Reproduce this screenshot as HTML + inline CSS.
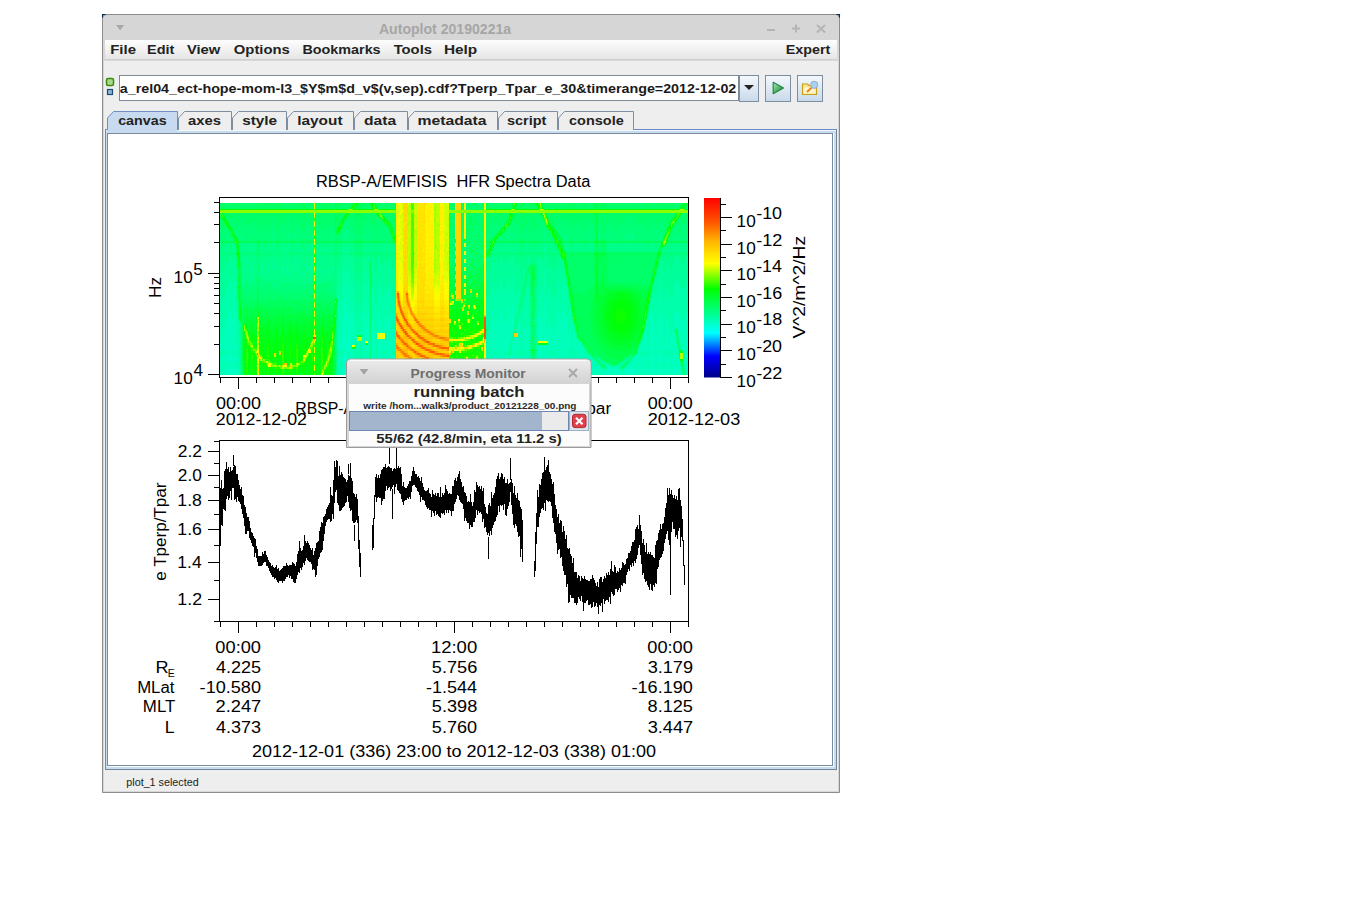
<!DOCTYPE html><html><head><meta charset="utf-8"><title>Autoplot</title><style>
html,body{margin:0;padding:0;background:#fff;width:1345px;height:916px;overflow:hidden;font-family:"Liberation Sans",sans-serif}
.a{position:absolute;box-sizing:border-box}
svg text{font-family:"Liberation Sans",sans-serif}
</style></head><body>
<div class="a" style="left:102px;top:14px;width:738px;height:779px;background:#d8d8d8;border:1px solid #8c8c8c;border-radius:2px 2px 0 0"></div>
<div class="a" style="left:103px;top:15px;width:736px;height:25px;background:#d6d6d6"></div>
<div class="a" style="left:105px;top:40px;width:732px;height:20px;background:linear-gradient(#fdfdfd,#e6e6e6);border-bottom:1px solid #cfcfcf"></div>
<div class="a" style="left:104px;top:61px;width:734px;height:730px;background:#eeeeee"></div>
<div class="a" style="left:119px;top:75px;width:620px;height:26px;background:#fff;border:1px solid #7b8a9b"></div>
<div class="a" style="left:739px;top:75px;width:20px;height:27px;background:linear-gradient(#f4f8fc,#c9d9ea);border:1px solid #7d8ea0"></div>
<div class="a" style="left:765px;top:75px;width:26px;height:27px;background:linear-gradient(#f4f8fc,#c9d9ea);border:1px solid #7d8ea0"></div>
<div class="a" style="left:797px;top:75px;width:26px;height:27px;background:linear-gradient(#f4f8fc,#c9d9ea);border:1px solid #7d8ea0"></div>
<div class="a" style="left:105px;top:129px;width:732px;height:641px;background:#c8dcf0;border:1px solid #6a8acb;border-right-color:#72849a;border-bottom-color:#72849a"></div>
<div class="a" style="left:106px;top:130px;width:730px;height:1px;background:#f4f8fc"></div>
<div class="a" style="left:833px;top:133px;width:1px;height:634px;background:#f8fbff"></div>
<div class="a" style="left:107px;top:766px;width:727px;height:1px;background:#f8fbff"></div>
<div class="a" style="left:107px;top:133px;width:726px;height:633px;background:#fff;border:1px solid #7a8a9a"></div>
<svg class="a" style="left:0;top:0" width="1345" height="916" viewBox="0 0 1345 916">
<defs>
<linearGradient id="cbar" x1="0" y1="0" x2="0" y2="1"><stop offset="0" stop-color="#ff0000"/><stop offset="0.133" stop-color="#ff5400"/><stop offset="0.247" stop-color="#ffb900"/><stop offset="0.365" stop-color="#ffff00"/><stop offset="0.506" stop-color="#00ff00"/><stop offset="0.753" stop-color="#00ffff"/><stop offset="0.882" stop-color="#0000ff"/><stop offset="1" stop-color="#000089"/></linearGradient>
<linearGradient id="specbg" x1="0" y1="0" x2="0" y2="1"><stop offset="0" stop-color="#00ff68"/><stop offset="0.3" stop-color="#00ff88"/><stop offset="0.7" stop-color="#00ffa4"/><stop offset="1" stop-color="#00ffb4"/></linearGradient>
<linearGradient id="dlgtitle" x1="0" y1="0" x2="0" y2="1"><stop offset="0" stop-color="#ececec"/><stop offset="1" stop-color="#d2d2d2"/></linearGradient>
<clipPath id="specclip"><rect x="220" y="203" width="468" height="172"/></clipPath>
<clipPath id="lineclip"><rect x="220" y="441" width="468" height="180"/></clipPath>
</defs>
<text x="110.23" y="54" font-size="13" font-weight="bold" fill="#222" text-anchor="start" textLength="25.76" lengthAdjust="spacingAndGlyphs" >File</text>
<text x="147.06" y="54" font-size="13" font-weight="bold" fill="#222" text-anchor="start" textLength="27.34" lengthAdjust="spacingAndGlyphs" >Edit</text>
<text x="186.93" y="54" font-size="13" font-weight="bold" fill="#222" text-anchor="start" textLength="33.31" lengthAdjust="spacingAndGlyphs" >View</text>
<text x="233.81" y="54" font-size="13" font-weight="bold" fill="#222" text-anchor="start" textLength="56.02" lengthAdjust="spacingAndGlyphs" >Options</text>
<text x="302.47" y="54" font-size="13" font-weight="bold" fill="#222" text-anchor="start" textLength="78.13" lengthAdjust="spacingAndGlyphs" >Bookmarks</text>
<text x="393.65" y="54" font-size="13" font-weight="bold" fill="#222" text-anchor="start" textLength="38.37" lengthAdjust="spacingAndGlyphs" >Tools</text>
<text x="443.9" y="54" font-size="13" font-weight="bold" fill="#222" text-anchor="start" textLength="33.35" lengthAdjust="spacingAndGlyphs" >Help</text>
<text x="785.77" y="54" font-size="13" font-weight="bold" fill="#222" text-anchor="start" textLength="44.61" lengthAdjust="spacingAndGlyphs" >Expert</text>
<text x="378.95" y="34" font-size="14" font-weight="bold" fill="#a6a6a6" text-anchor="start" textLength="132.25" lengthAdjust="spacingAndGlyphs" >Autoplot 20190221a</text>
<path d="M116 25 L124.2 25 L120.1 30.2 Z" fill="#a8a8a8"/>
<rect x="767" y="29" width="8" height="2" fill="#b4b4b4"/>
<path d="M792 28.5 H800 M796 24.5 V32.5" stroke="#b4b4b4" stroke-width="2"/>
<path d="M817 25 L825 32.5 M825 25 L817 32.5" stroke="#b4b4b4" stroke-width="2"/>
<path d="M102.6 17.5 V14.6 H105.5" stroke="#0a2a50" stroke-width="1.3" fill="none"/>
<path d="M836.5 14.6 H839.4 V17.5" stroke="#0a2a50" stroke-width="1.3" fill="none"/>
<rect x="106.5" y="78.5" width="7" height="7" rx="1.5" fill="#a8d888" stroke="#3f8a10" stroke-width="1.5"/>
<rect x="107.5" y="89.5" width="5" height="5" fill="#8cb4d4" stroke="#1d4d72" stroke-width="1.2"/>
<text x="119.77" y="93.3" font-size="13" font-weight="bold" fill="#1a1a1a" text-anchor="start" textLength="616.52" lengthAdjust="spacingAndGlyphs" >a_rel04_ect-hope-mom-l3_$Y$m$d_v$(v,sep).cdf?Tperp_Tpar_e_30&amp;timerange=2012-12-02</text>
<path d="M744 85 L754 85 L749 90 Z" fill="#222"/>
<linearGradient id="playg" x1="0" y1="0" x2="1" y2="1"><stop offset="0" stop-color="#b8e4b8"/><stop offset="0.6" stop-color="#3fae5a"/><stop offset="1" stop-color="#2a9048"/></linearGradient>
<path d="M773.2 82.3 L783.5 88 L773.2 93.7 Z" fill="url(#playg)" stroke="#23884a" stroke-width="1.2" stroke-linejoin="round"/>
<path d="M802.5 84 h5 l1.5 1.5 h7.5 v9 h-14 z" fill="#f8e68a" stroke="#c8a018" stroke-width="1.2"/>
<path d="M803.5 87.5 h12 v6 h-12 z" fill="#fff6c8"/>
<circle cx="814.2" cy="84.8" r="3.6" fill="#a8d0f4" stroke="#9aa6b8" stroke-width="0.9"/>
<path d="M811.6 87.6 L807 92" stroke="#f07a2a" stroke-width="2"/>
<path d="M107.5 130 V118 L113.5 111.5 H177.5 V130" fill="#c8daf0" stroke="#6f8fc4" stroke-width="1"/>
<path d="M178.5 130 V118 L184.5 111.5 H231.5 V130" fill="#eeeeee" stroke="#7d8ea0" stroke-width="1"/>
<path d="M232.5 130 V118 L238.5 111.5 H286.5 V130" fill="#eeeeee" stroke="#7d8ea0" stroke-width="1"/>
<path d="M287.5 130 V118 L293.5 111.5 H353.5 V130" fill="#eeeeee" stroke="#7d8ea0" stroke-width="1"/>
<path d="M354.5 130 V118 L360.5 111.5 H407.5 V130" fill="#eeeeee" stroke="#7d8ea0" stroke-width="1"/>
<path d="M408.5 130 V118 L414.5 111.5 H497.5 V130" fill="#eeeeee" stroke="#7d8ea0" stroke-width="1"/>
<path d="M498.5 130 V118 L504.5 111.5 H557.5 V130" fill="#eeeeee" stroke="#7d8ea0" stroke-width="1"/>
<path d="M558.5 130 V118 L564.5 111.5 H633.5 V130" fill="#eeeeee" stroke="#7d8ea0" stroke-width="1"/>
<rect x="107" y="130" width="70.5" height="3" fill="#c8daf0"/>
<text x="118.18" y="125" font-size="13" font-weight="bold" fill="#222" text-anchor="start" textLength="48.42" lengthAdjust="spacingAndGlyphs" >canvas</text>
<text x="188.06" y="125" font-size="13" font-weight="bold" fill="#222" text-anchor="start" textLength="32.93" lengthAdjust="spacingAndGlyphs" >axes</text>
<text x="242.16" y="125" font-size="13" font-weight="bold" fill="#222" text-anchor="start" textLength="34.99" lengthAdjust="spacingAndGlyphs" >style</text>
<text x="297.22" y="125" font-size="13" font-weight="bold" fill="#222" text-anchor="start" textLength="45.31" lengthAdjust="spacingAndGlyphs" >layout</text>
<text x="363.97" y="125" font-size="13" font-weight="bold" fill="#222" text-anchor="start" textLength="32.14" lengthAdjust="spacingAndGlyphs" >data</text>
<text x="417.48" y="125" font-size="13" font-weight="bold" fill="#222" text-anchor="start" textLength="69.08" lengthAdjust="spacingAndGlyphs" >metadata</text>
<text x="506.99" y="125" font-size="13" font-weight="bold" fill="#222" text-anchor="start" textLength="39.45" lengthAdjust="spacingAndGlyphs" >script</text>
<text x="569.02" y="125" font-size="13" font-weight="bold" fill="#222" text-anchor="start" textLength="54.7" lengthAdjust="spacingAndGlyphs" >console</text>
<text x="126.3" y="786" font-size="10.5" font-weight="normal" fill="#222" text-anchor="start" textLength="72.37" lengthAdjust="spacingAndGlyphs" >plot_1 selected</text>
<text x="315.99" y="187" font-size="16" font-weight="normal" fill="#000" text-anchor="start" textLength="274.45" lengthAdjust="spacingAndGlyphs" xml:space="preserve">RBSP-A/EMFISIS  HFR Spectra Data</text>
<g clip-path="url(#specclip)">
<rect x="220" y="203" width="468" height="172" fill="url(#specbg)"/>
<g stroke-width="1" shape-rendering="crispEdges"><path d="M227.5 369v4m1 -4v4m1 -4v4m1 -16v4m0 8v4m1 -14v2m0 8v4m2 -4v4m1 -16v4m0 8v6m1 -6v4m107 -4v4m1 -32v8m0 8v6m0 4v8m1 -38v12m0 6v8m0 4v8m1 -18v4m0 6v8m1 -28v2m0 8v4m0 6v8m1 -42v16m0 6v8m0 4v8m1 -34v8m0 8v6m0 4v8m1 -6v4m1 -4v4m1 -14v2m0 8v4m1 -16v4m0 8v4m1 -2v2m10 -4v4m1 -14v2m0 8v4m1 -2v2m2 -4v4m1 -14v2m0 8v4m4 -2v2m6 -4v4m1 -14v2m0 8v4m6 -2v2m3 -4v4m1 -4v4m1 -4v4m102 -14v2m0 8v4m1 -4v4m3 -4v4m4 -16v4m0 8v6m1 -18v4m0 8v6m1 -6v4m3 -4v4m2 -28v4m0 8v4m0 6v8m1 -18v4m0 8v6m1 -18v4m0 8v6m1 -6v4m1 -16v4m0 8v6m1 -18v4m0 6v8m1 -6v4m14 -14v2m0 8v4m11 -4v4m1 -4v4m1 -4v4m1 -4v4m2 -16v4m0 6v8m1 -40v6m0 4v4m0 6v8m0 4v8m1 -28v2m0 8v4m0 6v8m3 -6v4m1 -2v2m8 -4v4m1 -14v2m0 8v4m1 -4v4m3 -14v2m0 8v4m1 -4v4m1 -4v4m1 -14v2m0 8v4m1 -4v4m12 -4v4m1 -2v2m1 -2v2m1 -4v4m1 -4v4m5 -4v4m1 -4v4m1 -4v4m1 -4v4m1 -4v4m8 -4v4m8 -4v4m1 -4v6m6 -6v4m11 -2v2m1 -4v6m1 -6v4m1 -4v4m1 -4v4m1 -4v6m1 -8v8m1 -8v8m1 -6v4m1 -4v4m4 -2v2m7 -4v4m5 -4v4m1 -4v4m1 -4v4m1 -4v4m4 -2v2m1 -2v2m1 -4v4m1 -14v2m0 8v4m1 -16v4m0 8v4m5 -2v2m1 -4v4m7 -14v2m0 8v4m1 -14v2m0 8v4m1 -4v4m1 -4v4m1 -4v4m1 -4v4m7 -4v4m1 -16v4m0 8v4" stroke="#00ffca"/><path d="M220.5 323v28m0 4v20m1 -34v8m0 8v6m0 4v8m1 -34v8m0 8v6m0 4v8m1 -36v10m0 6v8m0 4v8m1 -42v18m0 4v8m0 4v8m1 -44v20m0 4v8m0 2v10m1 -56v32m0 2v22m1 -62v56m0 4v2m1 -58v52m0 4v2m1 -62v56m0 4v2m1 -64v46m0 4v8m0 4v2m1 -64v48m0 2v8m0 4v2m1 -56v32m0 2v22m1 -60v54m0 4v2m1 -66v48m0 4v8m1 -56v56m0 4v2m1 -32v6m0 8v6m0 4v8m1 -38v12m0 6v8m0 4v8m1 -28v2m0 8v6m0 4v8m1 -6v4m99 -46v24m0 4v20m1 -56v32m0 2v22m1 -34v8m0 8v6m0 4v8m1 -40v14m0 6v8m0 4v8m1 -60v54m0 4v2m1 -74v40m0 8v8m0 6v4m1 -68v38m0 12v6m0 8v4m1 -62v52m0 4v6m1 -62v42m0 2v8m0 4v6m1 -70v36m0 16v6m0 8v4m1 -66v40m0 8v8m0 6v4m1 -54v56m0 4v2m1 -60v54m0 4v2m1 -64v48m0 2v8m0 4v2m1 -64v34m0 4v8m0 4v8m0 4v2m1 -58v28m0 4v22m0 2v2m1 -38v8m0 10v8m0 4v8m1 -6v4m1 -4v4m1 -16v4m0 8v6m1 -28v2m0 8v4m0 6v8m1 -18v4m0 8v6m1 -6v4m1 -4v4m1 -32v8m0 8v6m0 4v8m1 -60v54m0 4v2m1 -64v48m0 2v8m0 4v2m1 -58v24m0 4v26m0 2v2m1 -50v16m0 4v6m0 4v20m1 -60v26m0 4v24m0 4v2m1 -64v48m0 2v8m0 4v2m1 -18v4m2 -4v4m0 8v4m1 -56v54m0 2v2m1 -56v32m0 2v22m1 -44v20m0 4v8m0 2v10m1 -28v2m0 8v4m0 6v8m1 -18v4m0 6v8m1 -48v6m0 6v12m0 4v20m1 -62v20m0 6v30m0 4v2m1 -64v22m0 6v20m0 2v8m0 4v2m1 -56v14m0 6v12m0 2v22m1 -52v10m0 6v12m0 4v20m1 -46v4m0 6v12m0 4v8m0 2v10m1 -54v12m0 6v12m0 4v20m1 -54v12m0 6v12m0 4v20m1 -58v54m0 2v2m1 -52v28m0 4v20m1 -56v32m0 2v22m1 -60v54m0 4v2m1 -60v54m0 4v2m1 -60v54m0 4v2m1 -46v22m0 4v20m1 -42v16m0 6v8m0 4v8m1 -34v8m0 8v6m0 4v8m1 -46v22m0 4v8m0 2v10m1 -50v26m0 4v20m91 -32v6m0 8v6m0 4v8m1 -36v10m0 6v8m0 4v8m1 -42v18m0 4v8m0 2v10m1 -48v24m0 4v20m1 -42v16m0 6v8m0 4v8m1 -56v32m0 2v22m1 -64v48m0 2v8m0 4v2m1 -58v52m0 4v2m1 -54v30m0 4v20m1 -52v28m0 4v20m1 -58v52m0 4v2m1 -46v22m0 4v20m1 -54v30m0 4v20m1 -54v30m0 4v20m1 -68v50m0 4v8m1 -62v50m0 4v8m1 -54v54m0 4v2m1 -56v32m0 2v22m1 -52v28m0 4v20m1 -58v52m0 4v2m1 -54v30m0 4v20m1 -72v42m0 4v8m0 4v6m1 -60v44m0 10v8m1 -58v38m0 12v8m1 -52v24m0 14v14m0 4v2m1 -68v32m0 12v6m0 4v8m1 -64v28m0 12v12m0 4v6m1 -54v14m0 14v28m0 4v2m1 -38v14m0 4v20m1 -38v14m0 4v8m0 2v10m1 -44v2m0 4v14m0 4v20m1 -46v4m0 4v14m0 4v20m1 -52v28m0 2v22m1 -54v30m0 4v20m1 -34v8m0 8v6m0 4v8m1 -18v4m0 8v4m1 -16v4m0 8v6m1 -48v24m0 4v20m1 -48v24m0 4v20m1 -36v10m0 6v8m0 4v8m1 -46v22m0 4v8m0 2v10m1 -64v48m0 2v8m0 4v2m1 -56v2m0 4v26m0 2v22m1 -6v2m8 -28v6m0 8v6m0 4v8m1 -62v28m0 4v24m0 4v2m1 -62v28m0 4v24m0 4v2m1 -60v26m0 4v24m0 4v2m1 -58v24m0 4v24m0 4v2m1 -56v22m0 4v30m1 -68v34m0 4v12m0 4v6m1 -68v36m0 14v6m0 8v4m1 -62v36m0 4v2m0 2v8m0 4v6m1 -38v12m0 4v6m0 4v20m1 -46v12m0 4v6m0 4v20m1 -60v54m0 4v2m1 -56v52m0 2v2m1 -50v26m0 4v20m1 -52v28m0 4v20m1 -48v24m0 4v20m1 -42v16m0 6v8m0 4v8m1 -38v12m0 6v8m0 4v8m1 -50v26m0 4v20m1 -50v26m0 4v20m1 -60v54m0 4v2m1 -64v48m0 2v8m0 4v2m1 -58v52m0 4v2m1 -56v56m1 -54v30m0 4v20m1 -64v48m0 2v8m0 4v2m1 -62v56m0 4v2m1 -62v56m0 4v2m1 -64v48m0 2v8m0 4v2m1 -60v54m0 4v2m1 -56v56m1 -38v12m0 6v8m0 4v8m1 -50v26m0 4v20m1 -48v24m0 4v20m1 -34v8m0 8v6m0 4v8m1 -18v4m0 8v6m1 -38v12m0 6v8m0 4v8m1 -42v18m0 2v22m1 -38v14m0 4v20m1 -36v12m0 4v20m1 -36v12m0 2v22m1 -34v28m0 4v2m1 -32v28m0 2v2m1 -32v28m0 2v2m1 -30v24m0 4v2m1 -30v24m0 4v2m1 -28v4m0 4v20m1 -18v4m0 6v8m1 -18v4m0 6v8m1 -20v8m0 4v8m1 -22v16m0 4v2m1 -20v14m0 4v2m1 -18v12m0 4v2m1 -18v12m0 4v2m1 -18v12m0 4v2m1 -16v16m1 -16v4m0 4v8m1 -14v14m1 -12v12m1 -12v12m1 -10v10m1 -10v10m1 -10v4m0 4v2m1 -8v8m1 -6v6m1 -6v6m1 -4v4m1 -4v4m1 -6v6m1 -6v6m1 -10v4m0 4v2m1 -10v4m1 -2v8m1 -8v8m1 -8v8m1 -8v8m1 -8v8m1 -8v2m0 4v2m1 -8v8m1 -8v8m1 -8v8m1 -8v8m1 -6v6m1 -6v6m1 -4v4m1 -4v4m1 -6v6m1 -6v6m1 -8v4m0 2v2m1 -8v2m1 -4v4m0 4v2m1 -10v4m0 4v2m1 -12v6m0 4v2m1 -14v8m1 -10v8m1 -8v8m1 -10v12m0 4v2m1 -18v12m0 4v2m1 -18v18m1 -20v8m0 4v8m1 -20v8m0 4v8m1 -22v18m0 2v2m1 -20v20m1 -30v6m0 4v20m1 -32v8m0 4v20m1 -34v10m0 4v20m1 -34v8m0 8v6m0 4v8m1 -40v16m0 4v20m1 -44v38m0 4v2m1 -48v24m0 4v20m1 -34v8m0 8v6m0 4v8m1 -28v2m0 8v4m0 6v8m1 -46v22m0 4v20m1 -62v56m0 4v2m1 -62v56m0 4v2m1 -62v56m0 4v2m1 -62v56m0 4v2m1 -50v26m0 4v20m1 -42v16m0 6v8m0 4v8m1 -38v12m0 6v8m0 4v8m1 -56v52m0 2v2m1 -56v52m0 2v2m1 -62v56m0 4v2m1 -64v48m0 2v8m0 4v2m1 -64v46m0 4v8m0 4v2m1 -56v56m1 -36v10m0 8v6m0 4v8m1 -30v4m0 8v6m0 4v8m1 -48v24m0 4v20m1 -58v54m0 2v2m1 -58v52m0 4v2m1 -48v24m0 4v20m1 -34v8m0 8v6m0 4v8m1 -42v18m0 4v8m0 4v8m1 -40v14m0 6v8m0 4v8m1 -46v22m0 4v20m1 -42v18m0 4v20m1 -64v18m0 4v26m0 2v8m0 4v2m1 -64v16m0 12v20m0 2v8m0 4v2m1 -62v14m0 18v24m0 4v2m1 -62v14m0 26v16m0 4v2m1 -64v20m0 24v14m0 4v2m1 -62v22m0 2v2m0 24v6m0 4v2m1 -58v24m0 26v8m1 -52v24m0 24v4m1 -56v32m1 -28v28m0 4v4m1 -38v30m0 4v8m1 -34v22m0 4v8m0 4v4m1 -58v56m0 4v2m1 -64v46m0 4v8m0 4v2" stroke="#00ffba"/><path d="M220.5 291v32m0 28v4m1 -54v40m0 8v8m0 6v4m1 -66v40m0 8v8m0 6v4m1 -68v40m0 10v6m0 8v4m1 -70v36m0 18v4m0 8v4m1 -72v36m0 20v4m0 8v2m1 -76v30m0 32v2m1 -70v30m1 -26v30m1 -34v30m1 -32v30m1 -30v30m1 -22v30m0 32v2m1 -68v30m1 -36v30m1 -24v28m1 -8v38m0 6v8m0 6v4m1 -48v18m0 12v6m0 8v4m1 -46v26m0 2v8m0 6v4m1 -30v12m0 6v14m0 4v2m98 -52v28m0 4v8m0 4v8m1 -82v6m0 2v26m0 24v4m1 -66v30m0 32v2m1 -52v40m0 8v8m0 6v4m1 -68v36m0 14v6m0 8v4m1 -82v30m1 -42v28m1 -30v28m1 -24v30m1 -30v30m1 -36v28m1 -26v30m1 -18v30m1 -28v30m1 -34v30m1 -30v30m1 -24v30m1 -18v38m0 12v6m0 8v4m1 -54v56m0 4v2m1 -62v56m0 4v2m1 -68v28m0 6v16m0 4v8m1 -64v30m0 6v6m0 2v8m0 4v6m1 -58v26m0 6v16m0 4v8m1 -56v22m0 6v28m0 4v2m1 -62v22m0 6v28m0 4v2m1 -74v40m0 8v8m0 6v4m1 -82v30m1 -34v30m1 -24v30m1 -24v32m0 26v4m1 -70v30m1 -34v30m1 0v2m0 6v2m0 2v2m0 2v2m0 2v4m0 2v14m0 4v2m0 4v2m0 2v10m2 -64v46m0 4v8m0 4v2m1 -88v30m1 -28v30m0 32v2m1 -58v36m0 20v4m0 8v2m1 -60v42m0 2v8m0 4v6m1 -62v52m0 4v6m1 -72v32m0 24v4m1 -72v30m1 -32v30m1 -22v30m0 32v2m1 -62v32m0 28v4m1 -60v34m0 22v4m0 8v2m1 -74v30m0 30v4m1 -64v30m0 30v4m1 -68v30m1 -26v32m0 28v4m1 -66v30m0 32v2m1 -68v30m1 -30v30m1 -30v30m1 -20v34m0 22v4m1 -58v36m0 16v6m0 8v4m1 -66v40m0 8v8m0 6v4m1 -72v34m0 22v4m0 8v2m1 -72v32m0 26v4m91 -52v24m0 6v10m0 6v8m0 6v4m1 -66v28m0 2v8m0 10v6m0 8v4m1 -70v36m0 18v4m0 8v2m1 -70v32m0 24v4m1 -58v36m0 16v6m0 8v4m1 -78v30m0 32v2m1 -72v30m1 -24v30m1 -26v30m0 30v4m1 -64v32m0 28v4m1 -68v30m1 -22v34m0 22v4m1 -64v30m0 30v4m1 -64v30m0 30v4m1 -78v30m1 -30v30m1 -22v30m1 -26v30m0 32v2m1 -62v32m0 28v4m1 -68v30m1 -26v30m0 30v4m1 -80v28m1 -26v30m0 44v2m0 2v2m1 -76v30m0 44v2m1 -70v30m0 24v4m0 8v2m1 -78v30m0 32v2m0 8v2m1 -76v30m0 28v2m0 6v4m1 -62v30m0 14v4m0 8v2m1 -50v36m0 24v4m1 -58v22m0 12v2m0 18v4m0 8v2m1 -72v22m0 12v4m0 20v4m1 -60v14m0 14v6m0 22v4m1 -66v16m0 2v2m0 8v6m0 28v2m1 -62v10m0 14v6m0 30v4m1 -42v28m0 8v8m0 6v4m1 -56v46m0 4v8m0 4v2m1 -66v48m0 4v8m1 -68v26m0 24v4m1 -58v30m0 24v4m1 -54v38m0 10v6m0 8v4m1 -72v34m0 22v4m0 8v2m1 -82v28m1 -24v6m0 2v24m0 2v4m0 26v2m1 -44v2m0 2v2m0 14v2m0 2v16m0 8v12m0 2v4m1 -18v2m5 10v4m1 -46v12m0 2v4m0 2v2m0 6v8m0 4v8m1 -74v42m0 6v8m0 6v4m1 -82v28m1 -30v30m1 -28v30m1 -28v30m1 -28v30m1 -42v30m1 -38v30m1 -24v30m1 -10v34m0 22v4m1 -60v34m0 22v4m1 -70v30m1 -26v30m1 -26v32m0 26v4m1 -64v32m0 28v4m1 -60v32m0 24v4m1 -58v36m0 16v6m0 8v4m1 -68v38m0 12v6m0 8v4m1 -74v32m0 26v4m1 -62v32m0 26v4m1 -70v30m1 -34v30m1 -24v30m1 -28v30m1 -28v30m0 30v4m1 -74v30m1 -28v30m1 -30v30m1 -30v28m1 -22v26m1 -22v26m1 -18v36m0 12v6m0 8v4m1 -64v22m0 26v4m1 -46v18m0 24v4m1 -38v24m0 8v8m0 6v4m1 -46v36m0 4v8m1 -44v12m0 12v6m0 8v4m1 -38v4m0 18v2m1 -20v4m0 14v4m1 -18v2m0 12v4m1 -4v2m2 -12v2m4 8v4m1 -6v8m0 4v6m1 -16v6m0 4v6m1 -16v4m0 8v4m2 -14v2m1 0v2m1 -2v2m3 6v4m1 -8v2m1 0v2m2 0v2m3 -6v2m1 0v2m0 4v2m1 -8v2m1 -2v2m0 6v2m1 -8v2m0 4v2m1 -8v2m1 -2v4m3 -2v2m1 -2v2m7 -2v2m1 -2v2m1 -2v4m1 -6v4m1 -4v2m0 4v2m1 -8v2m0 4v2m1 -10v2m1 -2v2m0 4v2m2 -10v2m0 4v2m2 -4v2m7 -10v2m1 6v4m1 -4v4m1 -18v4m1 -6v8m1 -4v4m1 -14v2m0 8v4m1 -18v4m0 10v4m1 -18v4m0 8v8m0 6v4m1 -34v2m0 16v4m1 -26v2m1 -8v4m0 24v4m1 -36v22m0 8v8m0 6v4m1 -52v32m0 2v8m0 4v6m1 -58v20m0 22v4m1 -52v10m1 -14v14m1 -18v18m1 -24v24m1 -20v32m0 26v4m1 -58v36m0 16v6m0 8v4m1 -68v38m0 12v6m0 8v4m1 -78v30m1 -30v30m1 -36v30m1 -32v30m1 -30v30m1 -22v30m1 -18v38m0 10v8m0 6v4m1 -64v42m0 4v8m0 6v4m1 -74v34m0 24v4m1 -68v30m1 -30v30m1 -24v34m0 24v4m1 -54v40m0 8v8m0 6v4m1 -70v36m0 18v4m0 8v4m1 -70v38m0 14v6m0 8v4m1 -72v34m0 22v4m1 -60v38m0 18v4m1 -74v30m0 20v2m1 -52v30m0 16v2m0 8v2m1 -56v30m0 14v2m0 12v4m1 -62v30m0 14v2m0 20v4m1 -72v30m0 20v2m0 18v2m1 -70v30m0 22v2m0 6v2m0 14v4m1 -76v30m0 24v4m0 20v2m1 -76v32m0 24v2m0 20v2m1 -82v30m1 -28v32m0 28v4m0 4v4m1 -74v32m0 30v4m0 8v4m1 -72v34m0 22v4m0 8v4m0 4v2m1 -90v30m1 -32v30" stroke="#00ffaa"/><path d="M220.5 263v28m1 -20v30m1 -28v28m1 -30v28m1 -30v28m1 -30v28m1 -32v26m1 -32v26m1 -22v26m1 -30v26m1 -26v24m1 -24v24m1 -18v26m1 -30v26m1 -28v22m1 -20v26m1 -2v22m1 -4v18m2 2v16m0 12v6m1 12v8m2 -118v6m0 2v4m1 -6v2m1 8v2m1 -4v2m1 2v2m1 -10v2m1 -8v2m0 6v2m3 -6v2m0 2v2m1 -8v2m0 6v2m0 2v2m1 -12v2m3 4v2m4 -8v2m1 -2v4m0 2v2m1 -6v2m1 -2v2m0 6v2m1 -6v2m4 -8v4m0 2v2m3 -6v2m0 2v2m1 -14v2m0 2v2m0 2v2m1 -10v2m0 6v2m1 -4v6m1 0v2m4 -6v2m2 -4v2m0 2v2m1 -6v8m1 -10v4m0 2v2m1 -4v2m0 4v2m0 4v2m2 -12v4m1 -16v2m0 4v8m1 -12v2m0 12v2m1 -20v14m1 2v2m1 -2v2m2 -8v6m0 2v2m1 -18v2m0 4v2m0 4v2m1 -4v4m1 -10v6m1 -2v4m0 2v2m0 2v2m1 -16v4m0 2v4m2 2v2m0 4v2m2 -8v2m4 -10v4m1 -6v2m1 2v4m1 -2v2m1 -4v4m1 -6v8m1 -10v2m0 4v4m1 -16v2m0 4v4m0 2v4m4 -6v2m1 0v2m2 -2v2m1 -8v4m0 8v2m1 -20v2m0 4v2m0 6v2m1 -12v4m0 4v2m1 0v2m3 -4v2m1 0v2m1 -8v2m0 2v2m1 -4v4m0 2v2m2 -8v2m1 -6v8m4 0v28m0 6v18m0 28v4m0 8v4m1 -104v30m0 6v2m1 -38v26m1 -16v28m1 -32v30m1 -40v26m1 -36v4m0 2v18m1 -26v6m0 2v16m1 -20v2m0 4v18m1 -24v2m0 4v18m1 -30v8m0 2v14m1 -22v6m0 2v16m1 -14v26m1 -24v26m1 -28v24m1 -24v24m1 -20v26m1 -16v28m1 -16v30m1 -30v30m1 -36v30m1 -32v30m1 -26v30m1 -26v30m1 -30v30m1 -42v30m1 -42v26m1 -28v24m1 -20v26m1 -22v28m1 -34v26m1 -28v24m1 -22v2m0 16v2m0 6v2m0 6v2m0 2v2m0 2v6m0 2v2m0 4v4m0 2v2m0 2v2m0 2v2m0 4v2m0 14v4m0 8v2m1 -24v6m0 26v2m1 -94v30m1 -50v26m1 -24v26m1 -22v28m1 -20v30m1 -30v30m1 -38v28m1 -38v26m1 -26v24m1 -18v26m1 -24v26m1 -24v28m1 -32v28m1 -28v28m1 -30v26m1 -24v28m1 -28v26m1 -30v26m1 -26v26m1 -26v26m1 -18v28m1 -26v28m1 -24v28m1 -34v28m1 -30v28m59 -50v2m21 -36v2m2 30v2m1 -26v2m3 -16v2m5 68v30m0 24v2m1 -58v30m0 28v2m1 -62v28m1 -30v28m1 -26v28m1 -34v26m1 -32v24m1 -20v26m1 -24v28m1 -26v26m1 -30v26m1 -20v28m1 -32v28m1 -28v28m1 -34v20m1 -20v20m1 -18v26m1 -22v26m1 -26v28m1 -30v26m1 -24v28m1 -40v2m0 4v18m1 -18v20m0 76v2m1 -98v24m0 68v4m1 -92v26m0 58v6m1 -94v20m0 64v8m1 -98v2m0 4v18m0 60v6m1 -84v26m0 48v4m1 -72v28m0 38v2m1 -64v30m0 22v4m0 6v2m1 -66v28m0 22v4m1 -52v28m0 14v8m0 2v2m1 -58v26m0 16v2m0 2v2m1 -48v28m0 10v4m0 2v2m0 4v2m1 -42v24m0 12v4m1 -32v12m0 12v6m1 -34v10m0 14v8m1 -42v18m0 12v4m1 -34v12m0 14v4m1 -8v12m1 -18v12m1 -38v10m0 12v4m1 -26v8m0 10v12m0 6v2m1 -10v4m0 6v14m0 2v2m0 2v14m0 2v2m0 16v8m1 -48v2m0 8v2m0 2v2m0 2v6m0 4v2m0 8v2m0 4v2m0 4v2m0 8v6m1 -16v2m3 -42v2m0 10v2m0 6v2m0 16v2m0 10v2m1 -58v4m0 4v2m0 4v2m0 6v6m0 2v2m0 8v4m0 4v2m0 10v2m1 -86v2m0 2v6m0 2v26m0 12v2m0 4v2m0 2v6m0 8v4m1 -96v30m1 -44v28m1 -28v26m1 -24v26m1 -24v26m1 -26v28m1 -32v20m1 -32v8m0 2v14m1 -18v2m0 4v18m1 -8v28m1 -28v28m1 -36v26m1 -24v28m1 -24v28m1 -28v26m1 -24v28m1 -26v28m1 -26v28m1 -34v28m1 -28v28m1 -34v26m1 -28v24m1 -20v26m1 -26v28m1 -26v28m1 -28v18m1 -14v16m1 -12v12m1 -6v6m1 0v6m1 0v4m1 2v6m1 0v2m1 4v2m1 6v2m1 2v2m1 2v2m1 0v4m2 4v2m1 2v2m1 0v2m1 -2v2m2 0v4m2 0v2m2 2v2m7 6v2m4 2v2m1 -6v2m2 0v2m1 0v2m0 2v2m1 -8v2m1 6v2m1 -6v2m2 0v2m1 0v2m1 -6v2m4 0v2m1 -2v2m3 -2v2m1 -2v2m4 0v2m1 -4v2m1 -6v2m3 -4v4m4 -2v2m3 -114v2m0 106v2m2 -4v2m2 -4v2m1 -2v2m2 -10v2m1 -4v2m1 -6v2m2 -6v2m1 -6v2m1 -6v2m1 -8v2m1 -6v2m1 -6v2m1 -8v2m1 -8v2m1 -6v2m1 -8v4m1 -8v2m1 -6v10m1 -12v16m1 -20v22m1 -26v16m1 -20v20m1 -24v18m1 -22v20m1 -24v24m1 -20v28m1 -18v30m1 -28v30m1 -36v26m1 -32v26m1 -26v26m1 -22v28m1 -22v30m1 -32v28m1 -28v28m1 -30v28m1 -28v28m1 -38v24m1 -24v24m0 54v2m1 -80v26m0 54v2m1 -82v26m0 46v2m0 14v4m1 -92v24m0 52v2m0 14v2m0 2v2m1 -98v26m0 56v2m1 -80v26m0 58v4m1 -84v26m0 58v2m1 -90v28m0 78v2m0 4v2m1 -110v26m1 -28v26m0 78v4m1 -104v28m0 78v2m1 -118v26m1 -26v24" stroke="#00ff9a"/><path d="M220.5 243v10m0 2v8m1 -16v6m0 2v16m1 -22v4m0 2v18m1 -26v6m0 2v16m1 -26v8m0 2v14m1 -24v8m0 2v12m1 -24v10m0 2v8m1 -26v2m0 4v10m0 2v2m1 -14v10m0 2v6m1 -24v2m0 4v10m0 2v2m1 -20v2m0 4v10m0 2v2m1 -20v2m0 4v10m0 2v2m1 -14v10m0 2v8m1 -20v10m0 2v4m1 -16v10m0 2v2m1 -6v2m0 2v4m1 2v2m0 2v18m1 0v2m0 8v8m1 18v2m1 -84v2m1 -2v2m0 4v10m0 70v44m1 -134v6m0 4v10m0 2v16m0 4v2m0 6v2m1 -50v4m0 4v10m0 2v2m0 6v2m0 4v18m1 -44v10m0 2v8m0 2v18m0 2v2m1 -42v8m0 2v18m0 2v10m0 2v2m1 -42v6m0 4v14m0 2v8m0 2v4m1 -44v10m0 2v20m0 2v4m1 -38v10m0 2v12m0 2v14m1 -40v10m0 2v6m0 2v6m0 2v12m0 6v2m1 -48v10m0 2v30m1 -42v10m0 2v26m0 2v2m1 -42v10m0 2v10m0 2v2m0 2v4m0 2v4m0 2v2m1 -42v10m0 2v8m0 2v6m0 2v2m0 2v2m0 2v2m1 -40v10m0 2v10m0 2v16m1 -40v10m0 2v30m1 -42v10m0 2v14m0 2v10m0 2v4m1 -40v2m0 2v2m0 2v16m0 2v4m0 8v2m3 -40v6m0 2v26m0 8v2m1 -48v10m0 4v8m0 2v18m1 -42v10m0 2v10m0 4v2m0 2v6m0 2v4m1 -42v10m0 2v12m0 2v8m0 2v2m0 2v2m1 -42v6m0 2v2m0 2v12m0 2v6m0 2v4m0 2v2m1 -38v6m0 2v16m0 2v6m1 -28v2m0 4v20m0 2v4m0 2v2m1 -30v24m1 -36v8m0 2v28m1 -40v10m0 2v10m0 4v2m0 2v10m1 -40v10m0 2v26m1 -34v6m0 2v26m1 -38v10m0 2v12m0 2v2m0 2v4m0 2v2m1 -46v4m0 4v10m0 2v4m0 2v2m0 2v2m0 2v12m0 2v2m0 2v2m1 -56v6m0 4v10m0 2v4m0 2v6m0 2v16m1 -42v10m0 2v10m0 6v16m1 -44v10m0 2v16m0 2v8m0 2v4m1 -36v2m0 4v24m0 2v2m1 -34v2m0 4v20m0 6v2m1 -34v2m0 4v20m0 2v2m0 6v2m1 -46v10m0 2v12m0 2v2m0 4v8m1 -40v10m0 2v30m1 -42v10m0 2v10m0 2v2m0 2v10m1 -38v10m0 2v10m0 8v8m0 4v2m1 -44v10m0 2v8m0 4v2m0 2v14m1 -42v10m0 2v12m0 2v4m0 2v2m0 4v2m1 -38v8m0 2v24m0 2v4m1 -40v8m0 2v14m0 4v4m0 2v2m1 -44v2m0 4v10m0 2v2m0 2v4m0 8v10m1 -48v6m0 4v10m0 2v4m0 2v12m0 2v6m0 4v2m1 -56v8m0 4v10m0 16v8m0 2v6m1 -42v10m0 2v16m0 2v4m0 2v4m1 -36v6m0 2v16m0 2v8m1 -24v26m1 -40v10m0 2v10m0 6v2m0 2v6m0 2v2m1 -52v6m0 4v14m0 2v4m0 2v4m0 2v10m1 -46v4m0 4v10m0 2v12m0 4v12m0 2v2m1 -44v10m0 2v6m0 6v6m0 2v8m0 2v2m1 -44v10m0 2v10m0 4v2m0 2v2m0 2v2m1 -42v2m0 4v10m0 2v6m0 4v2m0 4v6m0 6v2m1 -42v10m0 2v28m0 4v2m1 -40v4m0 2v18m0 2v4m0 2v2m0 2v2m1 -36v2m0 4v18m0 2v6m1 -36v6m0 2v18m0 2v4m0 4v2m1 -36v4m0 2v30m1 -34v2m0 4v32m1 -44v8m0 2v24m0 2v2m0 2v4m1 -46v10m0 2v10m0 4v14m1 -46v2m0 4v10m0 2v8m0 2v20m1 -50v4m0 4v10m0 2v12m0 4v12m1 -40v10m0 2v14m0 2v16m1 -44v10m0 2v12m0 4v12m1 -40v10m0 2v10m0 8v10m1 -46v2m0 4v10m0 2v8m0 2v4m0 4v8m1 -44v2m0 4v10m0 2v2m0 2v4m0 4v2m0 4v10m0 6v2m2 -48v10m0 2v28m1 -40v10m0 2v28m1 -40v10m0 2v12m0 2v18m1 -44v10m0 2v14m0 2v8m0 2v2m1 -36v6m0 4v28m1 -40v8m0 2v14m0 2v10m1 -38v10m0 2v8m0 4v8m0 2v2m0 2v4m1 -48v2m0 4v10m0 2v2m0 2v4m0 2v6m0 2v10m1 -40v10m0 2v6m0 4v4m0 2v12m1 -36v6m0 2v16m0 2v10m0 6v2m1 -48v10m0 2v22m0 2v6m1 -38v6m0 2v28m1 -38v8m0 2v14m0 2v8m0 2v4m1 -40v8m0 2v16m0 2v6m1 -36v10m0 2v10m0 2v2m0 2v8m0 6v2m1 -44v10m0 2v12m0 4v2m0 2v8m1 -40v10m0 2v22m0 2v4m1 -40v10m0 2v12m0 2v12m1 -44v2m0 4v10m0 2v8m0 8v14m0 6v2m1 -48v4m0 2v2m0 4v20m0 4v10m1 -24v2m0 8v2m0 12v2m1 -36v2m0 2v4m0 4v8m0 2v18m0 30v2m0 2v2m0 2v14m0 10v4m0 6v6m1 -128v6m0 2v16m0 30v4m1 -62v10m0 2v8m1 -20v10m0 2v8m1 -14v4m0 2v18m1 -28v8m0 2v14m1 -32v2m0 4v10m0 2v4m1 -28v8m0 4v6m0 4v2m1 -26v12m0 2v4m0 6v2m1 -22v6m0 4v8m0 4v2m1 -26v8m0 4v8m0 2v4m1 -30v14m0 2v2m0 8v2m1 -26v10m0 4v4m0 6v2m1 -18v2m0 4v10m0 2v2m1 -14v10m0 2v4m1 -22v2m0 4v10m0 2v2m1 -22v4m0 4v10m0 2v2m1 -14v10m0 2v6m1 -14v6m0 2v16m1 -14v26m1 -26v26m1 -26v20m1 -26v2m0 4v18m1 -18v22m1 -22v26m1 -26v26m1 -36v6m0 2v16m1 -34v2m0 4v10m0 2v4m1 -24v4m0 4v10m0 2v2m1 -14v10m0 2v6m1 -18v10m0 2v10m1 -28v2m0 4v10m0 2v4m1 -24v4m0 4v10m0 2v2m1 -20v2m0 4v10m0 2v4m0 8v2m0 2v6m0 2v6m0 4v4m0 2v2m0 2v2m0 6v2m0 4v2m1 -72v10m0 2v6m0 46v2m0 24v2m0 4v2m0 6v2m0 2v2m0 4v6m0 2v8m1 -130v10m0 2v26m1 -38v10m0 2v6m1 -18v10m0 2v8m1 -18v8m0 2v12m1 -16v2m0 4v18m1 -24v2m0 4v18m1 -32v10m0 2v12m1 -30v2m0 4v10m0 2v2m1 -22v4m0 4v10m0 2v2m1 -14v10m0 2v8m1 -20v10m0 2v10m1 -22v10m0 2v12m1 -24v10m0 2v8m1 -20v10m0 2v8m1 -20v10m0 2v6m1 -18v10m0 2v8m1 -20v10m0 2v8m1 -20v10m0 2v4m1 -22v2m0 4v10m0 2v4m1 -16v10m0 2v4m1 -16v10m0 2v12m1 -22v8m0 2v14m1 -20v4m0 2v18m1 -28v8m0 2v12m1 -24v10m0 2v10m54 -26v2m0 22v2m1 -10v2m1 -22v2m0 14v2m0 2v6m1 -48v2m0 6v2m0 16v2m0 8v2m0 8v2m1 -54v2m9 2v2m0 20v2m1 0v2m0 6v2m3 2v2m0 4v2m2 6v2m2 -36v2m0 14v2m1 -32v2m1 22v2m1 -20v2m0 12v2m0 24v4m1 -58v2m0 20v2m0 28v2m1 -40v2m0 22v2m1 -8v2m1 -22v2m1 -16v2m2 26v2m0 18v2m1 -40v2m0 36v2m0 14v2m1 -58v2m0 22v2m0 16v2m0 4v2m1 -46v2m0 20v2m0 18v2m3 -2v16m0 58v2m1 -76v14m1 -14v12m1 -12v10m1 -10v12m1 -14v8m1 -12v2m0 2v2m1 -8v4m0 2v6m1 -14v6m0 2v8m1 -18v8m0 2v10m1 -22v10m0 2v6m1 -18v10m0 2v12m1 -24v10m0 2v8m1 -20v10m0 2v8m1 -26v2m0 4v10m0 2v2m1 -20v2m0 4v10m0 2v2m1 -14v10m0 2v4m1 -16v10m0 2v8m1 -20v10m0 2v8m1 -20v10m0 2v6m1 -18v10m0 2v8m1 -32v8m0 4v8m0 2v4m1 -24v6m0 4v10m0 2v2m1 -22v4m0 4v10m0 2v2m0 96v2m1 -112v10m0 2v6m0 90v2m1 -120v6m0 4v10m0 2v2m1 -24v6m0 4v8m0 4v2m1 -20v2m0 4v10m0 2v2m0 80v2m1 -96v10m0 2v8m0 64v2m1 -84v8m0 2v12m0 56v2m0 2v2m1 -86v10m0 2v10m0 54v2m0 2v4m1 -84v10m0 2v12m0 54v2m1 -80v10m0 2v8m0 48v6m1 -74v10m0 2v8m0 42v2m0 2v2m1 -62v4m0 2v18m0 24v6m1 -46v24m0 12v2m0 6v2m1 -46v20m0 10v4m0 4v2m1 -54v10m0 2v12m0 18v2m0 6v4m1 -54v10m0 2v12m0 12v4m0 6v4m1 -46v6m0 2v22m0 8v4m1 -46v10m0 2v18m0 8v2m1 -48v4m0 4v10m0 2v2m0 10v2m0 8v2m1 -42v2m0 4v10m0 2v2m1 -12v8m0 2v10m0 8v12m0 4v6m1 -46v4m0 2v8m0 34v2m0 2v2m0 2v2m0 4v8m0 6v2m0 6v4m0 2v8m0 4v2m0 2v2m0 4v2m0 2v4m1 -126v10m0 2v8m0 44v2m0 10v2m0 2v2m0 4v4m0 8v2m0 12v2m0 4v2m0 4v8m1 -128v6m0 2v8m0 72v2m0 8v2m0 8v2m1 -108v4m0 2v8m0 60v2m0 22v2m1 -104v8m0 2v8m0 50v2m0 2v2m0 2v4m0 2v2m0 6v2m0 4v2m0 28v4m1 -126v4m0 2v8m0 22v2m0 4v2m0 4v6m0 2v6m0 6v4m0 2v4m0 2v2m0 2v2m0 6v2m0 2v4m0 2v2m0 4v4m0 2v6m1 -120v4m0 2v14m0 4v16m0 2v2m0 6v2m1 -56v8m0 2v16m1 -34v2m0 4v10m0 2v2m1 -20v2m0 4v10m0 2v2m1 -20v2m0 4v10m0 2v4m1 -16v10m0 2v6m1 -18v10m0 2v6m1 -28v6m0 4v10m0 2v2m1 -28v12m0 2v2m0 8v2m1 -22v6m0 4v8m0 2v4m1 -14v10m0 2v12m1 -24v10m0 2v12m1 -24v10m0 2v4m1 -16v10m0 2v6m1 -18v10m0 2v10m1 -22v10m0 2v10m1 -22v10m0 2v12m1 -22v8m0 2v14m1 -22v6m0 2v16m1 -26v8m0 2v10m1 -18v6m0 2v10m1 -16v4m0 2v4m1 -8v2m0 2v2m1 -2v6m1 -4v4m1 -2v4m1 -28v4m0 20v4m1 -26v2m0 4v2m0 20v2m1 -30v2m0 4v6m0 20v2m1 -36v4m0 4v8m0 22v4m1 -40v2m0 4v8m0 26v6m1 -40v8m0 34v4m1 -42v4m0 42v2m1 -52v8m0 48v2m1 -58v8m0 54v2m1 -58v2m0 60v4m1 2v2m1 -72v4m0 70v2m1 -80v8m1 -8v8m0 78v4m1 -90v8m1 -8v8m1 -8v8m1 -8v8m1 -8v8m0 90v2m1 -100v8m1 -8v8m0 92v2m1 -102v8m1 96v2m2 -104v6m1 -14v2m0 4v8m1 -14v2m0 4v8m1 -8v8m1 -14v2m0 4v8m1 -8v8m1 -8v8m1 -4v4m2 108v2m1 -4v2m2 -2v4m0 2v2m1 -128v2m0 124v2m1 -2v2m3 0v2m1 -6v2m1 4v2m2 -132v2m0 6v6m1 -16v4m0 4v8m0 112v2m1 -122v8m1 -8v8m1 -8v8m1 -8v8m1 -8v8m0 114v2m1 -124v8m0 114v2m1 -124v8m1 -6v6m1 -6v6m1 -6v6m1 -6v6m0 112v2m1 -122v8m1 -8v8m1 -8v8m1 -8v8m0 112v2m0 2v2m1 -126v8m0 108v2m1 -118v8m0 114v2m1 -132v4m0 4v8m1 -16v4m0 4v8m0 106v2m0 4v2m1 -128v2m0 4v8m0 106v2m1 -116v8m1 -16v4m0 4v8m0 106v4m1 -130v8m0 4v8m1 -20v8m0 4v6m1 -12v2m0 4v8m1 -8v8m1 -8v8m1 -6v6m1 -4v4m0 100v2m1 -110v8m0 96v2m1 -106v8m1 -8v8m0 90v2m1 -100v8m1 -8v8m1 -2v2m1 -8v8m1 -14v2m0 4v8m1 -8v8m1 -2v2m0 64v2m1 -6v2m1 -70v8m0 54v2m1 -70v2m0 4v8m0 48v2m1 -64v2m0 4v8m0 42v4m1 -60v2m0 4v8m0 38v2m1 -54v2m0 4v8m0 34v2m1 -44v8m0 30v2m1 -38v6m0 26v4m1 -34v4m0 24v2m1 -34v8m0 18v4m1 -30v4m0 18v4m1 -32v2m0 4v2m0 18v2m1 -30v4m0 18v4m1 -26v4m0 16v2m1 -8v4m0 2v6m1 -12v4m0 2v16m1 -22v4m0 2v18m1 -26v6m0 2v12m1 -22v8m0 2v6m1 -18v10m0 2v6m1 -18v10m0 2v10m1 -18v6m0 2v16m1 -26v8m0 2v14m1 -24v8m0 2v14m1 -26v10m0 2v12m1 -24v10m0 2v12m1 -30v2m0 4v10m0 2v2m0 72v2m1 -96v4m0 4v10m0 2v2m0 74v4m1 -98v2m0 4v10m0 2v2m1 -20v2m0 4v10m0 2v2m0 76v2m1 -100v4m0 4v10m0 2v2m0 78v4m1 -102v2m0 4v10m0 2v2m0 84v2m0 14v2m1 -116v10m0 2v6m0 100v4m1 -122v10m0 2v10m1 -22v10m0 2v6m0 110v2m1 -130v10m0 2v10m0 98v2m1 -122v10m0 2v8m0 108v2m1 -130v10m0 2v12m1 -30v2m0 4v10m0 2v2m1 -22v4m0 4v10m0 2v2" stroke="#00ff8a"/><path d="M220.5 225v16m0 12v2m1 -26v10m0 4v4m0 6v2m1 -24v8m0 4v6m0 4v2m1 -26v12m0 2v4m0 6v2m1 -28v14m0 2v2m0 8v2m1 -28v14m0 2v2m0 8v2m1 -26v12m0 12v2m1 -26v8m0 2v2m0 12v2m1 -24v10m0 12v2m1 -22v4m0 2v2m0 12v2m1 -36v6m0 10v2m0 2v2m0 12v2m1 -36v6m0 14v2m0 12v2m1 -32v4m0 12v2m0 12v2m1 -34v8m0 24v2m1 -38v16m0 20v2m1 -36v14m0 14v4m0 2v2m1 -24v4m0 22v4m0 2v2m1 -36v8m0 30v2m0 2v2m0 4v6m0 2v8m1 -68v14m0 44v2m0 16v2m0 2v4m0 8v2m1 -100v18m0 2v2m0 2v6m1 -30v18m0 2v2m0 14v2m0 2v2m0 8v2m1 -56v18m0 6v2m0 12v2m0 16v4m0 2v4m0 4v4m0 34v2m0 12v4m0 18v2m0 4v10m1 -158v18m0 4v2m0 12v2m0 32v8m0 2v2m1 -76v18m0 12v2m0 28v2m0 2v8m1 -68v14m0 2v2m0 8v2m0 30v2m0 2v2m0 2v2m1 -66v12m0 2v4m0 6v4m0 24v2m0 4v6m0 2v2m1 -72v16m0 12v2m0 26v14m1 -72v18m0 12v2m0 28v8m0 2v2m1 -72v18m0 12v2m0 28v6m0 2v2m1 -68v16m0 12v2m0 30v12m1 -72v16m0 12v2m0 26v2m0 2v4m0 2v6m1 -74v18m0 12v2m0 20v2m0 4v2m0 2v12m1 -76v20m0 12v2m0 24v2m0 2v8m0 2v4m1 -74v18m0 12v2m0 28v10m1 -70v18m0 12v2m0 30v8m0 4v2m1 -74v16m0 12v2m0 14v2m0 10v2m0 4v2m0 2v6m1 -68v12m0 2v4m0 2v2m0 2v2m0 22v8m0 2v8m1 -66v10m0 12v2m0 4v6m0 2v4m0 2v2m0 4v2m0 6v2m1 -56v8m0 18v8m0 2v2m0 4v4m1 -50v14m0 2v4m0 6v2m0 26v8m0 2v2m1 -68v16m0 12v4m0 28v14m1 -78v20m0 12v2m0 24v2m0 4v2m0 2v8m1 -74v18m0 12v2m0 22v2m0 2v2m0 2v6m0 2v2m1 -70v16m0 8v2m0 2v2m0 26v2m0 2v6m0 2v2m1 -66v12m0 2v4m0 6v2m0 24v20m1 -68v8m0 4v8m0 2v4m0 20v2m0 4v2m0 2v6m0 2v2m1 -64v6m0 4v10m0 2v2m0 24v8m0 4v2m1 -68v14m0 2v2m0 8v2m0 28v8m1 -68v18m0 12v2m0 28v10m1 -68v16m0 12v2m0 26v10m0 2v6m1 -70v12m0 2v4m0 6v2m0 26v10m0 2v4m1 -72v16m0 12v2m0 22v2m0 2v10m0 2v2m1 -78v18m0 4v2m0 12v2m0 26v2m0 2v2m0 8v4m1 -82v16m0 6v2m0 12v2m0 30v4m0 6v2m1 -74v18m0 12v2m0 32v8m1 -70v16m0 12v2m0 26v2m0 4v4m0 2v6m1 -68v8m0 4v8m0 2v4m0 24v2m0 2v6m1 -58v6m0 4v8m0 4v2m0 20v6m0 2v6m0 2v2m1 -64v8m0 4v8m0 2v4m0 20v2m0 2v6m0 2v4m0 2v2m1 -72v16m0 12v2m0 16v4m0 8v12m1 -70v16m0 12v2m0 30v10m1 -70v16m0 12v2m0 26v8m0 2v2m1 -70v18m0 12v2m0 26v4m0 2v8m1 -74v20m0 12v2m0 30v6m1 -68v18m0 12v2m0 22v2m0 4v8m0 2v2m1 -66v12m0 2v2m0 8v2m0 24v2m0 4v8m1 -66v14m0 2v2m0 8v2m0 22v2m0 2v12m0 2v4m1 -80v18m0 2v2m0 12v2m0 26v14m1 -80v18m0 6v2m0 12v2m0 26v4m0 2v8m1 -82v18m0 8v2m0 12v2m0 22v2m0 6v10m0 2v2m1 -76v18m0 12v2m0 22v2m0 4v8m0 2v2m1 -66v12m0 2v4m0 6v2m0 26v14m1 -62v6m0 4v10m0 2v2m0 26v12m0 2v2m1 -76v18m0 12v2m0 26v2m0 2v2m0 2v2m0 2v2m1 -80v18m0 6v2m0 40v12m0 2v2m1 -78v16m0 4v2m0 12v2m0 28v2m0 2v4m0 2v2m1 -72v18m0 12v2m0 18v2m0 8v2m0 2v4m0 6v2m1 -76v18m0 12v2m0 24v12m0 2v4m1 -76v16m0 2v2m0 12v2m0 22v6m0 2v10m1 -68v14m0 12v2m0 28v4m0 2v6m1 -64v8m0 4v6m0 4v2m0 28v2m0 2v8m1 -62v6m0 4v8m0 2v4m0 18v2m0 6v12m0 2v2m1 -70v12m0 2v4m0 6v2m0 24v4m0 2v6m0 2v2m1 -64v8m0 4v6m0 4v2m0 30v10m1 -64v8m0 4v8m0 2v4m0 32v2m0 4v2m1 -68v12m0 2v2m0 8v2m0 24v2m0 2v2m0 4v8m1 -74v18m0 12v2m0 28v6m0 2v2m1 -74v18m0 2v2m0 12v2m0 30v8m0 2v2m1 -78v16m0 4v2m0 12v2m0 28v12m1 -72v18m0 12v2m0 32v4m0 2v2m1 -70v16m0 12v2m0 28v12m1 -70v16m0 12v2m0 28v10m0 2v2m1 -76v16m0 2v2m0 12v2m0 26v6m0 4v4m1 -76v18m0 2v2m0 12v2m0 28v6m0 2v4m2 -72v18m0 12v2m0 28v10m0 4v2m1 -76v18m0 12v2m0 28v14m1 -74v18m0 12v2m0 32v8m1 -70v16m0 12v2m0 24v2m0 2v12m1 -66v12m0 2v4m0 6v4m0 28v6m0 2v2m1 -66v12m0 2v2m0 8v2m0 26v8m0 2v2m1 -72v20m0 12v2m0 24v2m0 4v10m1 -76v18m0 2v2m0 12v2m0 28v10m0 2v2m1 -74v18m0 12v2m0 28v10m1 -64v12m0 2v4m0 6v2m0 28v6m0 2v2m0 2v2m1 -70v14m0 12v2m0 22v2m0 6v8m1 -64v12m0 2v4m0 6v2m0 30v8m1 -66v14m0 2v2m0 8v2m0 24v2m0 4v4m0 2v4m1 -68v14m0 2v2m0 8v2m0 24v16m1 -72v18m0 12v2m0 24v6m0 2v2m0 4v2m1 -70v16m0 12v2m0 28v14m1 -72v16m0 12v2m0 22v2m0 4v12m1 -70v16m0 12v2m0 26v16m1 -78v18m0 2v2m0 12v2m0 30v6m0 2v4m1 -78v2m0 4v16m0 2v2m0 4v2m0 4v2m0 20v4m0 10v8m1 -62v2m0 16v4m0 12v6m0 6v4m0 2v2m0 4v2m1 -60v2m0 6v8m0 2v2m0 2v2m0 4v4m0 8v2m0 18v2m0 20v8m0 2v2m0 2v2m0 14v10m0 4v6m1 -134v6m0 2v4m0 6v2m0 44v2m1 -66v6m0 12v2m1 -20v6m0 12v2m1 -22v6m0 4v6m0 4v2m1 -24v10m0 2v2m0 8v2m1 -26v8m0 2v2m0 12v2m1 -30v6m0 8v2m1 -34v2m0 14v6m1 -6v10m0 6v2m0 12v2m1 -34v10m0 8v2m1 -38v6m0 8v10m1 -10v12m0 10v2m1 -22v18m0 2v2m0 12v2m1 -34v20m0 12v2m1 -36v18m0 2v2m0 12v2m1 -36v16m0 4v2m0 12v2m1 -32v18m0 12v2m1 -26v12m0 2v4m0 6v2m1 -18v2m0 4v10m0 2v2m1 -20v2m0 4v10m0 2v2m1 -24v6m0 4v10m0 2v2m1 -26v8m0 4v8m0 2v4m1 -22v4m0 4v10m0 2v2m1 -20v2m0 4v10m0 2v2m1 -20v2m0 4v10m0 2v2m1 -28v10m0 4v4m0 6v2m1 -34v16m0 2v2m0 12v2m1 -36v16m0 4v2m0 12v2m1 -32v18m0 12v2m1 -30v16m0 12v2m1 -34v16m0 2v2m0 12v2m1 -38v18m0 4v2m0 12v2m1 -34v16m0 2v2m0 12v2m0 6v6m0 2v2m0 16v2m1 -62v14m0 12v2m0 42v2m0 4v2m0 6v2m0 2v2m0 4v2m0 4v6m0 2v2m0 12v2m0 4v2m0 6v2m1 -138v14m0 12v2m1 -32v18m0 12v2m1 -32v18m0 12v2m1 -28v14m0 2v2m0 8v2m1 -24v8m0 4v8m0 2v4m1 -24v6m0 4v8m0 4v2m1 -32v16m0 12v2m1 -36v18m0 2v2m0 12v2m1 -36v16m0 4v2m0 12v2m1 -32v18m0 12v2m1 -30v16m0 12v2m1 -28v14m0 12v2m1 -30v16m0 12v2m1 -30v16m0 12v2m1 -30v16m0 12v2m1 -28v14m0 12v2m1 -28v14m0 12v2m1 -24v10m0 12v2m1 -22v4m0 2v2m0 12v2m1 -20v6m0 12v2m1 -18v4m0 12v2m1 -12v2m0 8v2m1 -12v6m0 4v2m1 -12v2m0 8v2m1 -30v8m0 20v2m54 -28v2m0 12v4m0 10v2m1 -54v2m0 8v2m0 6v2m0 4v6m0 2v10m0 4v2m0 2v2m0 4v2m1 -52v2m0 26v2m0 4v8m0 2v2m0 16v2m1 -46v2m0 2v2m0 14v2m0 8v2m0 12v2m1 -58v2m0 4v2m0 4v2m0 8v4m0 2v2m0 12v4m0 4v2m1 -64v2m0 4v2m0 26v2m0 2v2m0 8v2m0 2v2m0 2v2m0 4v2m1 -20v2m6 -32v2m0 10v6m0 2v2m0 8v8m0 2v4m0 2v2m1 -58v2m0 4v2m0 2v4m0 6v2m0 6v6m0 10v4m1 -46v2m0 10v4m0 6v2m0 4v2m0 14v2m0 2v8m1 -24v2m0 12v4m0 4v2m1 -18v2m1 -46v4m0 12v4m0 2v2m0 10v2m0 18v2m1 -34v4m0 2v2m0 4v2m0 10v2m0 2v2m0 2v2m1 -52v6m0 20v2m0 10v2m0 2v2m0 2v2m1 -52v4m0 38v2m0 10v2m0 6v2m0 2v2m1 -66v2m0 26v4m0 2v4m0 12v4m1 -22v2m1 -24v2m0 14v4m0 4v4m0 2v2m0 6v4m0 14v2m1 -58v4m0 18v2m0 4v2m0 4v2m0 12v2m1 -58v2m0 22v4m0 14v2m0 12v2m1 -58v2m0 8v2m0 12v2m0 2v2m0 4v2m1 -30v2m0 10v4m0 16v2m1 -10v2m0 20v2m1 -42v2m0 10v2m0 8v2m0 2v2m0 2v2m0 4v2m0 6v2m1 -50v2m0 4v2m0 6v2m0 2v2m0 8v4m0 2v2m0 6v2m0 4v4m1 -64v4m0 8v2m0 2v2m0 12v2m0 8v2m0 2v2m0 12v2m0 2v2m1 -58v4m0 2v2m0 6v2m0 6v4m0 10v2m0 6v2m0 6v6m1 -64v2m0 2v2m0 4v2m0 6v2m0 4v2m0 2v2m0 6v4m0 6v2m0 22v2m1 -54v2m0 12v2m0 22v2m3 -30v8m0 4v8m1 -22v12m0 2v6m1 -22v14m0 2v4m1 -20v14m0 2v2m1 -18v12m0 16v2m1 -34v16m0 12v2m1 -34v20m0 14v2m1 -34v16m0 10v2m0 4v2m1 -32v12m0 10v2m0 6v2m1 -30v8m0 10v2m0 8v2m1 -34v12m0 20v2m1 -28v4m0 22v2m1 -32v8m0 8v2m0 12v2m1 -32v6m0 8v4m0 12v2m1 -38v12m0 10v2m0 12v2m1 -38v10m0 8v2m0 2v2m0 12v2m1 -34v4m0 10v6m0 12v2m1 -22v8m0 12v2m1 -22v8m0 12v2m1 -24v10m0 12v2m1 -24v10m0 12v2m1 -26v2m0 8v2m1 -14v6m0 6v2m0 12v2m1 -28v8m0 4v2m0 12v2m1 -28v14m0 12v2m1 -30v8m0 6v2m0 12v2m1 -34v12m0 6v2m0 12v2m1 -34v16m0 2v2m0 12v2m0 80v2m1 -114v18m0 12v2m0 76v2m1 -106v14m0 2v2m0 8v2m0 70v2m1 -102v16m0 12v2m0 66v2m1 -96v14m0 12v2m1 -32v18m0 12v2m1 -32v18m0 12v2m0 56v2m1 -82v8m0 4v6m0 4v2m0 48v6m1 -74v4m0 4v10m0 2v2m0 38v6m0 2v2m1 -72v6m0 4v10m0 2v2m0 34v4m0 2v4m1 -76v16m0 12v2m0 32v6m1 -68v16m0 12v2m0 32v2m1 -60v12m0 2v4m0 6v2m0 22v2m0 4v2m1 -58v14m0 12v2m0 18v4m1 -60v18m0 4v2m0 12v2m0 14v2m0 2v4m1 -58v18m0 2v2m0 12v2m0 10v2m0 4v4m1 -46v12m0 2v2m0 8v2m0 16v2m1 -42v8m0 4v6m0 4v2m0 8v2m0 10v2m0 2v4m0 2v12m0 2v2m0 2v2m0 2v2m0 12v2m0 26v2m0 12v2m1 -138v14m0 12v2m0 8v2m0 32v4m0 8v6m0 2v2m0 2v2m0 4v2m0 4v2m0 4v2m0 2v4m0 2v6m0 2v2m0 6v2m1 -138v12m0 2v4m0 6v2m0 8v2m0 30v2m0 6v2m0 4v2m0 18v2m0 10v2m0 22v2m0 2v2m1 -140v8m0 4v6m0 4v2m0 8v2m0 26v2m0 28v2m0 10v2m0 4v2m0 2v4m0 4v4m0 4v2m0 2v2m0 4v2m1 -142v12m0 2v2m0 8v2m0 8v2m0 24v6m0 6v2m0 2v6m0 22v2m0 12v2m0 4v4m0 2v6m0 2v2m1 -138v8m0 4v6m0 4v2m0 8v4m0 4v8m0 2v4m0 2v4m0 2v4m0 6v2m0 6v2m0 18v2m0 16v2m1 -120v8m0 4v6m0 4v2m0 14v4m1 -46v14m0 2v2m0 8v2m1 -36v18m0 2v2m0 12v2m1 -36v18m0 2v2m0 12v2m1 -34v16m0 2v2m0 12v2m1 -34v20m0 12v2m1 -32v18m0 12v2m1 -34v12m0 6v2m0 12v2m1 -50v2m0 16v6m1 -4v8m0 6v2m1 -12v12m0 12v2m1 -24v10m0 12v2m1 -24v10m0 12v2m1 -22v8m0 12v2m1 -20v6m0 12v2m1 -18v4m0 12v2m1 -18v4m0 12v2m1 -12v2m0 8v2m1 -12v4m0 6v2m1 -30v2m0 16v2m0 8v2m1 -30v4m0 24v2m1 -34v10m0 16v2m0 4v2m1 -36v14m0 20v2m1 -34v12m1 -10v12m1 -12v14m0 20v2m1 -40v16m0 4v2m0 2v2m1 -26v18m0 2v2m0 4v2m0 14v4m1 -46v18m0 2v2m0 26v2m1 -50v16m0 4v2m1 -20v16m0 2v2m0 10v2m1 -30v18m0 10v2m0 30v2m1 -56v12m0 2v4m0 4v2m0 38v2m1 -68v16m0 10v2m0 44v2m1 -74v16m0 10v2m0 50v2m1 -74v8m0 4v6m0 2v2m1 -18v4m0 4v10m0 62v2m1 -88v12m0 2v4m0 4v2m1 -30v18m0 10v2m1 -30v18m0 10v2m0 72v2m1 -102v16m0 10v2m0 82v2m1 -114v18m0 10v2m1 -32v20m0 10v2m1 -30v18m0 10v2m1 -30v18m0 10v2m1 -32v20m0 10v2m1 -32v20m0 10v2m1 -30v18m0 10v2m1 -22v8m0 4v10m0 92v2m1 -116v8m0 4v10m0 94v2m1 -122v14m0 2v2m0 6v2m0 96v2m1 -132v18m0 2v2m0 10v2m0 98v2m1 -132v16m0 2v2m0 10v2m1 -32v20m0 10v2m1 -34v18m0 2v2m0 10v2m1 -32v20m0 10v2m0 102v2m1 -134v18m0 10v2m1 -24v12m0 2v4m0 4v2m1 -20v6m0 4v8m0 104v2m1 -108v2m0 104v2m2 4v2m1 -132v8m0 8v4m1 -30v16m0 6v8m0 106v2m1 -134v14m0 10v2m1 -22v10m0 126v2m1 -136v8m0 120v2m0 2v2m1 -132v6m0 128v2m1 -136v6m1 -10v10m0 6v6m0 110v2m1 -138v14m0 4v8m1 -30v16m0 2v2m0 2v2m0 6v2m1 -36v18m0 4v2m0 10v2m1 -30v18m0 10v2m1 -28v16m0 10v2m1 -28v16m0 10v2m1 -28v16m0 10v2m1 -28v16m0 10v2m1 -32v20m0 10v2m1 -26v14m0 10v2m1 -24v12m0 2v2m0 6v2m1 -24v12m0 2v2m0 6v2m1 -26v14m0 2v2m0 6v2m0 110v2m1 -138v14m0 2v2m0 6v2m1 -28v16m0 10v2m1 -28v16m0 10v2m0 108v2m0 4v2m1 -144v16m0 10v2m0 112v2m1 -142v16m0 10v2m1 -30v18m0 10v2m1 -30v18m0 10v2m1 -36v18m0 4v2m0 10v2m0 104v2m0 4v2m1 -146v16m0 4v2m0 10v2m0 106v2m1 -140v16m0 2v2m0 10v2m0 106v4m1 -142v20m0 10v2m0 102v2m1 -140v18m0 4v2m0 10v2m1 -38v16m0 8v2m0 10v2m0 104v2m1 -146v18m0 8v2m0 10v2m1 -34v18m0 2v2m0 10v2m0 102v2m1 -136v20m0 10v2m1 -26v14m0 10v2m1 -26v14m0 2v2m0 6v2m1 -24v12m0 2v4m0 4v2m1 -30v18m0 10v2m1 -28v16m0 10v2m1 -30v18m0 10v2m1 -28v16m0 10v2m1 -26v14m0 10v2m0 82v2m1 -106v8m0 4v6m0 2v2m0 80v2m1 -110v16m0 10v2m0 76v2m1 -110v16m0 2v2m0 10v2m0 72v2m1 -102v16m0 10v2m0 66v2m1 -90v8m0 4v6m0 2v2m1 -20v6m0 4v10m0 56v2m1 -84v14m0 10v2m0 50v2m1 -86v18m0 2v2m0 10v2m1 -34v18m0 2v2m0 10v2m1 -34v18m0 2v2m0 10v2m0 34v2m1 -70v18m0 2v2m0 10v2m0 30v2m1 -60v16m0 10v2m0 26v2m1 -54v14m0 2v2m0 6v2m0 22v2m1 -48v12m0 2v4m0 4v2m0 20v2m1 -52v18m0 26v2m1 -46v18m0 6v4m0 12v2m1 -46v18m0 2v2m0 4v2m0 12v4m1 -44v16m0 4v2m1 -24v18m0 4v2m1 -18v16m0 8v2m0 4v2m1 -26v6m0 12v2m0 4v2m1 -8v2m0 4v2m1 -30v4m0 24v2m1 -32v6m0 24v2m1 -34v4m0 28v2m1 -2v2m1 -18v2m0 4v4m0 6v2m1 -20v6m0 2v2m0 8v2m1 -22v8m0 2v2m0 8v2m1 -24v10m0 12v2m1 -26v12m0 12v2m1 -30v12m0 2v2m0 12v2m1 -30v10m0 4v2m0 12v2m1 -32v14m0 2v2m0 12v2m0 84v2m1 -118v14m0 2v2m0 12v2m0 76v2m0 10v2m1 -124v14m0 4v2m0 12v2m0 84v2m0 2v2m0 2v2m1 -128v16m0 2v2m0 12v2m0 100v2m1 -134v18m0 12v2m1 -30v16m0 12v2m0 108v2m0 2v2m1 -146v18m0 12v2m0 110v2m1 -142v16m0 12v2m0 114v2m1 -148v18m0 12v2m1 -28v14m0 12v2m1 -36v18m0 2v2m0 12v2m1 -36v16m0 4v2m0 12v2" stroke="#00ff79"/><path d="M220.5 203v6m0 8v8m1 -6v10m0 10v2m1 -20v10m0 8v2m1 -34v2m0 14v6m1 -26v6m0 16v2m1 -24v6m0 4v2m0 10v2m1 -24v6m0 4v6m0 8v2m1 -26v6m0 4v8m1 -18v6m0 4v8m0 8v2m1 -28v6m0 4v12m0 6v2m1 -30v6m0 4v6m0 14v2m1 -32v6m0 4v6m0 6v2m0 8v2m1 -34v6m0 4v10m0 4v2m0 8v2m1 -36v6m0 4v8m0 8v2m0 8v2m1 -38v6m0 4v4m1 -14v6m0 4v6m0 14v2m0 10v2m1 -34v18m0 4v2m0 14v2m0 2v2m1 -50v2m0 4v16m0 8v2m0 24v2m0 8v4m1 -74v6m0 4v12m0 18v2m0 24v4m0 2v2m0 26v2m0 6v6m1 -114v6m0 4v6m0 30v4m1 -50v6m0 4v6m0 34v2m0 2v2m0 18v2m0 2v2m0 38v2m1 -120v6m0 4v2m0 66v2m0 6v8m0 2v2m0 2v2m0 6v2m0 4v2m0 2v2m0 2v12m0 4v18m0 2v4m1 -162v6m0 4v4m0 78v2m0 2v12m0 2v2m0 58v2m1 -172v6m0 4v10m0 72v10m1 -102v6m0 4v14m0 64v2m0 2v8m1 -98v4m0 4v16m0 64v2m0 2v4m1 -98v6m0 4v12m0 70v8m1 -100v6m0 4v10m0 68v2m0 2v8m1 -100v6m0 4v10m0 70v12m0 2v2m1 -106v6m0 4v12m0 72v4m0 2v2m1 -102v6m0 4v12m0 64v2m0 6v8m1 -102v6m0 4v10m0 74v2m0 4v2m1 -102v6m0 4v8m0 70v2m0 4v8m1 -102v6m0 4v10m0 70v10m1 -100v6m0 4v10m0 70v4m0 2v4m1 -100v6m0 4v12m0 64v2m0 6v4m1 -96v4m0 4v16m0 66v8m0 2v2m1 -102v4m0 4v16m0 10v2m0 2v8m0 2v4m0 6v2m0 4v2m0 2v4m0 2v4m0 6v2m1 -78v18m0 8v2m0 4v8m0 2v2m0 8v2m0 2v4m0 4v4m0 2v6m1 -86v6m0 4v14m0 66v10m1 -100v6m0 4v12m0 74v6m1 -102v6m0 4v8m0 66v2m0 8v6m1 -100v6m0 4v10m0 68v2m0 2v6m1 -98v6m0 4v12m0 66v2m0 2v4m0 2v2m1 -98v4m0 4v16m0 72v2m1 -90v18m0 8v2m0 52v2m0 2v6m1 -88v18m0 6v2m0 12v2m0 34v4m0 2v10m1 -102v6m0 4v14m0 64v12m1 -100v6m0 4v10m0 70v8m1 -98v6m0 4v12m0 66v2m0 6v6m1 -100v4m0 4v16m0 62v2m0 4v4m1 -98v6m0 4v12m0 66v2m0 4v6m1 -100v6m0 4v4m0 72v6m0 6v2m1 -100v6m0 4v4m0 72v6m0 2v6m1 -100v6m0 4v10m0 72v8m1 -100v6m0 4v12m0 66v2m0 6v2m1 -86v16m0 8v2m0 50v10m1 -86v18m0 6v2m0 12v2m0 36v2m0 2v6m1 -86v16m0 8v2m0 52v2m0 2v2m0 2v6m1 -104v6m0 4v12m0 70v8m1 -100v6m0 4v12m0 70v2m0 2v2m1 -98v6m0 4v12m0 64v2m0 2v8m0 4v2m1 -104v6m0 4v10m0 72v4m1 -96v6m0 4v8m0 70v14m1 -102v6m0 4v10m0 68v2m0 2v8m1 -100v6m0 4v16m0 64v8m1 -98v6m0 4v14m0 66v2m0 4v2m0 6v2m1 -106v6m0 4v6m0 76v6m0 2v2m1 -102v6m0 4v2m0 80v6m0 2v2m1 -102v6m0 32v2m0 52v2m0 2v4m1 -100v6m0 4v10m0 68v2m0 2v8m1 -98v4m0 4v16m0 66v8m1 -88v18m0 6v2m0 12v2m0 40v2m0 2v2m0 4v2m1 -104v6m0 4v10m0 64v2m0 2v2m0 2v6m1 -98v6m0 4v2m0 78v2m0 2v2m0 2v2m0 2v2m1 -104v6m0 4v6m0 72v2m0 2v8m1 -100v6m0 4v10m0 68v6m0 2v2m1 -98v6m0 4v10m0 68v2m0 4v4m0 2v2m1 -102v6m0 4v8m0 74v6m0 4v2m1 -104v6m0 4v14m0 68v4m0 2v4m1 -92v18m0 8v2m0 54v8m1 -88v18m0 6v2m0 54v2m0 4v4m1 -98v2m0 4v16m0 62v2m0 2v6m1 -88v18m0 8v2m0 54v8m1 -88v16m0 8v2m0 50v4m0 2v4m0 2v2m1 -102v6m0 4v16m0 68v6m1 -100v6m0 4v10m0 66v2m0 2v12m1 -102v6m0 4v6m0 74v2m0 2v6m1 -100v6m0 4v6m0 76v6m1 -98v6m0 4v10m0 68v2m0 2v8m0 2v2m1 -104v6m0 4v12m0 70v6m0 4v2m1 -104v6m0 4v12m0 68v2m0 2v4m1 -98v6m0 4v8m0 66v4m0 4v6m0 4v2m1 -104v6m0 4v6m0 76v6m2 -98v6m0 4v10m0 70v4m0 2v4m1 -100v6m0 4v10m0 74v6m1 -100v6m0 4v10m0 72v8m0 2v2m1 -104v6m0 4v12m0 70v4m0 2v2m1 -98v4m0 4v16m0 62v2m0 2v6m1 -98v6m0 4v16m0 60v2m0 2v10m1 -100v6m0 4v8m0 74v12m1 -104v6m0 4v6m0 74v2m0 2v4m1 -98v6m0 4v10m0 70v8m1 -94v2m0 4v16m0 64v2m0 2v6m1 -100v6m0 4v14m0 66v8m1 -88v16m0 54v2m0 8v10m1 -100v6m0 4v14m0 62v2m0 4v10m1 -102v6m0 4v14m0 68v8m1 -100v6m0 4v10m0 66v4m0 2v8m0 2v2m1 -104v6m0 4v12m0 72v4m1 -98v6m0 4v12m0 70v8m1 -100v6m0 4v12m0 72v10m1 -104v6m0 4v6m0 78v10m1 -104v6m0 4v6m0 2v4m0 28v2m1 -32v2m0 14v2m0 2v10m0 6v8m0 2v2m0 8v4m0 4v2m0 8v2m0 34v2m0 20v2m0 16v2m1 -152v4m0 8v2m0 2v2m0 2v2m0 8v2m0 56v2m0 2v4m1 -106v16m1 -26v6m0 4v12m1 -22v6m0 4v8m0 12v2m1 -22v6m0 12v2m0 6v2m1 -36v4m0 4v4m0 12v2m1 -28v6m0 4v4m0 10v2m1 -26v6m0 4v2m0 8v2m0 16v2m1 -40v4m0 6v2m0 26v2m1 -40v6m0 12v2m1 -20v6m0 10v2m0 20v2m1 -2v2m1 -40v6m0 32v2m1 -40v4m0 8v4m1 -16v4m0 6v8m1 -18v2m0 8v6m1 -6v6m1 -6v10m1 -10v16m1 -10v18m0 2v2m0 12v2m1 -36v18m0 2v2m0 12v2m1 -38v16m0 6v2m0 12v2m1 -42v18m0 8v2m1 -24v18m0 4v2m0 12v2m1 -36v18m0 2v2m0 12v2m1 -36v18m0 2v2m0 12v2m1 -42v16m0 10v2m1 -38v6m0 4v8m1 -18v6m0 4v6m1 -16v6m0 4v10m1 -20v6m0 4v12m1 -22v6m0 4v8m1 -18v6m0 4v4m1 -12v4m0 4v8m1 -14v2m0 4v14m0 34v2m0 2v2m0 8v6m0 2v2m0 2v8m0 4v4m0 2v2m0 6v2m0 4v2m0 2v4m0 10v2m0 14v2m1 -142v14m1 -14v10m1 -10v10m1 -10v14m1 -12v16m0 8v2m1 -24v16m0 6v2m0 12v2m1 -52v4m0 10v8m1 -22v6m0 8v2m1 -16v6m0 8v2m1 -16v6m0 10v4m1 -20v6m0 12v4m1 -22v6m0 12v6m1 -24v6m0 4v2m0 8v2m1 -22v6m0 4v4m0 6v2m1 -22v6m0 4v4m1 -14v6m0 4v4m0 8v2m1 -24v6m0 4v6m1 -16v6m0 4v8m0 8v2m1 -28v6m0 4v8m0 10v2m1 -30v6m0 4v10m0 10v2m1 -32v6m0 4v10m0 12v2m1 -34v6m0 4v14m1 -14v16m1 -26v6m0 4v20m1 -30v6m0 4v12m0 8v2m54 -32v6m0 4v4m0 2v2m0 4v2m0 2v6m0 2v2m0 6v6m0 2v2m0 2v6m0 2v6m1 -66v8m0 2v2m0 2v2m0 4v2m0 6v2m0 26v4m0 2v2m0 4v2m1 -72v6m0 2v2m0 2v2m0 2v6m0 4v4m0 6v2m0 20v2m0 2v2m0 2v2m1 -66v6m0 6v4m0 4v2m0 16v4m0 4v6m0 6v4m0 2v2m1 -68v4m0 2v2m0 8v2m0 2v4m0 4v4m0 6v2m0 2v8m0 2v2m0 6v2m0 4v2m1 -66v2m0 8v4m0 2v12m0 2v2m0 10v4m0 6v2m0 4v2m0 6v2m1 -24v2m0 4v4m0 4v2m0 8v2m6 -72v2m0 6v2m0 2v2m0 6v2m0 14v8m0 8v2m0 12v2m1 -68v2m0 10v2m0 4v2m0 2v2m0 2v2m0 10v10m0 4v8m0 2v4m1 -64v4m0 2v6m0 2v2m0 6v4m0 2v2m0 4v2m0 6v4m0 4v2m0 12v2m0 8v2m1 -34v4m0 14v2m0 4v2m1 -8v2m1 -60v12m0 8v4m0 8v6m0 4v4m0 2v2m0 2v2m0 2v4m1 -62v4m0 6v2m0 2v2m0 2v2m0 4v2m0 2v4m0 2v10m0 2v2m0 2v2m0 4v4m0 6v6m1 -74v2m0 16v2m0 2v2m0 8v6m0 10v2m0 2v4m0 4v6m0 2v2m0 2v2m1 -68v2m0 2v6m0 2v4m0 4v10m0 2v2m0 6v2m0 2v4m0 2v2m0 2v2m0 8v2m0 6v2m1 -80v2m0 2v10m0 4v2m0 2v2m0 4v2m0 4v2m0 6v6m0 2v2m0 4v6m0 2v4m0 8v6m1 -80v2m0 10v2m0 2v10m0 8v2m0 2v2m0 4v2m0 4v8m0 2v6m1 -64v2m0 2v4m0 2v14m0 4v2m0 10v2m0 8v4m0 6v4m0 2v2m1 -70v4m0 2v4m0 6v2m0 2v2m0 2v4m0 6v2m0 4v4m0 2v4m0 2v2m0 8v2m1 -66v2m0 6v6m0 4v4m0 12v4m0 2v2m0 2v2m0 2v2m0 2v2m0 2v2m0 10v4m1 -70v2m0 14v4m0 2v4m0 2v2m0 2v4m0 6v20m0 10v2m1 -76v6m0 2v2m0 4v8m0 4v6m0 4v6m0 6v2m0 2v6m0 2v4m0 2v2m1 -64v2m0 2v4m0 4v2m0 6v4m0 4v2m0 6v16m0 2v10m1 -62v8m0 4v10m0 2v2m0 2v4m0 6v2m0 2v4m0 2v2m0 6v2m0 4v2m0 2v2m1 -74v2m0 2v4m0 14v2m0 12v4m0 4v2m0 2v2m0 6v4m0 4v2m0 4v2m1 -68v6m0 4v2m0 2v10m0 4v6m0 8v2m0 2v8m1 -54v2m0 16v2m0 8v2m0 2v2m0 2v2m0 2v4m0 8v2m1 -42v2m0 2v2m0 8v2m0 2v2m0 4v2m0 6v2m0 2v4m0 2v4m0 4v2m0 6v2m1 -76v2m0 2v2m0 2v2m0 6v2m0 2v8m0 2v2m0 4v14m0 2v2m0 4v2m0 6v2m3 -58v18m0 8v2m0 10v2m1 -46v2m0 4v16m0 20v2m1 -48v6m0 4v14m0 20v2m1 -46v6m0 4v14m0 18v2m1 -44v6m0 4v14m0 12v2m1 -38v6m0 4v10m0 16v2m0 12v2m1 -52v6m0 4v6m0 28v4m1 -48v6m0 4v8m1 -18v6m0 4v10m0 12v2m1 -34v6m0 4v12m0 8v2m1 -32v6m0 4v8m0 12v2m1 -32v6m0 4v14m0 4v2m0 6v2m1 -38v6m0 4v10m0 14v2m1 -36v6m0 4v10m0 6v2m1 -28v6m0 4v4m0 18v2m1 -34v6m0 4v4m1 -14v6m0 4v8m0 4v2m0 6v2m1 -32v6m0 4v14m1 -24v6m0 4v12m0 6v2m1 -30v6m0 4v10m1 -20v6m0 4v8m0 8v2m1 -28v6m0 4v8m0 6v2m0 12v2m1 -40v6m0 4v4m1 -14v6m0 16v2m1 -24v6m0 16v2m1 -24v4m0 16v2m2 -8v4m1 -6v8m1 -10v14m1 -14v12m1 -18v2m0 4v14m0 90v2m1 -116v6m0 4v10m1 -20v6m0 4v10m1 -10v18m0 8v2m1 -22v16m0 4v2m0 12v2m1 -38v16m0 6v2m0 12v2m1 -52v6m0 4v12m1 -22v6m0 4v12m0 58v4m1 -80v2m0 4v16m0 50v2m1 -78v6m0 4v14m0 50v4m1 -78v6m0 4v4m0 54v2m1 -70v6m0 4v6m0 48v2m1 -64v4m0 4v16m0 36v2m0 2v2m1 -58v18m0 8v2m0 24v10m0 2v2m0 4v2m1 -82v6m0 4v14m0 42v2m0 4v2m0 8v2m0 2v2m0 4v2m0 4v4m0 10v2m0 8v2m0 10v2m0 8v2m0 14v2m1 -160v4m0 4v16m0 40v2m0 18v2m0 6v6m0 4v2m0 4v2m0 2v6m0 4v2m0 2v4m0 4v2m0 2v2m0 2v2m0 4v2m0 18v2m1 -162v18m0 8v2m0 32v2m0 6v2m0 4v2m0 30v2m0 20v2m0 6v2m0 10v2m1 -156v2m0 4v16m0 50v2m0 4v4m0 6v4m0 4v2m0 6v2m0 2v2m0 8v2m0 2v2m0 6v2m0 4v2m0 6v2m0 12v2m1 -154v18m0 8v2m0 26v4m0 8v2m1 -68v18m0 8v2m1 -28v14m1 -14v6m1 -6v6m1 -4v6m1 -6v6m1 -4v6m1 -20v4m0 12v2m1 -18v2m0 2v2m0 32v2m1 -40v6m1 -6v6m1 -6v6m0 4v4m0 12v2m1 -28v6m0 4v4m1 -14v6m0 4v8m0 10v2m1 -30v6m0 4v10m0 10v2m1 -32v6m0 4v10m0 12v2m1 -34v6m0 4v12m1 -22v6m0 4v12m0 14v2m1 -36v4m0 4v14m1 -24v6m0 4v12m0 2v2m1 -26v6m0 4v12m0 4v2m0 14v2m1 -44v6m0 4v8m0 10v2m1 -30v6m0 4v6m0 14v2m0 2v2m1 -36v6m0 4v8m0 12v2m0 18v2m1 -52v6m0 4v10m0 12v2m0 18v2m1 -54v6m0 4v10m0 14v2m1 -36v6m0 4v6m1 -16v6m0 4v6m0 28v2m0 10v2m1 -58v6m0 4v6m0 30v2m1 -48v6m0 4v6m0 32v2m0 18v2m1 -70v6m0 4v8m1 -18v6m0 4v10m0 32v6m1 -54v2m0 4v16m0 26v14m0 18v4m1 -88v6m0 4v12m0 30v18m0 22v2m1 -94v6m0 4v12m0 30v24m0 22v2m1 -90v18m0 8v2m0 14v28m0 26v2m1 -94v18m0 4v2m0 14v32m0 26v2m1 -110v4m0 4v16m0 26v36m1 -88v6m0 4v10m0 32v38m0 30v2m1 -122v6m0 4v10m0 32v38m0 34v2m1 -126v6m0 4v12m0 30v38m0 38v2m1 -130v6m0 4v10m0 32v38m1 -90v6m0 4v8m0 34v38m1 -90v6m0 4v10m0 32v38m0 36v2m1 -128v6m0 4v10m0 32v38m0 40v2m1 -132v6m0 4v8m0 34v38m1 -90v6m0 4v8m0 34v38m1 -90v6m0 4v10m0 32v38m1 -78v16m0 8v2m0 14v38m1 -80v18m0 8v2m0 14v36m0 54v2m1 -144v6m0 4v14m0 28v36m0 56v2m1 -146v6m0 4v6m0 36v34m1 -86v6m0 4v8m0 34v34m0 62v2m1 -150v6m0 4v8m0 34v34m0 64v2m1 -152v6m0 4v6m0 36v32m1 -84v6m0 4v8m0 34v32m0 64v4m1 -152v6m0 4v10m0 32v32m1 -84v6m0 4v16m0 26v30m0 70v4m1 -144v18m0 6v2m0 10v2m0 4v2m0 4v2m0 10v2m0 2v2m0 72v2m1 -130v2m0 12v2m0 2v6m1 -2v4m0 104v2m1 -122v4m0 116v2m1 -144v18m0 8v2m0 2v4m0 4v2m0 108v2m1 -160v6m0 4v8m0 18v2m0 10v2m1 -50v6m0 4v12m0 14v2m0 2v6m0 2v2m0 104v2m1 -146v16m0 10v2m0 2v8m1 -38v18m0 8v2m0 2v8m1 -36v18m0 6v2m0 2v8m0 108v2m1 -146v18m0 6v2m0 2v10m0 112v4m1 -156v16m0 10v2m0 2v2m0 6v2m1 -50v6m0 4v12m0 14v2m0 10v2m0 108v2m1 -160v6m0 4v8m0 36v22m1 -76v6m0 4v4m0 40v24m1 -78v6m0 4v10m0 32v28m0 80v2m1 -162v6m0 4v12m0 30v28m0 80v2m1 -162v6m0 4v12m0 30v28m1 -80v6m0 4v12m0 30v28m1 -80v6m0 4v12m0 30v28m1 -80v6m0 4v8m0 34v28m1 -80v6m0 4v14m0 28v28m1 -78v4m0 4v16m0 26v28m1 -80v6m0 4v16m0 26v28m0 80v2m1 -162v6m0 4v14m0 28v28m1 -80v6m0 4v14m0 28v28m1 -80v6m0 4v12m0 30v28m0 78v2m1 -160v6m0 4v12m0 30v28m1 -80v6m0 4v12m0 30v28m1 -80v6m0 4v12m0 30v28m0 76v2m1 -158v6m0 4v10m0 32v28m0 80v2m1 -162v6m0 4v10m0 32v28m1 -80v6m0 4v4m0 38v28m0 78v2m1 -160v6m0 4v6m0 36v28m0 78v2m1 -160v6m0 4v8m0 34v28m0 72v2m1 -154v6m0 4v8m0 34v28m0 74v2m1 -156v6m0 4v4m0 38v28m0 72v2m1 -154v6m0 4v2m0 26v2m0 12v28m0 72v2m1 -154v6m0 32v2m0 12v28m1 -80v6m0 4v6m0 36v28m0 70v2m1 -152v6m0 4v8m0 34v28m1 -80v6m0 4v14m0 28v28m1 -80v6m0 4v14m0 28v28m1 -76v2m0 4v16m0 26v28m0 64v4m1 -148v6m0 4v10m0 32v28m1 -80v6m0 4v12m0 30v28m0 60v2m1 -142v6m0 4v10m0 32v30m1 -82v6m0 4v12m0 30v30m1 -82v6m0 4v14m0 28v30m1 -72v18m0 8v2m0 14v30m1 -82v6m0 4v12m0 30v30m1 -82v6m0 4v8m0 34v30m0 38v2m1 -122v6m0 4v12m0 30v30m1 -72v18m0 8v2m0 14v30m0 28v2m1 -100v18m0 6v2m0 14v30m1 -82v6m0 4v14m0 28v28m1 -80v6m0 4v6m0 36v24m0 18v2m1 -96v6m0 4v6m0 36v18m0 18v2m1 -90v6m0 4v6m0 36v14m1 -66v6m0 4v6m0 36v12m0 14v2m1 -80v6m0 4v12m0 30v6m1 -58v6m0 4v14m0 28v2m1 -52v4m0 4v16m0 42v2m1 -70v6m0 4v10m0 28v2m1 -50v6m0 4v10m1 -20v6m0 4v6m0 28v2m1 -46v6m0 4v6m0 24v2m0 4v2m0 4v2m1 -54v6m0 4v4m0 32v6m1 -52v6m0 4v10m0 16v2m1 -34v2m0 4v16m0 6v4m1 -26v22m1 -32v6m0 4v12m0 4v4m0 12v2m1 -44v6m0 4v10m0 20v2m1 -42v6m0 4v8m0 4v2m1 -24v6m0 4v12m0 14v2m1 -28v10m0 16v2m1 -38v6m0 4v6m0 14v2m1 -32v6m0 4v6m0 12v2m1 -30v6m0 4v4m0 12v2m1 -28v6m0 4v4m0 10v2m1 -26v6m0 4v2m1 -12v6m0 14v2m0 104v2m1 -128v6m0 12v2m0 106v2m0 2v4m1 -134v6m0 12v2m0 112v2m1 -134v6m0 10v2m0 120v2m0 2v2m1 -144v6m0 10v2m0 124v2m1 -144v2m0 12v6m1 -20v2m0 10v10m0 140v2m1 -152v8m0 138v2m1 -150v12m0 140v4m0 2v4m1 -162v10m0 150v2m1 -162v14m1 -20v2m0 4v6m1 -14v4m0 4v6" stroke="#00ff69"/><path d="M220.5 215v2m0 24v2m1 -40v6m0 32v2m1 -40v6m0 10v2m0 20v2m1 -40v4m0 14v2m0 18v2m1 -30v2m0 8v2m0 16v2m1 -28v2m0 24v2m1 -2v2m1 -16v2m0 12v2m1 -22v2m0 18v2m1 -14v2m0 10v2m1 -18v2m0 14v2m1 -16v2m0 4v2m0 6v2m1 -2v2m1 -12v2m0 4v2m0 2v2m1 -10v2m1 8v2m1 -42v6m0 40v2m1 -48v4m0 48v2m0 2v4m0 2v2m0 2v2m1 -32v2m0 32v2m0 6v2m0 10v2m0 2v4m0 8v2m1 -70v2m0 50v2m1 -54v2m0 18v4m0 6v4m0 8v2m0 6v2m0 2v2m0 6v2m1 -64v2m0 54v2m0 2v2m0 2v6m0 2v4m1 -76v2m0 68v2m0 2v2m0 2v4m0 8v2m0 2v2m0 4v2m0 8v2m0 12v2m0 2v4m1 -132v2m0 62v12m0 2v2m1 -80v2m0 60v4m1 -104v2m0 36v2m0 58v10m1 -70v2m0 60v6m1 -68v2m0 60v4m1 -66v2m0 62v2m1 -66v2m0 58v2m0 2v4m0 4v2m1 -74v2m0 62v4m1 -68v2m0 56v4m0 2v2m0 2v2m1 -70v2m0 62v4m1 -68v2m0 60v8m1 -70v2m0 60v6m0 2v2m1 -72v2m0 58v8m1 -106v2m0 36v2m0 60v2m0 4v2m1 -108v2m0 78v2m0 2v2m0 6v2m1 -94v6m0 34v2m0 8v2m0 26v2m0 6v14m1 -62v2m0 60v10m1 -72v2m0 62v2m1 -66v2m0 60v6m1 -68v2m0 58v8m1 -68v2m0 56v2m0 2v8m0 2v2m1 -112v2m0 36v2m0 56v2m0 2v4m0 2v4m1 -110v6m0 32v2m0 60v6m0 4v2m1 -112v6m0 4v2m0 90v4m1 -68v2m0 60v6m1 -68v2m0 58v8m1 -68v2m0 62v4m1 -106v2m0 36v2m0 58v10m1 -70v2m0 52v2m0 6v8m1 -70v2m0 56v2m0 2v8m0 2v2m1 -74v2m0 60v8m1 -70v2m0 60v4m0 4v2m1 -72v2m0 58v10m1 -108v6m0 4v2m0 26v2m0 58v6m1 -104v6m0 4v2m0 86v12m1 -110v6m0 4v2m0 26v2m0 56v2m0 10v2m1 -72v2m0 60v10m1 -72v2m0 54v2m0 2v8m0 2v2m1 -72v2m0 58v4m0 2v6m1 -72v2m0 56v8m1 -66v2m0 62v2m0 2v2m1 -70v2m0 60v4m1 -66v2m0 58v8m0 8v2m1 -78v2m0 58v6m0 6v2m1 -74v2m0 58v2m0 2v8m1 -72v2m0 58v2m0 2v2m1 -4v6m1 -68v2m0 60v6m0 2v2m1 -110v2m0 36v2m0 60v8m1 -108v6m0 4v2m0 86v4m0 2v2m0 2v2m1 -72v2m0 58v8m0 2v4m1 -74v2m0 56v2m0 2v2m0 2v6m1 -72v2m0 60v4m1 -66v2m0 58v6m0 2v2m1 -70v2m0 58v2m1 -62v2m0 58v4m0 2v4m1 -70v2m0 56v2m0 4v4m1 -106v6m0 32v2m0 60v8m1 -108v6m0 4v2m0 84v2m0 4v4m1 -106v4m0 34v2m0 58v10m1 -108v6m0 32v2m0 60v6m1 -106v6m0 4v2m0 26v2m0 58v2m0 2v6m1 -70v2m0 60v4m0 2v4m0 2v2m1 -76v2m0 62v6m1 -70v2m0 60v8m1 -70v2m0 58v6m0 2v4m1 -72v2m0 60v2m0 2v8m1 -74v2m0 58v4m0 2v6m1 -72v2m0 58v10m1 -70v2m0 58v4m0 2v2m1 -68v2m0 58v8m2 -68v2m0 60v8m1 -70v2m0 60v10m1 -72v2m0 60v2m0 2v6m1 -72v2m0 56v2m0 2v8m1 -108v2m0 36v2m0 58v10m1 -70v2m0 60v6m0 4v2m1 -74v2m0 64v2m1 -68v2m0 58v10m1 -70v2m0 58v10m1 -108v4m0 34v2m0 60v12m1 -74v2m0 58v10m1 -108v6m0 32v2m0 60v8m1 -70v2m0 62v4m1 -68v2m0 60v6m0 2v2m1 -72v2m0 60v2m0 2v6m1 -72v2m0 58v12m1 -72v2m0 60v6m1 -68v2m0 64v8m1 -74v2m0 64v6m1 -72v2m0 56v2m0 42v2m0 4v2m0 8v2m0 6v2m0 4v2m1 -156v4m0 2v4m0 4v4m0 16v2m0 38v2m0 42v4m0 2v6m0 8v2m0 2v2m0 4v6m1 -168v4m0 4v10m0 4v2m0 4v2m0 74v2m0 2v2m1 -112v6m0 24v2m0 6v2m1 -10v2m0 6v2m1 -22v4m0 16v2m1 -40v6m0 10v2m0 20v2m1 -40v2m0 12v2m0 22v2m1 -18v2m0 14v2m1 -28v2m1 4v2m1 18v2m3 -28v2m1 24v2m1 -2v2m1 -38v2m0 34v2m1 -40v2m0 36v2m1 -2v2m1 -2v2m1 -30v6m1 -12v2m0 4v6m1 -12v2m0 4v4m1 -12v4m0 32v2m1 -40v6m0 4v4m1 -14v6m0 4v6m1 -16v6m0 4v6m1 -16v6m0 32v2m1 -2v2m1 -2v2m1 -2v2m1 -2v2m1 -2v2m1 -2v2m1 -40v2m0 36v2m1 -2v2m0 24v6m0 22v2m0 12v2m0 6v2m1 -112v2m0 32v2m1 -2v2m1 -2v2m1 -2v2m1 -40v2m0 8v2m0 26v2m1 -40v2m0 10v2m1 -10v2m0 6v2m0 24v2m1 -2v2m1 -2v2m1 -2v2m1 -24v2m0 20v2m1 -30v2m0 26v2m1 -22v2m0 18v2m1 -2v2m1 -26v2m0 4v2m0 16v2m1 -26v2m0 22v2m1 -24v2m0 4v2m0 14v2m1 -16v2m0 12v2m1 -22v2m0 6v2m0 10v2m1 -2v2m1 -20v2m0 16v2m1 -4v4m1 -40v6m0 20v2m56 -22v4m0 4v2m0 2v2m0 12v2m0 36v4m0 4v2m0 6v2m1 -74v2m0 4v2m0 20v4m0 2v2m0 4v2m0 6v2m0 4v2m0 4v2m0 2v4m1 -72v2m0 2v2m0 8v2m0 4v2m0 6v2m0 20v2m0 2v2m0 8v4m1 -78v2m0 6v2m0 2v2m0 6v2m0 4v2m0 2v6m0 2v2m0 18v2m0 10v2m0 2v2m0 2v2m0 2v2m1 -76v4m0 2v2m0 10v2m0 22v2m0 6v2m0 4v2m0 2v4m0 2v2m1 -72v2m0 2v4m0 4v2m0 12v2m0 4v2m0 4v2m0 14v2m0 12v6m0 4v2m1 -46v2m0 22v2m0 12v2m6 -76v6m0 2v2m0 4v4m0 2v4m0 32v2m0 2v4m0 2v2m0 6v2m1 -76v2m0 2v2m0 12v2m0 6v2m0 30v2m0 4v2m0 4v4m1 -38v2m0 2v2m0 4v2m0 12v2m0 4v8m1 -6v2m0 6v2m1 -42v2m0 12v4m0 4v2m0 6v4m1 -52v2m0 6v6m0 8v2m0 14v2m0 4v2m0 2v8m1 -76v2m0 4v6m0 2v2m0 40v2m0 4v4m1 -64v2m0 6v8m0 2v2m0 2v2m0 2v2m0 10v2m0 2v2m0 10v2m0 8v2m0 2v2m0 4v2m1 -74v2m0 2v2m0 6v2m0 4v4m0 10v2m0 2v2m0 2v2m0 2v2m0 8v2m0 4v2m0 8v2m0 6v2m1 -70v4m0 8v2m0 20v2m0 12v2m0 26v2m1 -92v2m0 2v6m0 2v2m0 2v2m0 10v6m0 4v2m0 2v4m0 2v4m0 16v2m0 8v2m0 2v4m0 6v2m1 -94v4m0 36v2m0 4v4m0 10v2m0 10v2m0 2v4m1 -80v2m0 4v2m0 12v2m0 2v2m0 6v2m0 4v2m0 12v2m0 8v2m0 4v6m0 2v4m0 4v2m0 6v2m1 -88v2m0 6v4m0 4v2m0 2v2m0 4v2m0 4v2m0 2v2m0 6v2m0 6v2m0 2v2m0 10v2m0 4v2m1 -82v2m0 6v6m0 8v2m0 18v2m0 20v8m0 4v2m1 -72v2m0 4v2m0 18v2m0 10v4m0 10v2m0 4v2m0 2v4m0 2v4m0 2v2m1 -80v2m0 2v2m0 4v2m0 4v6m0 6v2m0 4v2m0 30v2m0 4v2m1 -74v4m0 26v2m0 6v2m0 14v4m0 4v2m0 10v2m1 -76v2m0 4v4m0 2v4m0 2v2m0 2v2m0 2v2m0 4v2m0 14v4m0 12v2m0 4v2m0 4v4m1 -72v2m0 26v2m0 2v2m0 16v2m0 8v4m0 2v4m0 4v2m1 -84v2m0 10v6m0 4v4m0 6v2m0 2v2m0 14v2m0 20v2m1 -76v2m0 2v2m0 4v4m0 26v4m0 16v4m0 2v2m1 -68v2m0 2v2m0 2v2m0 16v2m0 30v2m0 6v6m0 2v4m0 2v2m0 10v2m3 -96v6m0 32v2m0 86v2m1 -128v4m0 34v2m1 -2v2m1 -2v2m1 0v2m0 6v2m1 -10v2m2 0v2m1 -4v2m1 -10v2m1 2v4m1 -2v2m1 -12v2m0 8v2m1 -2v2m1 -2v2m1 -16v2m0 12v2m1 -2v2m1 -2v2m1 -2v2m1 -14v2m0 10v2m1 -22v2m0 4v2m0 12v2m2 -2v2m1 -30v2m0 26v2m1 -2v2m1 -36v2m0 12v2m0 18v2m1 -40v2m0 14v2m0 20v2m1 -2v2m1 -30v2m0 26v2m1 -2v2m1 -36v2m0 32v2m1 -40v4m0 34v2m1 -2v2m1 -2v2m1 -40v6m0 32v2m1 -40v6m0 4v6m1 -16v6m0 4v4m1 24v2m1 -2v2m1 -40v4m0 34v2m0 38v2m1 -42v2m1 -2v2m1 -2v2m0 26v2m1 -68v2m0 36v2m1 -40v6m0 32v2m1 -2v2m0 22v4m0 2v2m0 4v8m0 2v2m0 2v4m0 10v2m0 28v2m1 -134v2m0 36v2m0 38v2m0 4v2m0 2v2m0 12v2m0 4v2m0 2v2m0 8v2m0 30v6m1 -160v6m0 32v2m0 22v4m0 2v2m0 6v2m0 14v6m0 4v4m0 2v4m0 2v2m0 8v2m0 2v2m0 4v2m0 16v4m0 8v2m0 4v2m1 -172v4m0 34v2m0 22v2m0 2v4m0 8v4m0 60v2m0 2v2m1 -146v4m0 32v2m1 -36v2m0 32v2m1 -2v2m1 -2v2m1 -2v2m1 -30v2m0 26v2m1 -2v2m1 -40v2m0 36v2m1 -2v2m1 -22v2m1 18v2m1 -30v2m0 12v2m0 12v2m1 -16v2m0 12v2m1 -26v2m0 10v2m0 10v2m1 -2v2m1 -12v2m0 8v2m1 -20v2m0 16v2m1 -2v2m1 -18v2m0 14v2m1 -40v2m0 22v2m0 10v2m2 -6v2m1 0v2m1 10v2m3 -12v2m1 6v2m1 -8v2m1 -2v2m0 22v2m1 -26v2m0 26v2m1 -30v2m0 10v6m0 16v2m1 -36v2m0 10v2m0 6v2m0 18v2m1 -80v4m0 34v2m0 10v2m0 14v2m1 -30v2m0 10v2m0 18v2m1 -34v2m0 10v2m0 24v2m1 -78v6m0 32v2m0 10v2m0 28v4m0 2v2m0 16v2m1 -106v6m0 4v4m0 36v2m0 32v6m1 -90v2m0 36v2m0 10v2m0 36v8m0 16v2m0 2v2m1 -80v2m0 10v2m0 38v12m1 -64v2m0 10v2m0 38v16m0 2v2m1 -72v2m0 10v2m0 38v22m1 -74v2m0 10v2m0 38v24m0 6v2m0 8v2m1 -94v2m0 10v2m0 38v26m0 2v8m0 4v2m0 2v2m1 -98v2m0 10v2m0 38v36m0 2v4m1 -94v2m0 10v2m0 38v40m0 2v4m1 -98v2m0 10v2m0 38v44m0 2v2m1 -100v2m0 10v2m0 38v46m1 -98v2m0 10v2m0 38v48m1 -138v6m0 4v2m0 26v2m0 10v2m0 38v50m1 -140v6m0 32v2m0 10v2m0 36v52m1 -102v2m0 10v2m0 36v54m1 -104v2m0 10v2m0 34v62m1 -110v2m0 10v2m0 34v58m1 -106v2m0 10v2m0 34v62m1 -110v2m0 10v2m0 32v24m0 10v32m1 -112v2m0 10v2m0 32v16m0 26v22m1 -110v2m0 10v2m0 32v12m0 34v20m0 2v2m1 -116v2m0 10v2m0 30v10m0 40v20m1 -152v6m0 4v2m0 40v2m0 2v4m0 2v10m0 2v2m0 2v8m0 50v14m0 4v2m1 -152v2m0 8v4m0 2v2m0 4v10m0 12v2m0 4v2m0 20v2m0 60v14m0 2v2m1 -152v2m0 16v2m0 4v2m0 6v2m0 2v4m0 96v12m0 4v2m1 -144v4m0 4v2m0 2v2m0 2v2m0 8v10m0 92v10m0 4v2m1 -158v6m0 48v2m0 2v22m0 62v12m1 -102v28m0 64v10m0 4v2m1 -106v24m0 68v8m1 -154v6m0 42v2m0 4v22m0 72v8m0 4v2m1 -162v6m0 42v2m0 4v22m0 72v8m0 6v2m1 -164v6m0 4v2m0 36v2m0 4v24m0 72v6m1 -156v6m0 4v2m0 40v28m0 70v8m1 -158v6m0 46v28m0 72v6m1 -106v30m0 70v6m1 -120v2m0 12v2m0 22v6m0 70v8m1 -122v2m0 10v4m0 24v6m0 70v6m1 -122v2m0 10v2m0 28v4m0 70v6m1 -122v2m0 10v2m0 28v4m0 70v6m1 -122v2m0 10v2m0 28v4m0 70v8m1 -124v2m0 10v2m0 28v4m0 72v6m1 -124v2m0 10v2m0 28v4m0 72v6m1 -124v2m0 10v2m0 28v4m0 72v6m1 -124v2m0 10v2m0 28v4m0 72v6m1 -162v2m0 36v2m0 10v2m0 28v4m0 72v6m1 -124v2m0 10v2m0 28v2m0 74v4m1 -122v2m0 10v2m0 28v2m0 76v2m1 -122v2m0 10v2m0 28v2m0 76v2m1 -122v2m0 10v2m0 28v2m1 -44v2m0 10v2m0 28v2m0 74v2m1 -120v2m0 10v2m0 28v2m0 74v2m0 6v2m1 -128v2m0 10v2m0 28v2m1 -44v2m0 10v2m0 28v2m0 72v2m0 6v2m1 -126v2m0 10v2m0 28v4m0 70v2m0 4v2m1 -124v2m0 10v2m0 28v4m1 -46v2m0 10v2m0 28v4m0 68v2m1 -116v2m0 10v2m0 28v4m1 -46v2m0 10v2m0 28v4m0 72v2m1 -120v2m0 10v2m0 28v4m0 66v2m1 -102v2m0 28v4m0 66v2m1 -102v2m0 28v4m0 66v4m1 -116v2m0 10v2m0 28v4m1 -46v2m0 10v2m0 28v4m0 62v2m1 -110v2m0 10v2m0 28v4m0 66v2m1 -114v2m0 10v2m0 28v4m1 -84v4m0 34v2m0 10v2m0 28v4m1 -46v2m0 10v2m0 28v6m0 56v2m1 -106v2m0 10v2m0 28v6m1 -48v2m0 10v2m0 30v4m1 -48v2m0 10v2m0 30v4m1 -48v2m0 10v2m0 30v4m1 -86v6m0 32v2m0 10v2m0 30v6m1 -50v2m0 10v2m0 30v6m0 36v2m1 -88v2m0 10v2m0 30v6m0 30v2m1 -82v2m0 10v2m0 30v6m0 26v2m1 -116v6m0 32v2m0 10v2m0 30v6m0 20v2m1 -110v6m0 4v2m0 38v2m0 30v2m0 18v4m1 -68v2m0 10v2m0 28v2m0 16v2m1 -62v2m0 10v2m0 24v2m0 14v2m1 -56v2m0 10v2m0 18v4m0 12v2m1 -50v2m0 10v2m0 14v4m0 10v4m1 -46v2m0 10v2m0 12v2m1 -28v2m0 10v2m0 6v4m1 -24v2m0 10v2m0 2v4m0 12v2m1 -72v2m0 36v2m0 12v2m0 12v2m1 -30v2m1 -2v2m0 16v4m1 -22v2m1 -2v2m3 -40v4m1 -4v6m2 20v2m1 -4v2m0 10v4m1 -18v2m0 14v2m1 -40v6m0 14v2m0 10v2m0 4v2m1 -24v2m0 20v2m1 -14v2m0 10v2m1 -26v2m0 8v2m0 12v2m1 -18v2m0 14v2m1 -28v2m0 24v2m1 -30v2m0 26v2m1 -2v2m1 -2v2m0 94v6m1 -126v2m0 22v2m1 -26v2m0 22v2m0 104v2m1 -144v2m0 34v2m0 106v2m1 -110v2m1 -40v2m0 8v2m0 26v2m1 -2v2m1 -2v2m1 -36v2m0 32v2m1 -38v2m0 34v2m1 -2v2" stroke="#00ff59"/><path d="M220.5 213v2m1 2v2m1 -6v2m3 2v2m1 0v2m0 4v2m4 4v2m2 -2v2m2 6v4m2 2v2m0 6v2m1 -16v2m0 16v2m1 8v2m0 8v4m0 6v2m0 2v2m0 2v2m1 -28v4m0 10v2m0 4v2m0 22v2m1 -50v4m0 6v2m0 2v2m0 4v2m0 2v2m0 6v4m1 18v2m1 -4v2m0 4v2m0 2v4m0 2v2m0 2v4m0 2v8m0 2v12m0 2v2m1 -52v2m0 2v2m0 46v2m0 2v2m1 -68v16m1 -12v8m1 -10v8m1 -10v8m1 -6v10m1 -10v4m1 -4v10m0 2v2m1 -16v2m0 2v4m1 -6v6m0 2v2m1 -8v8m1 -10v2m0 2v8m1 -12v12m1 -14v2m0 2v6m1 -26v4m0 2v8m0 2v2m1 -6v4m1 6v4m1 -10v10m0 2v2m1 -12v6m0 2v2m1 -10v8m1 -6v2m0 2v2m0 4v2m1 -16v2m0 6v2m0 2v4m1 -14v4m0 2v2m1 -76v2m0 66v10m1 -10v6m1 -6v6m0 2v2m1 -10v8m1 -6v8m1 -8v8m1 -8v2m0 6v2m1 -10v8m1 -12v4m0 2v6m1 -8v4m1 -8v10m1 -76v2m0 70v2m0 2v2m1 -12v4m0 2v4m1 -4v6m1 -10v2m0 2v6m0 2v2m0 2v2m1 -14v2m0 2v4m1 -14v6m1 -6v2m0 2v2m1 -6v10m1 -8v6m1 -6v4m0 2v6m1 -8v6m0 6v2m1 -20v8m0 2v4m1 -12v8m1 -8v2m0 2v2m1 -4v4m0 2v2m1 -78v2m0 66v2m0 2v8m1 -12v2m0 4v2m0 2v2m1 -8v8m1 -14v8m0 4v2m1 -14v2m0 2v4m1 -10v8m1 -2v6m0 2v2m1 -12v8m1 -6v6m0 4v2m1 -82v2m0 66v10m0 2v2m1 -12v4m0 6v2m1 -14v8m1 -6v6m1 -10v2m0 4v2m0 2v4m1 -10v6m1 -6v12m1 -16v2m0 4v6m1 -2v4m1 -8v4m1 -6v4m1 -6v6m1 -6v6m0 2v4m2 -10v6m1 -4v4m1 -4v4m0 2v2m1 -10v8m1 -8v8m1 -10v4m0 2v4m0 2v4m1 -16v8m1 -6v4m1 -4v10m1 -6v2m0 4v2m1 -12v10m1 -10v10m1 -12v6m1 -6v2m0 2v2m1 -2v6m0 2v2m1 -10v2m0 2v2m0 4v2m1 -16v6m0 2v6m1 -8v6m1 -8v2m0 58v2m1 -74v2m0 32v2m0 2v4m0 2v4m0 4v6m0 2v6m0 2v4m1 -158v2m0 12v4m0 8v2m0 88v2m0 2v2m0 4v2m0 6v6m0 4v2m0 2v2m1 -162v2m0 24v2m0 10v2m0 60v2m0 2v2m1 -80v2m1 -6v2m4 -10v2m2 0v2m1 -2v2m1 -4v2m7 -16v2m2 2v2m0 32v2m1 -2v2m1 -38v2m0 34v2m1 -40v2m1 36v2m1 -2v2m1 -2v2m9 -38v2m0 56v2m0 8v2m0 6v2m0 2v2m2 -80v2m2 -6v2m2 0v2m0 6v2m0 26v2m5 -30v2m2 0v2m9 20v2m1 2v2m1 -10v2m1 0v2m54 -14v2m0 26v2m0 24v4m0 2v2m0 6v2m1 -24v2m0 4v2m0 2v2m0 6v4m0 8v2m1 -76v2m0 46v4m0 4v2m1 -16v2m0 6v2m0 2v2m0 10v2m1 -58v2m0 42v4m1 -30v2m0 12v4m0 2v2m0 8v2m0 6v2m1 -22v2m0 14v4m0 6v2m2 8v2m4 -74v2m0 36v6m0 2v6m1 -16v4m0 6v2m0 2v2m0 6v2m1 -92v2m0 12v2m0 6v2m0 40v2m0 12v8m1 -10v2m1 -32v2m0 30v2m0 4v2m1 -20v2m0 8v2m0 4v2m0 8v2m1 -76v2m0 46v2m0 6v10m1 -58v2m0 10v2m0 34v2m0 2v4m0 10v2m1 -26v2m0 6v2m0 2v2m0 2v2m0 2v6m1 -74v2m0 46v2m0 12v2m0 10v2m1 -36v2m0 8v8m0 12v2m1 -86v2m0 54v2m0 20v2m0 2v4m1 -26v2m0 6v2m0 4v4m0 2v2m1 -24v4m0 4v2m0 2v2m0 4v4m1 -14v2m0 4v10m0 4v2m1 -44v2m0 26v2m0 4v2m1 -86v2m0 68v4m0 2v4m0 2v6m1 -22v2m0 12v2m0 2v2m0 2v2m1 -58v2m0 34v2m0 4v2m0 6v2m0 4v6m1 -30v6m0 4v2m0 4v4m0 4v2m0 4v2m1 -44v2m0 12v2m0 4v4m0 2v2m0 4v2m0 2v2m0 2v2m1 -72v2m0 2v2m0 44v2m0 2v4m1 -66v2m0 34v2m0 10v4m0 22v4m0 18v2m3 -60v2m3 -2v2m1 -16v2m0 10v2m5 -16v2m4 -6v2m1 -8v2m3 0v2m2 -10v2m2 -4v2m1 -6v2m0 6v2m2 -4v2m1 -6v2m1 -16v2m0 10v2m1 -4v2m3 -12v2m5 34v2m1 -2v2m7 24v2m2 4v2m1 -10v2m0 6v4m0 6v4m0 36v2m0 12v2m0 24v2m0 2v2m0 2v2m1 -90v2m0 4v2m0 2v2m0 34v2m0 4v2m0 28v2m1 -100v2m0 4v6m0 20v2m1 -98v2m1 0v2m1 0v2m4 4v2m1 -10v2m0 8v2m1 -10v2m8 24v2m1 -10v2m1 10v2m1 2v2m1 -10v6m1 4v2m1 -6v2m1 -2v2m1 -6v2m0 2v2m0 2v2m0 6v2m1 -16v2m0 6v2m0 6v2m2 -14v2m2 20v2m1 -12v2m1 4v2m0 2v2m1 -2v6m0 8v4m1 -10v2m0 12v2m1 -12v4m0 8v2m0 4v2m1 -14v8m0 2v2m1 -6v2m1 -48v2m0 50v2m0 4v2m0 10v2m1 -14v4m0 2v2m0 6v2m0 2v2m1 -14v4m1 0v2m0 2v2m1 0v8m1 -6v6m0 2v2m0 8v2m1 -18v2m0 8v4m3 4v2m2 2v2m2 0v2m1 0v2m2 0v2m2 -38v10m0 32v2m1 -52v26m1 -30v34m0 20v2m1 -60v40m1 -94v2m0 10v2m0 34v50m1 -134v2m0 6v4m0 4v2m0 4v2m0 30v4m0 2v14m0 2v4m0 18v38m1 -138v4m0 8v2m0 2v2m0 2v2m0 2v2m0 6v4m0 12v2m0 8v2m0 14v2m0 24v6m0 14v20m1 -140v2m0 8v2m0 6v4m0 2v2m0 2v2m0 6v2m0 14v2m0 6v2m0 4v2m0 2v2m0 8v2m0 18v2m0 22v18m1 -90v2m0 2v2m0 22v10m0 38v14m1 -104v2m0 10v2m0 28v14m0 38v12m1 -106v2m0 12v2m0 24v6m0 2v6m0 42v12m1 -94v2m0 22v8m0 2v6m0 44v12m1 -96v2m0 22v8m0 4v2m0 48v10m1 -96v2m0 24v6m0 4v2m0 48v12m1 -100v2m0 28v4m0 56v10m1 -112v2m0 10v2m0 28v4m0 58v10m1 -114v2m0 10v2m0 30v4m0 56v10m1 -102v2m0 30v4m0 58v8m1 -68v2m0 58v10m1 -70v2m0 58v10m1 -70v2m0 60v8m1 -70v2m0 60v8m1 -70v2m0 60v10m1 -72v2m0 62v8m1 -72v2m0 62v8m1 -72v2m0 62v8m1 -72v2m0 62v8m1 -74v4m0 62v8m1 -74v4m0 62v10m1 -76v4m0 62v10m1 -76v4m0 62v10m1 -76v4m0 62v8m1 -74v4m0 62v8m1 -74v4m0 62v8m1 -74v4m0 62v6m1 -70v2m0 62v6m1 -70v2m0 62v6m1 -70v2m0 62v4m1 -68v2m0 62v4m1 -68v2m0 60v6m1 -68v2m0 60v4m1 -66v2m0 60v4m1 -66v2m0 58v6m1 -66v4m0 56v6m1 -66v4m0 54v4m0 2v2m1 -66v4m0 54v4m1 -62v4m0 52v4m0 2v2m1 -64v4m1 -2v4m0 50v2m1 -56v4m0 48v2m1 -54v6m0 44v2m1 -52v6m0 42v2m1 -50v8m0 36v2m1 -44v10m0 30v2m1 -42v12m1 -12v10m0 18v2m1 -30v6m1 -6v2m1 -52v2m0 44v4m1 6v2m1 -18v2m0 8v2m1 -16v4m0 6v2m1 -16v4m1 -8v2m1 -6v2m0 2v2m0 4v4m2 -26v2m0 2v2m1 6v2m2 -10v2m1 -14v2m1 -6v2m0 4v2m3 -14v2m0 8v2m1 -14v2m1 -4v2m2 4v2m3 -20v2m3 2v2m5 124v2m0 2v2m1 -140v2m1 -12v2m0 154v2m1 0v2m0 4v2m1 -168v2m1 2v2m3 -6v2" stroke="#00ff49"/><path d="M223.5 213v2m1 0v2m0 4v2m1 -2v4m6 6v2m1 -4v2m0 4v2m3 -2v2m1 10v2m1 -2v4m1 -4v2m0 8v2m0 30v2m1 -30v4m0 10v2m0 26v2m0 4v4m0 6v2m1 -34v2m0 4v2m0 22v2m2 6v2m1 6v14m0 12v4m0 2v4m0 2v2m2 -54v4m1 -6v6m1 -8v4m1 0v4m0 2v4m1 -14v8m0 2v6m1 -12v2m0 2v4m1 -12v8m1 -8v2m0 4v2m1 -4v4m0 2v4m0 2v2m1 -12v10m1 -10v4m2 -84v2m0 62v2m0 2v6m1 -74v2m0 64v4m1 6v2m1 -2v2m0 2v2m0 2v2m0 4v2m1 -18v2m0 2v4m1 -6v10m1 -10v4m0 4v2m0 4v2m1 -20v2m0 2v2m0 4v2m1 -8v10m1 -8v8m1 -12v8m1 -8v2m0 2v2m1 -4v12m1 -10v10m1 -10v12m1 -16v4m0 2v10m1 -12v8m1 -8v10m1 -14v10m1 -8v2m0 2v4m1 -10v2m0 2v8m1 -10v12m1 -10v8m1 -8v2m0 8v2m1 -16v2m0 4v8m1 -16v6m0 2v4m1 -12v4m1 0v12m1 -14v2m0 2v10m1 -8v6m0 2v2m0 2v2m1 -16v6m1 -10v2m0 4v4m1 -8v6m1 -8v6m1 -6v2m0 2v6m1 -4v8m1 -12v2m0 2v10m1 -10v8m1 -14v4m0 2v8m1 -14v6m1 -8v8m1 -4v2m0 2v6m1 -10v10m0 2v2m1 -14v4m0 2v2m0 16v2m1 -24v2m0 2v4m1 -12v6m0 2v8m1 -14v8m1 -8v6m1 -2v2m0 2v4m1 -12v10m1 -4v4m0 2v2m1 -12v2m0 2v2m1 -10v2m0 4v10m1 -14v8m0 2v2m0 6v2m1 -22v6m1 -6v6m1 -6v2m0 4v6m0 4v2m2 -16v12m1 -12v14m1 -14v2m0 2v10m1 -12v10m1 -10v8m1 -8v2m0 4v2m0 4v2m1 -14v2m1 -6v6m1 0v8m1 -12v4m0 2v4m1 -6v8m0 2v2m1 -12v10m1 -16v8m1 -8v6m1 -2v2m0 2v2m0 2v2m1 -14v2m0 2v4m0 2v6m1 -16v2m0 6v4m0 2v2m1 -8v4m1 20v26m1 -70v8m0 4v2m0 16v2m0 2v2m0 12v2m1 -150v6m0 4v2m0 2v2m0 100v2m0 4v6m0 34v2m1 -136v2m0 72v2m3 -76v2m1 -10v2m0 4v2m1 -12v2m0 6v2m1 -8v4m2 -8v2m1 -6v2m4 -8v2m0 4v2m1 -8v2m4 -2v2m17 -4v2m7 8v2m2 0v2m1 -2v2m1 0v2m7 2v2m1 -2v2m0 2v2m0 2v2m1 -6v4m1 -4v2m1 10v2m1 0v2m1 -2v2m54 28v2m0 12v4m0 6v6m1 -16v2m0 6v6m0 8v2m1 -24v8m0 6v2m0 4v2m1 -20v4m0 8v2m1 -26v2m0 6v12m1 -14v2m0 4v4m0 6v2m0 2v2m0 2v4m2 -8v4m1 -2v2m2 -4v2m1 -2v2m1 -16v6m0 2v4m0 6v2m0 8v2m1 -38v2m0 2v2m0 2v2m0 2v2m0 4v2m0 12v2m1 -24v6m0 6v2m1 -16v2m0 8v2m0 2v2m1 -24v2m0 20v2m1 -20v2m0 2v6m0 8v2m1 -14v6m0 6v2m1 -18v6m0 2v2m1 -20v2m0 12v2m1 -18v6m0 8v2m0 6v2m0 2v4m1 -6v2m0 2v2m1 -42v2m0 14v2m0 4v4m0 2v2m0 4v2m1 -4v2m0 8v2m1 -12v6m1 2v4m1 -30v2m0 8v2m0 10v2m1 -68v2m0 58v2m0 8v2m0 8v4m1 -42v2m0 2v2m0 6v2m0 2v2m0 2v2m0 2v2m0 2v2m1 -24v2m0 6v4m1 -2v2m0 8v2m0 4v4m0 6v2m1 -46v4m0 8v2m0 4v2m0 2v2m0 8v2m1 -22v16m1 -22v2m0 4v2m0 2v4m0 8v2m0 18v2m3 -68v2m2 -2v2m3 -6v2m1 -12v2m1 -4v2m2 2v2m2 -6v2m2 -8v2m2 0v2m1 -8v2m6 -8v2m1 -8v2m4 -4v2m19 52v2m0 8v4m0 12v2m0 54v2m1 -76v2m0 8v2m0 14v4m0 10v2m0 8v2m0 44v2m12 -160v2m0 8v2m1 -10v2m2 2v2m1 0v4m2 0v2m3 4v2m1 -4v2m2 2v2m0 8v2m3 -2v2m1 -2v2m2 4v2m1 0v2m0 8v2m1 -8v4m1 2v2m1 6v2m1 2v2m0 4v2m1 2v2m0 6v2m1 2v4m1 -6v2m0 8v4m1 -12v2m0 8v2m1 0v2m1 0v4m0 8v2m2 0v2m0 2v4m1 -4v2m1 6v2m1 -2v2m1 2v2m2 -2v4m2 0v2m4 4v2m1 0v2m6 -150v2m0 36v2m0 12v2m0 6v2m0 20v6m0 2v2m0 2v6m1 -90v2m0 2v2m0 2v2m0 6v2m0 2v2m0 22v2m0 6v4m0 2v2m0 6v2m0 10v2m0 8v2m0 6v14m1 -118v4m0 6v2m0 24v2m0 14v6m0 2v4m0 2v2m0 2v8m0 2v2m0 4v2m0 8v2m0 2v22m1 -86v2m0 10v2m0 38v38m1 -34v38m1 -82v2m0 32v2m0 6v42m1 -96v2m0 10v2m0 32v2m0 6v14m0 14v16m1 -98v2m0 10v2m0 32v4m0 2v12m0 22v14m1 -100v2m0 10v2m0 32v4m0 2v8m0 30v10m1 -100v2m0 44v12m0 34v10m1 -56v10m0 38v10m1 -56v6m0 42v8m1 -56v6m0 42v10m1 -58v4m0 46v8m1 -58v4m0 48v6m1 -58v4m0 48v8m1 -60v4m0 48v8m1 -60v2m0 52v6m1 -60v2m0 52v8m1 -62v2m0 52v8m1 -62v2m0 54v6m1 -62v2m0 54v6m1 -62v2m0 54v6m1 -62v2m0 54v6m1 -62v2m0 54v6m1 -62v2m0 54v6m1 -62v2m0 54v6m1 -62v2m0 54v6m1 -62v2m0 54v6m0 14v2m1 -78v2m0 54v6m1 -62v2m0 54v6m1 -62v2m0 54v6m1 -62v2m0 52v8m1 -62v2m0 52v8m1 -62v2m0 52v6m1 -60v4m0 48v8m1 -60v4m0 48v8m1 -60v4m0 48v6m1 -56v2m0 46v8m1 -56v4m0 42v8m0 8v2m1 -64v4m0 42v8m1 -54v6m0 38v8m0 8v2m1 -62v8m0 34v10m0 2v2m1 -54v8m0 30v6m1 -44v12m0 24v6m0 4v2m1 -46v14m1 -14v28m0 12v2m1 -40v22m1 -18v12m0 2v2m0 12v2m1 -28v6m1 -8v2m1 -6v2m1 -6v2m1 8v2m1 -20v2m0 12v2m1 -18v2m0 2v2m3 -16v2m2 -14v2m0 4v4m1 -4v2m1 -12v2m0 4v2m1 -14v2m0 2v4m1 -8v2m1 -6v2m0 2v4m1 -12v2m4 -10v2m0 6v2m5 -24v2m0 8v2m3 -16v2m3 -6v2m0 116v2m1 -114v2m2 130v2m2 -140v2m4 -10v2m1 -4v2" stroke="#00ff39"/><path d="M221.5 215v2m2 2v2m4 0v2m1 0v2m3 4v2m2 2v2m1 0v2m2 0v2m0 4v2m1 -4v4m1 -4v2m0 6v2m0 10v4m1 -12v2m0 10v2m0 14v2m0 4v2m0 10v4m0 2v2m0 8v2m1 -16v2m0 4v2m3 14v2m0 2v6m0 14v12m0 4v2m1 -42v2m0 8v8m0 2v2m0 2v2m0 14v4m0 2v6m1 -52v2m1 -2v2m1 -6v8m1 -4v2m0 4v2m0 42v2m1 -52v2m0 6v4m1 -8v8m1 -12v2m0 2v4m1 -12v2m0 2v6m1 -6v2m0 4v2m0 2v4m1 -6v4m1 -10v10m0 2v2m1 -22v10m1 -12v2m1 -6v4m1 4v4m0 2v2m1 -4v2m0 2v4m0 2v2m0 6v2m0 30v2m1 -52v6m1 -2v2m1 -6v2m0 2v4m0 2v2m0 2v2m0 2v2m1 -18v14m0 4v2m1 -18v12m1 -12v6m0 2v4m0 2v2m1 -20v2m0 2v2m1 -8v4m1 4v4m0 2v2m1 -8v10m0 2v2m1 -12v6m0 4v2m1 -12v4m0 2v2m1 -12v14m1 -12v8m1 -12v2m0 2v2m1 -12v2m0 4v2m1 0v2m0 2v4m0 4v2m1 -12v10m1 -12v6m0 2v4m1 -16v2m0 2v2m0 2v6m0 2v2m1 -12v6m0 4v2m1 -22v2m1 -4v6m1 6v6m0 2v2m1 -10v6m0 2v2m1 -12v2m0 2v2m1 -6v14m1 -16v10m0 4v2m1 -18v4m1 -6v2m0 2v2m1 -2v14m0 2v2m1 -14v4m0 6v4m1 -12v8m0 4v2m1 -16v4m1 -4v6m0 2v2m1 -18v6m1 -6v6m1 0v10m1 -10v2m0 2v8m0 34v2m1 -50v10m1 -8v12m1 -8v6m1 -12v6m1 -8v8m1 -8v2m0 4v2m0 2v2m0 2v2m0 2v2m1 -16v10m1 -10v2m0 2v2m0 2v2m1 -16v2m0 2v12m0 4v2m1 -12v10m1 -16v2m0 2v4m1 -12v6m1 -6v4m0 2v2m1 -2v4m0 2v2m2 -6v4m1 -2v2m0 2v2m0 2v2m1 -10v2m0 2v4m1 -10v8m0 2v2m1 -14v14m1 -14v4m0 2v4m0 2v2m1 -24v2m0 2v4m1 -4v4m1 4v4m0 2v4m1 -12v8m1 -6v2m0 4v4m1 -8v4m0 2v4m1 -18v4m0 2v2m1 -10v10m0 2v2m1 -10v2m0 2v6m0 2v2m1 -6v4m1 -10v2m0 2v2m1 -12v2m0 42v2m0 4v4m1 -60v2m0 2v4m0 20v4m1 -18v2m1 -18v2m0 8v2m1 -24v2m4 -82v2m1 0v2m3 -10v2m1 0v2m3 -6v2m8 -10v2m1 -4v2m0 130v2m1 -2v2m1 -2v2m1 -2v2m1 -2v2m9 -134v2m2 0v2m3 -2v2m1 0v2m6 6v2m4 2v2m2 0v2m1 4v2m2 -4v2m1 2v4m1 -2v2m1 2v2m1 0v2m54 54v2m0 8v4m0 2v4m0 4v2m1 -28v2m0 12v2m0 10v2m1 -36v2m0 12v2m0 8v4m0 34v2m0 12v2m1 -78v2m0 24v2m1 -6v2m0 4v2m1 -20v4m0 2v2m0 2v2m0 4v2m0 4v2m1 -36v2m0 18v2m0 6v4m2 -8v2m0 2v2m1 -10v2m0 2v4m0 4v4m1 -10v4m1 -8v4m0 4v2m1 -20v2m0 8v2m0 2v4m1 -22v2m0 4v2m0 6v2m0 12v2m1 -22v4m0 10v2m1 -18v2m0 46v2m1 -50v4m0 4v6m0 2v4m1 -34v2m0 10v2m0 2v4m0 2v2m0 2v6m1 -26v2m0 6v6m0 2v2m1 -14v2m0 4v2m0 2v2m1 -6v6m1 0v8m0 2v2m0 2v2m1 -36v2m1 12v8m0 2v2m0 4v2m1 -24v2m0 4v2m0 12v4m1 -34v2m0 6v2m0 10v4m0 4v2m0 6v4m0 4v2m1 -36v4m0 4v2m0 8v6m0 56v2m1 -84v4m0 6v4m0 6v4m1 -30v2m0 12v4m0 2v2m0 2v4m0 4v2m1 -36v2m0 12v2m0 2v2m0 8v2m1 -14v4m0 6v2m1 -16v4m0 4v4m0 4v4m0 24v2m1 -54v2m0 12v4m0 2v6m1 -12v2m0 4v4m1 -14v2m0 4v2m0 2v4m0 2v2m4 -62v2m0 2v2m1 -8v2m0 4v2m1 -10v2m2 -8v2m5 -8v2m1 -4v2m5 -4v2m2 -8v2m0 2v2m5 -14v2m1 2v2m2 -16v2m0 4v2m1 -12v2m2 2v2m1 -6v2m16 66v2m0 78v2m1 -76v2m0 30v2m5 -108v2m0 2v2m3 -6v2m2 12v2m1 0v2m3 -4v2m2 6v2m0 2v2m1 -8v4m2 0v2m0 6v2m1 -10v6m1 0v2m1 -4v2m0 8v2m1 -12v4m0 2v2m1 -4v2m1 10v2m1 -12v2m3 6v2m0 4v2m3 12v4m1 -2v2m0 2v4m1 0v2m1 -2v2m0 4v2m1 -4v2m1 8v2m0 8v2m1 -6v2m0 4v2m1 -6v2m0 4v2m1 -2v2m0 4v4m1 0v4m1 -2v4m2 10v2m6 12v2m12 -92v2m0 36v2m0 2v2m1 -42v2m0 2v2m0 2v2m0 8v2m0 6v6m0 2v2m0 2v2m0 2v4m1 -48v2m0 32v4m0 2v8m4 8v14m1 -18v22m1 -26v30m1 -32v34m1 -36v14m0 10v14m1 -40v12m0 18v12m1 -42v8m0 26v8m1 -44v8m0 30v8m1 -46v8m0 30v10m1 -48v6m0 34v8m1 -48v4m0 38v6m1 -50v6m0 38v8m1 -52v4m0 42v6m1 -52v4m0 42v6m1 -52v4m0 42v8m1 -54v4m0 42v8m1 -54v2m0 46v6m1 -54v2m0 46v6m1 -54v2m0 46v6m1 -54v2m0 46v6m1 -54v2m0 46v6m1 -54v2m0 46v6m1 -54v2m0 46v6m1 -54v2m0 46v6m1 -54v4m0 42v8m1 -54v4m0 42v8m1 -54v4m0 42v6m1 -52v4m0 42v6m1 -52v6m0 38v8m1 -50v4m0 38v6m1 -48v6m0 34v8m1 -48v8m0 30v10m1 -48v8m0 30v8m1 -44v8m0 26v8m1 -42v12m0 18v12m0 12v4m1 -56v14m0 10v14m0 12v2m1 -50v34m0 10v2m1 -44v30m0 6v2m1 -34v24m1 -20v26m1 -12v6m1 -10v6m1 -12v2m1 -6v4m0 4v2m0 6v2m1 -24v6m1 -10v2m0 14v2m1 -20v2m0 10v2m2 -22v2m1 -6v2m0 6v2m1 -10v2m2 -16v2m0 6v2m2 -10v2m1 -14v2m1 -8v2m2 0v2m8 -28v2m1 4v2m4 -18v2m4 -6v2m3 -2v2m1 -10v2m2 -4v2m0 144v2m1 -146v2" stroke="#00ff28"/><path d="M223.5 215v2m1 0v2m3 6v2m1 0v2m2 -2v4m3 4v2m4 8v2m0 4v2m1 -8v2m0 12v2m0 4v2m0 18v2m1 -32v2m0 10v2m0 4v2m0 4v2m0 4v2m0 10v2m0 8v2m0 8v2m1 -14v2m0 4v2m0 2v2m4 24v2m0 2v2m0 2v14m0 4v2m1 -32v14m0 2v2m0 2v2m0 2v4m0 2v4m0 2v2m1 -50v2m1 0v2m1 2v2m0 12v4m0 2v2m0 4v4m0 4v8m1 -38v2m0 10v12m0 4v12m1 -40v6m0 22v2m0 2v8m1 -50v2m1 2v6m1 2v8m0 12v2m0 4v4m0 2v6m1 -40v10m0 14v2m0 2v12m1 -40v2m0 2v6m0 12v10m0 2v6m1 -48v10m0 36v2m2 -60v2m1 6v2m0 2v8m0 4v2m1 -6v6m0 2v8m0 10v6m0 2v4m1 -44v6m0 2v4m1 -12v10m1 -4v2m0 2v2m0 2v8m0 12v12m1 -36v4m0 2v6m0 14v10m1 -36v8m0 2v2m0 2v2m0 2v2m0 6v10m1 -42v2m0 4v2m0 2v2m0 2v2m0 2v2m0 12v2m0 4v4m1 -50v2m0 2v4m1 -8v6m0 2v2m1 -2v2m0 2v4m0 2v6m0 8v4m0 6v2m0 2v4m1 -36v2m0 2v10m0 6v2m0 6v2m0 2v4m1 -38v4m0 2v4m0 2v4m0 2v2m0 10v8m1 -40v2m0 2v14m0 6v2m0 6v4m0 2v2m1 -34v12m0 4v4m0 8v6m1 -38v10m0 2v2m0 6v2m0 12v4m1 -48v2m0 2v6m1 -10v8m0 2v4m1 -12v2m0 4v4m0 2v6m0 2v2m0 6v2m0 2v2m0 6v6m1 -36v16m0 2v2m0 2v2m0 8v4m1 -42v2m0 4v10m0 10v4m0 8v2m1 -36v2m0 2v8m0 10v6m0 8v2m1 -40v4m0 2v4m0 2v4m0 8v2m0 8v6m1 -50v6m1 -8v12m1 0v2m0 2v6m0 2v2m0 12v2m0 6v4m1 -38v2m0 2v6m0 6v4m0 4v2m0 8v2m0 2v2m1 -40v18m0 2v2m0 12v4m1 -32v10m0 4v2m0 6v2m0 6v4m1 -40v4m0 2v4m0 2v2m0 2v2m0 6v2m0 2v2m0 6v4m1 -48v12m1 -16v2m0 2v6m1 6v2m0 2v8m0 6v2m0 12v4m1 -42v6m0 4v8m0 6v6m0 6v6m1 -36v4m0 2v4m0 2v4m0 16v4m1 -42v14m0 12v4m0 6v6m1 -40v2m0 2v6m0 4v2m0 18v2m0 2v2m1 -48v4m1 -4v6m1 4v12m0 10v2m0 6v4m0 2v2m1 -34v8m0 2v2m0 6v2m0 10v2m1 -38v6m0 2v4m0 6v2m0 2v2m0 8v2m0 2v4m1 -36v12m0 14v2m0 2v6m1 -38v6m0 2v4m0 2v2m0 14v2m0 2v4m1 -44v10m1 -10v4m0 2v2m1 -8v2m0 2v2m0 2v2m0 2v2m0 4v2m0 16v8m1 -38v12m0 20v6m1 -42v2m0 2v10m0 14v6m0 2v6m1 -38v4m0 2v2m0 14v2m0 2v4m0 2v6m1 -34v2m0 16v2m0 10v4m1 -42v2m0 2v4m0 20v14m1 -48v6m1 -8v2m0 2v2m0 2v2m1 14v4m0 6v2m0 4v2m0 2v6m1 -156v2m0 6v2m0 8v2m0 6v2m0 8v2m0 6v2m0 8v2m0 6v2m0 8v2m0 6v2m0 8v2m0 6v2m0 8v2m0 34v2m0 6v2m1 -40v2m0 6v10m0 4v2m0 8v6m0 2v2m1 -42v2m0 2v2m0 2v12m0 4v6m0 4v8m1 -42v2m0 4v14m0 8v2m0 2v4m0 2v4m1 -38v2m0 2v8m0 8v6m0 2v6m0 2v2m1 -34v10m0 8v16m1 -38v2m0 2v6m0 2v4m0 10v6m1 -42v6m1 -8v4m1 4v2m0 4v10m0 2v2m0 6v6m1 -30v16m1 -18v2m0 4v8m0 2v2m0 2v2m0 18v2m1 -40v2m0 4v8m0 2v2m1 -26v2m0 4v2m0 2v4m1 -10v2m0 2v6m1 -6v2m0 2v6m0 20v2m0 2v6m1 -44v2m0 4v2m0 22v4m0 2v6m1 -40v2m0 28v12m1 -48v2m0 26v10m0 2v4m1 -54v2m0 4v2m0 16v2m1 -32v4m0 6v2m1 -6v2m0 2v2m1 -24v2m2 -70v2m4 -14v2m1 0v2m1 -14v2m2 2v2m1 0v2m5 -12v2m0 140v2m1 -2v2m1 -2v2m19 -142v2m10 10v2m1 0v2m2 0v2m1 -4v2m1 2v2m2 -2v2m0 2v2m1 2v2m2 2v2m56 68v2m0 4v2m0 8v2m0 4v2m1 -18v4m0 8v2m1 -16v6m0 2v4m0 2v4m1 -24v4m0 4v4m0 2v4m0 2v2m0 6v2m1 -36v2m0 6v4m0 4v2m0 10v2m0 34v2m1 -54v2m0 4v4m0 6v2m1 -34v2m0 6v2m0 2v2m0 24v2m0 22v4m1 -54v2m0 4v2m0 4v4m1 -12v4m0 2v2m0 8v2m1 -26v2m0 4v4m0 18v2m1 -30v4m0 10v2m0 4v2m1 -18v4m0 2v8m1 -10v2m0 4v4m0 6v4m1 -26v2m0 24v2m1 -38v2m0 16v2m0 2v2m0 2v4m0 2v2m0 24v4m1 -50v10m0 2v2m0 6v2m0 36v2m1 -58v2m0 4v2m0 2v4m0 4v2m0 36v2m1 -62v2m0 8v4m0 34v2m1 -50v6m0 4v2m0 8v4m0 22v2m1 -54v2m0 2v2m0 4v2m0 4v2m0 10v2m0 12v2m1 -40v2m0 4v4m0 2v4m1 -8v2m0 2v2m1 -14v10m0 4v2m0 12v2m0 20v4m1 -52v2m0 2v4m0 6v4m0 2v4m0 10v2m0 16v2m1 -58v2m0 16v2m1 -30v2m0 6v2m0 10v4m0 6v2m0 48v2m1 -76v2m0 20v6m0 38v2m1 -62v4m0 6v12m0 12v2m1 -22v2m1 -16v6m0 2v8m0 20v2m1 -40v6m0 2v6m0 2v2m0 2v2m0 2v6m0 28v2m1 -42v2m0 26v2m1 -52v2m0 12v12m0 14v2m0 14v2m0 16v2m1 -72v4m0 4v2m0 4v4m0 2v2m1 -20v2m0 4v2m0 4v4m0 32v2m6 -104v2m1 -6v2m3 -4v2m1 -8v4m4 -6v2m2 -4v2m1 -6v2m7 -12v2m1 -2v2m1 -8v2m2 0v2m2 -12v2m1 -4v2m18 64v2m5 72v2m1 -2v2m1 -2v2m1 -2v2m1 -2v2m1 -2v2m1 -2v2m1 -2v2m1 -120v2m0 116v2m1 -126v2m0 122v2m1 -122v2m3 4v2m1 -2v2m1 2v2m5 0v2m0 4v4m1 -4v2m1 -4v4m1 4v2m1 8v2m1 -8v2m1 6v2m1 -2v2m0 2v2m1 4v2m1 0v2m3 20v2m1 -4v2m0 6v2m1 0v2m0 6v2m2 8v2m1 0v4m1 0v2m3 10v2m17 -86v2m0 14v2m0 4v2m0 10v2m0 6v2m9 14v10m1 -14v18m1 -22v26m1 -28v30m1 -30v30m1 -32v10m0 14v10m1 -36v10m0 18v10m1 -38v8m0 22v8m1 -40v8m0 26v8m1 -42v8m0 26v8m1 -42v6m0 30v6m1 -42v6m0 30v6m1 -44v8m0 30v8m1 -46v8m0 30v8m1 -46v6m0 34v6m1 -46v6m0 34v6m1 -46v6m0 34v6m1 -46v6m0 34v6m1 -46v8m0 30v8m1 -46v8m0 30v8m1 -44v6m0 30v6m1 -42v6m0 30v6m1 -42v8m0 26v8m1 -42v8m0 26v8m1 -40v8m0 22v8m1 -38v10m0 18v10m1 -36v10m0 14v10m1 -32v30m1 -30v30m1 -28v26m1 -22v18m1 -14v10m2 18v2m1 -6v2m2 -8v2m1 -6v2m1 -10v2m1 -6v2m0 8v2m1 -16v2m1 -10v2m0 4v2m0 2v4m1 -20v2m0 4v2m1 -12v2m1 -6v2m3 -12v2m0 2v2m1 -8v4m1 -12v2m0 4v2m2 -10v2m1 -12v2m2 -4v2m3 -14v2m1 -4v2m0 4v2m3 -6v2m1 -6v2m6 -20v2m2 -6v4m0 2v2m1 -4v2m1 -8v2m4 -8v2m0 142v2m1 -146v2m2 -6v4" stroke="#00ff18"/><path d="M220.5 209v2m1 -2v2m1 -2v2m0 6v2m1 -10v2m1 -2v2m0 8v2m1 -12v2m0 8v2m1 -12v2m1 -2v2m1 -2v2m0 14v2m1 -18v2m0 14v2m1 -18v2m1 -2v2m1 -2v2m1 -2v2m1 -2v2m0 26v2m1 -30v2m0 26v2m0 2v2m1 -34v2m0 28v2m1 -32v2m0 42v2m1 -46v2m0 40v4m1 -46v2m0 46v2m0 18v2m0 12v2m0 2v2m1 -88v2m0 98v2m0 2v2m0 4v2m1 -112v2m1 -2v2m1 -2v2m1 -2v2m0 120v2m1 -124v2m0 114v2m0 8v2m0 14v2m0 2v2m0 2v2m0 4v2m0 4v2m1 -164v2m0 116v2m1 -120v2m1 -2v2m0 122v2m0 14v2m0 2v4m0 4v4m1 -156v2m0 148v4m1 -154v2m0 136v16m0 2v2m1 -158v2m0 120v8m0 32v2m1 -164v2m0 124v6m0 24v2m0 4v2m1 -164v2m0 142v4m0 2v4m0 4v2m1 -160v2m0 134v2m0 6v6m0 2v2m1 -154v2m0 134v2m0 8v2m0 10v2m1 -160v2m0 128v8m0 14v2m0 4v2m1 -160v2m0 110v2m1 -114v2m1 -2v2m0 124v4m0 2v2m0 2v4m0 20v2m1 -162v2m0 140v4m0 12v2m1 -160v2m0 124v2m0 4v10m0 12v8m1 -162v2m0 128v12m0 14v4m0 2v4m1 -166v2m0 140v8m1 -150v2m0 140v4m0 2v2m0 4v2m1 -156v2m0 136v2m0 2v2m0 2v2m0 6v2m1 -156v2m0 134v2m0 2v2m0 2v6m0 8v4m1 -162v2m0 122v8m1 -132v2m0 120v2m0 2v4m0 2v2m1 -134v2m0 130v2m0 6v8m0 12v2m1 -162v2m0 142v6m0 10v2m1 -162v2m0 136v2m0 4v2m0 2v4m1 -152v2m0 142v6m0 2v2m0 8v2m1 -164v2m0 142v4m0 4v2m0 4v2m1 -160v2m0 136v2m0 2v2m0 6v4m0 6v2m1 -162v2m0 126v14m0 18v6m1 -166v2m0 124v2m0 4v8m0 2v2m0 8v2m0 10v2m1 -166v2m0 136v2m0 2v6m0 2v2m0 2v2m1 -156v2m0 144v2m0 2v2m0 2v2m0 4v2m1 -162v2m0 138v2m0 4v4m0 4v2m0 4v2m0 2v2m1 -166v2m0 138v2m0 4v4m0 10v4m1 -164v2m0 134v2m0 4v8m0 2v4m1 -156v2m0 120v6m1 -128v2m1 -2v2m0 134v2m0 2v12m0 12v2m1 -166v2m0 134v6m0 4v4m0 2v2m0 8v2m1 -164v2m0 142v2m0 2v6m0 10v2m1 -166v2m0 140v4m0 2v6m0 6v2m1 -162v2m0 134v2m0 2v2m0 2v6m0 2v2m1 -154v2m0 130v4m0 28v2m1 -166v2m0 122v12m1 -136v2m0 140v6m0 2v4m1 -154v2m0 140v6m0 6v2m1 -156v2m0 138v2m0 4v10m0 4v2m1 -162v2m0 136v12m1 -150v2m0 134v4m0 2v14m0 2v2m0 2v2m1 -164v2m0 120v10m1 -132v2m0 122v4m0 2v2m1 -132v2m0 138v10m0 12v2m1 -164v2m0 128v2m0 8v2m0 2v6m0 8v4m1 -162v2m0 136v6m0 2v2m0 2v2m0 4v2m0 2v2m1 -162v2m0 140v10m0 6v2m1 -160v2m0 132v2m0 4v2m0 2v4m0 8v2m0 2v2m1 -162v2m0 130v8m0 2v4m0 10v10m1 -166v2m0 124v2m0 2v10m0 14v12m1 -166v2m0 134v4m0 2v2m0 8v6m1 -158v2m0 138v2m0 8v10m1 -160v2m0 136v2m0 8v4m0 6v2m1 -160v2m0 134v2m0 10v2m0 2v2m0 4v2m1 -160v2m0 132v2m0 10v4m0 2v10m1 -162v2m0 130v2m0 10v8m1 -152v2m0 122v6m1 -130v2m0 120v2m0 2v4m1 -130v2m0 134v4m0 4v6m0 2v4m0 2v2m1 -24v2m0 6v2m1 -146v2m0 140v4m0 2v8m0 6v2m1 -164v2m0 142v4m0 6v4m1 -158v2m0 142v8m0 2v2m0 4v2m1 -162v2m0 138v8m0 6v2m0 6v2m1 -164v2m0 140v8m1 -150v2m0 136v2m0 6v8m0 6v4m1 -164v2m0 114v2m0 6v2m1 -126v2m0 118v6m1 -126v2m0 138v2m0 2v6m0 6v2m1 -158v2m0 140v12m1 -154v2m0 136v2m0 2v2m0 2v6m0 10v2m1 -164v2m0 138v2m0 2v6m0 10v6m1 -166v2m0 120v2m0 2v2m0 8v2m0 22v2m1 -162v2m0 130v2m0 28v2m1 -164v2m0 150v4m0 2v2m1 -160v2m0 128v2m0 18v2m0 4v2m0 6v2m1 -166v2m0 126v2m0 18v6m1 -154v2m0 118v2m0 20v4m1 -146v2m0 116v2m0 10v2m1 -132v2m0 106v2m0 12v2m1 -34v2m0 2v2m0 6v2m2 -104v2m0 20v2m1 -24v2m0 16v2m1 -20v2m0 14v2m1 -18v2m0 16v2m1 -20v2m1 -2v2m1 -2v2m0 8v2m2 -12v2m1 -2v2m7 -4v2m1 -6v2m0 4v2m1 -2v2m1 -8v2m0 4v2m1 -2v2m1 -2v2m1 -2v2m1 -2v2m1 -2v2m1 -2v2m1 -2v2m1 -2v2m1 -2v2m0 132v2m1 -136v2m0 132v2m1 -136v2m0 132v2m1 -136v2m1 -2v2m1 -2v2m1 -8v2m0 4v2m1 -8v2m0 4v2m1 -6v2m2 0v2m2 4v2m2 0v2m1 -8v2m1 -2v2m1 -2v2m1 -2v2m0 6v2m1 -10v2m0 6v4m1 -12v2m1 -2v2m1 -2v2m1 -2v2m1 -2v2m1 -2v2m1 -2v2m0 20v2m1 -24v2m0 24v2m1 -28v2m1 -2v2m0 26v2m1 -30v2m54 90v2m0 12v2m0 8v2m0 4v2m0 2v2m0 6v4m0 8v2m0 4v2m1 -52v2m0 14v4m0 4v2m0 34v4m1 -58v2m0 4v2m0 6v2m0 22v2m0 8v4m1 -58v2m0 10v2m0 6v2m0 12v2m0 8v2m0 12v2m1 -58v2m0 2v10m0 2v2m0 2v2m0 10v2m0 6v2m0 6v2m1 -50v2m0 10v2m0 2v2m0 4v2m0 6v2m0 6v6m0 6v2m1 -48v4m0 4v4m0 6v2m0 6v2m0 6v4m0 12v2m0 4v2m1 -70v2m0 2v4m0 2v4m0 4v2m0 2v2m0 6v2m0 30v2m1 -68v2m0 16v4m0 6v8m0 16v2m0 2v2m0 8v2m1 -52v2m0 14v4m0 16v6m0 10v2m1 -60v6m0 16v2m0 20v2m0 2v2m1 -38v2m0 10v2m0 18v2m0 12v2m1 -58v2m0 6v6m0 32v4m0 6v2m1 -58v4m0 2v4m0 12v2m0 20v4m1 -46v2m0 2v2m0 4v2m0 2v2m0 2v4m0 4v2m0 22v4m1 -52v2m0 2v6m0 4v2m0 8v2m0 10v2m0 8v2m0 2v2m0 4v2m1 -58v2m0 4v4m0 28v4m0 2v2m0 4v2m1 -56v2m0 4v4m0 6v2m0 2v2m0 6v4m0 18v4m0 6v2m1 -52v2m0 4v6m0 8v2m0 4v2m0 16v2m1 -46v4m0 4v2m0 18v2m0 6v4m0 4v2m1 -46v4m0 2v2m0 10v2m0 10v2m0 4v2m0 2v2m1 -44v6m0 2v2m0 2v2m0 32v2m0 2v2m1 -60v4m0 4v2m0 4v2m0 4v2m0 4v4m0 30v2m1 -52v2m0 16v2m0 10v2m0 4v4m1 -64v2m0 8v2m0 10v2m0 2v4m0 20v2m0 16v2m0 2v2m1 -58v2m0 6v2m0 6v2m0 18v2m0 10v2m1 -50v2m0 10v2m0 2v2m0 6v4m0 18v2m0 4v2m0 4v2m1 -68v2m0 16v4m0 20v2m0 2v2m0 4v2m0 2v4m0 4v4m1 -70v2m0 12v2m0 6v2m0 10v2m0 6v2m1 -30v2m0 4v6m0 18v4m0 6v2m0 2v6m0 2v2m1 -58v2m0 2v2m0 2v2m0 14v2m0 14v2m0 8v2m0 4v2m1 -60v2m0 2v2m0 2v6m0 12v2m0 8v2m0 16v2m1 -46v4m0 24v2m0 4v2m0 8v2m0 4v2m1 -64v4m0 8v2m0 2v2m0 6v4m0 12v4m0 4v6m0 4v2m0 2v2m1 -54v2m0 2v2m0 18v4m0 6v2m0 6v2m0 8v2m3 -166v2m1 -2v2m1 -2v2m1 -2v2m0 42v2m1 -46v2m0 38v2m1 -42v2m0 36v2m1 -40v2m1 -2v2m1 -2v2m0 30v2m1 -34v2m0 26v2m1 -30v2m0 26v2m1 -30v2m1 -2v2m1 -2v2m1 -2v2m0 20v2m1 -24v2m1 -2v2m1 -2v2m1 -2v2m0 16v2m1 -20v2m0 16v2m1 -20v2m0 12v2m1 -16v2m0 14v2m1 -18v2m0 12v2m1 -16v2m0 12v2m1 -16v2m0 8v2m3 -14v2m1 -2v2m1 -4v2m1 2v2m1 -2v2m1 -2v2m1 -2v2m1 -2v2m1 -2v2m1 -2v2m1 -2v2m1 -2v2m1 -2v2m1 -2v2m1 -2v2m1 -2v2m1 -2v2m1 -2v2m1 -2v2m1 -2v2m1 -2v2m1 -2v2m1 -2v2m1 -8v2m0 4v2m1 -8v2m0 4v2m1 -6v2m4 0v2m1 6v2m1 -8v2m1 -2v2m1 -2v2m1 -2v2m1 -2v2m0 14v2m1 -18v2m1 -2v2m1 -2v2m0 16v2m1 -20v2m0 20v2m1 -24v2m1 -2v2m0 18v2m0 4v2m1 -28v2m1 -2v2m1 -2v2m1 -2v2m1 -2v2m1 -2v2m1 -2v2m0 30v2m0 6v4m0 2v2m1 -48v2m0 38v2m1 -42v2m1 -2v2m0 42v2m0 2v2m1 -50v2m1 -2v2m1 -2v2m1 -2v2m0 66v2m0 4v2m1 -76v2m0 70v2m0 2v2m0 2v2m1 -82v2m1 -2v2m1 -2v2m0 96v2m1 -100v2m1 -2v2m1 -2v2m1 -2v2m1 -2v2m0 120v2m1 -124v2m1 -2v2m1 -2v2m1 -2v2m1 -2v2m1 -2v2m1 -2v2m1 -2v2m1 -2v2m1 -2v2m1 -2v2m1 -2v2m1 -2v2m1 -2v2m1 -2v2m1 -2v2m1 -2v2m2 30v2m2 -34v2m1 -2v2m1 -2v2m1 -2v2m1 -2v2m1 -2v2m1 -2v2m1 -2v2m1 -2v2m1 -2v2m1 -2v2m1 -2v2m1 -2v2m0 98v14m1 -114v2m0 96v18m1 -116v2m0 94v22m1 -118v2m0 92v26m1 -120v2m0 92v26m1 -120v2m0 90v30m1 -122v2m0 90v12m0 6v12m1 -122v2m0 90v10m0 10v10m1 -122v2m0 90v10m0 10v10m1 -122v2m0 88v10m0 14v10m1 -124v2m0 88v10m0 14v10m1 -124v2m0 88v10m0 14v10m1 -124v2m0 88v10m0 14v10m1 -124v2m0 90v10m0 10v10m1 -122v2m0 90v10m0 10v10m1 -122v2m0 90v12m0 6v12m1 -122v2m0 90v30m1 -122v2m0 92v26m1 -120v2m0 92v26m1 -120v2m0 94v22m1 -118v2m0 96v18m1 -116v2m0 98v14m1 -114v2m1 -2v2m1 -2v2m1 -2v2m1 -2v2m1 -2v2m1 -2v2m0 130v2m1 -134v2m1 -2v2m0 126v2m1 -130v2m1 -2v2m0 118v4m1 -124v2m0 108v4m1 -114v2m0 104v2m0 4v2m1 -114v2m1 -2v2m0 92v2m1 -96v2m0 88v2m1 -92v2m0 84v2m0 4v2m1 -94v2m0 84v2m1 -88v2m1 -2v2m0 72v2m1 -76v2m1 -2v2m1 -2v2m1 -2v2m0 52v2m1 -56v2m0 52v2m1 -56v2m0 50v2m1 -54v2m0 42v2m1 -46v2m0 38v2m1 -42v2m1 -2v2m0 34v2m1 -38v2m0 32v4m1 -38v2m1 -2v2m0 26v2m1 -30v2m1 -2v2m0 22v2m1 -26v2m1 -2v2m0 16v2m1 -20v2m0 14v4m0 4v2m1 -26v2m0 12v4m1 -18v2m1 -2v2m0 14v2m1 -18v2m1 -2v2m0 6v2m1 -10v2m1 -2v2m1 -2v2m1 -2v2m2 148v2m1 -2v2m1 -2v2m3 -152v2m1 -2v2m1 -2v2" stroke="#00ff08"/><path d="M223.5 217v2m3 2v2m1 0v2m2 2v2m3 4v2m7 24v2m6 66v2m1 10v10m0 18v2m0 2v4m1 -46v2m0 14v4m0 2v2m0 10v2m0 2v4m0 2v2m2 -30v2m2 -8v4m0 10v2m0 6v10m0 2v2m1 -34v2m0 8v4m0 4v6m0 2v2m0 4v2m1 -24v2m2 -6v2m1 -12v2m0 8v2m0 8v4m0 2v4m0 2v4m3 -30v2m0 4v4m0 8v8m0 2v4m2 -24v4m0 6v2m0 8v4m1 -24v6m0 6v2m0 4v2m2 -16v2m2 2v2m1 -20v10m0 6v2m0 8v2m0 2v4m1 -36v2m0 2v4m0 2v6m0 2v2m0 10v6m3 -14v2m3 4v2m1 -18v2m0 4v6m1 -14v2m0 2v8m0 8v4m1 -6v2m1 -2v2m4 -32v8m0 28v2m1 -40v4m0 2v2m0 6v2m0 22v2m4 -10v2m1 2v2m1 -32v2m0 4v20m0 6v2m1 -28v8m0 2v8m0 8v4m1 -6v2m2 -4v2m1 -2v2m2 -28v4m0 2v2m0 22v4m1 -38v2m0 2v8m0 22v4m1 -14v2m1 -2v2m0 2v2m1 -4v2m2 -8v4m0 2v2m1 -16v2m1 -2v4m4 2v2m1 -12v2m0 6v2m2 -16v2m0 8v2m0 8v16m1 -26v4m0 8v14m8 -22v2m0 18v2m1 -40v8m0 2v2m1 -12v6m0 2v4m0 4v2m2 10v2m0 6v4m2 -8v2m1 -28v4m0 2v6m0 14v2m0 2v4m1 -32v6m0 16v6m0 2v2m1 -30v4m1 -8v2m0 14v2m1 -24v2m0 2v2m1 8v2m1 -22v4m1 -14v2m0 2v6m1 -20v2m1 -102v2m2 18v2m1 -4v4m2 -6v2m2 -10v2m2 -4v2m1 -2v2m1 -8v2m4 -4v2m2 0v2m2 -6v2m18 -4v2m0 4v2m5 2v2m1 -6v2m16 28v2m54 86v2m0 4v2m0 6v2m0 20v2m0 6v4m1 -66v2m0 12v2m0 6v4m0 8v2m0 10v6m0 4v4m1 -40v2m0 2v4m0 6v2m0 6v2m0 10v2m0 4v2m0 2v2m1 -58v2m0 16v2m0 16v2m0 4v2m0 2v2m0 6v4m1 -40v2m0 18v4m0 6v8m1 -42v2m0 8v2m0 14v6m0 4v8m1 -70v2m0 6v4m0 12v4m0 22v2m0 12v4m1 -48v2m0 2v6m0 2v2m0 4v2m0 8v2m0 2v4m1 -46v2m0 8v2m0 10v2m0 2v2m0 2v2m0 4v2m0 2v2m0 8v2m0 2v6m1 -48v4m0 40v4m1 -46v2m0 4v2m0 16v2m0 2v2m0 2v2m0 6v6m1 -54v2m0 6v6m0 18v2m0 2v2m0 2v8m0 4v2m1 -44v2m0 2v2m0 14v4m0 8v2m0 8v2m1 -50v2m0 2v2m0 20v6m0 8v2m0 6v2m1 -44v2m0 12v2m0 10v2m0 4v2m0 8v2m1 -136v2m0 92v2m0 26v2m1 -34v8m0 14v4m0 4v2m0 8v4m1 -50v6m0 2v2m0 34v2m0 2v2m1 -56v2m0 22v2m0 18v6m0 2v2m0 2v2m1 -58v2m0 14v2m0 8v2m0 8v6m0 4v4m0 2v4m1 -60v2m0 12v2m0 2v4m0 8v2m0 6v2m0 4v2m0 2v2m0 2v6m0 2v2m1 -48v2m0 14v2m0 4v12m0 8v2m0 2v2m1 -76v2m0 18v2m0 2v4m0 16v2m0 4v2m0 6v2m0 2v2m1 -34v2m0 2v2m0 16v2m0 12v2m0 2v4m1 -50v2m0 4v4m0 8v2m0 8v2m0 4v6m0 2v2m1 -40v4m0 8v2m0 6v4m0 2v4m0 8v2m1 -50v2m0 6v2m0 2v2m0 16v8m0 2v4m0 4v2m0 2v2m1 -42v4m0 6v4m0 8v2m0 8v2m0 4v4m1 -46v2m0 2v2m0 6v2m0 14v2m0 4v2m0 4v6m0 2v2m1 -38v2m0 8v2m0 6v4m0 2v2m0 6v2m0 2v2m1 -40v4m0 14v2m0 6v2m0 4v4m0 2v2m1 -40v2m0 8v2m0 4v2m0 2v6m0 2v2m0 4v2m1 -44v2m0 6v2m0 8v2m0 8v2m0 2v4m0 2v2m0 2v2m1 -52v2m0 4v2m0 28v4m0 12v2m1 -50v2m0 2v2m0 6v2m0 12v2m0 6v6m0 4v2m0 2v2m4 -120v2m3 -8v2m2 -8v2m0 2v2m1 -8v2m5 -8v2m4 -6v2m1 -4v2m2 -4v2m5 -12v2m1 -4v6m4 -10v2m22 -6v2m1 2v2m1 -6v4m3 4v2m5 10v2m1 -6v2m1 4v2m1 -2v4m2 2v2m2 2v2m1 0v2m2 4v2m1 -2v2m1 -2v2m0 2v2m1 -2v2m1 -6v2m0 6v2m1 0v2m3 4v2m1 2v2m9 52v2m20 -112v2m1 -2v2m20 102v6m1 -8v10m1 -10v10m1 -12v14m1 -14v14m1 -14v14m1 -14v14m1 -12v10m1 -10v10m1 -8v6m14 18v2m1 -4v2m1 -6v4m2 -8v2m2 -12v2m1 -14v2m0 2v2m1 -6v4m1 -16v2m2 -6v2m2 -12v2m3 -16v2m1 -6v2m10 -24v2m2 -12v2m2 -4v4m1 -10v2m4 -4v2m5 -8v2m0 136v2m3 -148v2m2 -4v2" stroke="#0eff00"/><path d="M226.5 223v2m9 14v2m3 14v2m5 68v2m3 2v2m0 18v18m0 2v2m1 -28v2m0 4v2m0 2v10m0 2v2m0 4v2m2 -36v4m0 2v2m2 4v4m0 2v6m1 -18v2m0 4v2m0 4v4m0 10v2m1 -26v2m1 0v2m0 2v2m1 0v2m1 0v2m3 2v2m4 0v2m3 0v2m1 -14v6m0 8v2m0 2v2m1 -24v2m0 6v2m0 2v2m0 6v2m2 -8v2m3 0v2m2 -2v2m0 2v2m1 -6v2m0 2v2m3 -2v2m2 -4v2m1 -22v10m0 2v8m0 4v4m1 -34v2m0 2v6m0 2v10m0 2v2m0 4v4m5 -8v2m1 2v2m1 -18v2m0 14v2m4 -8v2m2 -20v2m0 2v14m0 4v4m1 -22v14m0 4v4m1 -6v2m2 -6v2m3 0v2m1 -12v2m1 -2v2m0 4v2m2 -12v2m1 -4v2m0 4v2m2 -12v2m1 6v8m1 -12v2m0 4v8m1 -18v2m1 -136v2m7 132v2m0 2v4m0 4v16m1 -30v2m0 4v4m0 2v8m0 2v4m1 0v4m2 -10v2m0 6v2m1 -12v2m1 -8v4m0 8v2m1 -18v4m0 10v2m3 -22v2m0 10v2m1 -18v2m0 4v4m1 -24v2m0 6v6m2 -34v4m6 -88v2m6 -10v2m5 -8v2m1 -4v2m1 -2v2m26 6v2m6 6v2m1 0v2m1 -2v2m1 0v2m3 6v2m1 -2v2m19 -28v2m0 14v2m0 20v2m1 -36v2m0 40v2m0 6v2m36 94v4m0 4v2m1 -22v2m0 14v4m0 4v2m1 -18v2m0 6v2m0 8v2m1 -46v4m0 12v2m0 16v2m0 2v4m1 -38v2m0 4v2m0 2v4m0 14v2m0 12v2m1 -42v2m0 2v2m0 26v2m1 -128v2m0 120v2m1 -12v2m0 2v2m0 4v2m0 6v2m1 -48v2m0 18v2m0 14v4m1 -40v2m0 16v4m0 6v2m0 6v4m1 -32v2m0 8v2m0 24v2m1 -28v2m0 16v2m0 10v2m1 -40v2m0 20v4m0 6v4m0 2v2m1 -46v2m0 4v2m0 6v2m0 18v4m0 2v2m1 -26v2m0 6v2m0 6v4m1 -34v2m0 4v2m0 8v2m0 4v2m0 2v6m0 8v4m1 -32v6m0 16v2m0 8v2m1 -40v2m0 14v2m0 2v2m0 4v2m0 6v2m1 -18v4m0 14v2m1 -44v2m0 42v2m1 -36v2m0 8v2m0 4v2m0 14v2m1 -54v2m0 10v2m0 6v4m0 18v2m1 -34v2m0 20v2m0 6v2m0 8v2m1 -40v2m0 16v2m0 4v2m0 10v2m0 4v2m1 -42v2m0 4v2m0 12v4m0 12v2m0 2v2m1 -34v2m0 14v6m0 4v4m1 -34v2m0 16v2m1 -10v2m1 -18v2m0 8v2m0 8v2m0 8v4m0 6v2m1 -20v2m1 -10v8m0 4v2m0 4v2m1 -38v4m0 22v2m0 6v2m0 2v2m0 4v4m1 -36v2m0 22v2m1 -20v2m0 18v4m1 -36v2m0 18v2m0 10v2m0 2v2m5 -120v2m3 -8v2m1 -4v2m7 -12v2m14 -30v2m32 8v2m1 0v2m2 8v2m5 6v2m3 4v2m4 4v2m0 2v2m2 0v2m1 2v2m1 -4v2m3 16v2m4 22v2m26 -90v2m45 116v2m1 -6v2m1 -6v2m1 -10v2m0 2v2m3 -20v4m1 -10v4m2 -14v2m3 -12v2m17 -46v2m2 -6v2m1 -4v2m3 -6v2m1 -4v2m1 -4v2m5 -6v2" stroke="#2aff00"/><path d="M245.5 333v2m2 6v2m1 -8v2m0 6v2m3 2v2m2 -2v2m3 0v2m2 -20v2m1 20v2m2 0v2m1 0v2m0 2v2m3 -4v4m2 -4v2m4 4v2m1 -4v2m2 -2v2m3 0v2m3 0v2m2 -14v2m1 4v2m6 2v2m15 -6v2m2 -12v2m0 4v2m4 -12v2m2 -10v2m9 10v4m1 6v2m0 4v2m3 -6v2m2 -2v2m2 -16v2m0 8v2m1 -18v4m1 6v2m1 -24v4m3 -126v2m5 14v2m8 -18v2m4 -2v2m3 -8v2m19 0v2m4 2v2m7 8v4m8 12v2m1 2v2m17 -38v4m0 2v62m1 -68v4m0 2v14m0 2v20m0 2v22m1 -66v8m0 2v40m0 2v6m0 2v2m0 6v2m36 64v2m1 -38v2m0 34v2m0 2v2m1 -6v2m0 2v2m0 14v2m1 -66v2m0 62v2m2 -14v2m1 -10v2m0 2v2m1 -2v2m0 28v4m1 -12v2m1 -40v2m0 18v2m0 20v2m3 -28v2m1 -20v2m1 -22v2m2 -66v2m0 108v2m1 -6v2m1 -26v2m0 12v2m1 -2v2m0 2v2m1 -6v2m2 30v2m0 2v2m1 -58v2m0 26v2m0 18v2m1 -50v2m0 30v2m0 14v2m1 -28v2m0 34v2m3 -26v2m1 -20v2m0 2v2m0 4v2m3 -14v2m1 2v2m0 8v2m1 -2v2m6 -94v2m8 -18v2m4 -6v2m6 -10v2m3 -8v2m29 -16v2m1 2v2m1 -4v2m4 10v2m0 2v2m6 8v2m5 6v2m3 6v2m4 4v2m11 62v2m73 -16v2m10 -46v2m7 -22v2m3 -10v2m0 2v2m1 -6v4m1 -4v2m3 -12v4m2 -6v2m3 -6v2m2 -8v2" stroke="#47ff00"/><path d="M221.5 213v2m1 0v2m14 24v2m8 82v2m1 4v2m1 4v2m1 -8v2m1 8v2m2 -2v2m1 0v2m1 2v2m1 0v2m2 -2v2m2 -14v2m1 -6v2m2 20v2m2 2v2m2 0v2m4 -2v2m17 4v2m1 -2v2m7 -4v2m1 -2v2m7 -6v4m1 -4v2m1 -2v2m4 -8v2m4 -16v2m3 -126v2m0 10v2m0 4v2m0 10v2m0 4v2m0 10v2m0 4v2m0 10v2m0 4v2m0 10v2m0 4v2m0 10v2m0 4v2m0 16v2m0 10v2m0 4v2m0 10v2m7 -4v2m2 0v2m1 -6v2m1 -4v2m2 -12v2m1 -6v4m0 4v2m1 -10v2m1 -4v6m1 -12v4m4 -34v2m39 -110v4m3 -2v2m34 -4v2m0 62v6m0 4v2m1 -14v12m1 -16v6m0 2v6m0 2v2m38 10v2m0 6v2m1 34v2m0 2v2m3 -44v2m0 22v2m3 12v2m1 -2v2m1 -2v2m4 -36v2m1 -6v2m1 48v2m1 -12v2m1 8v2m4 -4v2m1 -42v2m0 34v2m1 -12v2m2 20v2m1 -36v2m0 32v2m1 -36v2m3 10v2m1 4v2m21 -112v2m6 -10v2m5 -14v2m25 -2v2m2 -4v2m2 0v2m1 2v2m0 2v2m13 22v2m6 12v2m80 68v2m2 -14v2m21 -80v2m3 -8v2m7 -14v2m2 -6v2m5 -6v2" stroke="#63ff00"/><path d="M231.5 211v2m1 -2v2m1 -2v2m1 -2v2m1 -2v2m1 -2v2m1 -2v2m1 -2v2m1 -2v2m1 -2v2m1 -2v2m1 -2v2m1 -2v2m1 -2v2m1 -2v2m0 116v2m1 -120v2m0 118v2m0 2v2m1 -126v2m0 120v2m0 4v2m1 -130v2m1 -2v2m0 128v2m1 -132v2m0 130v4m1 -136v2m1 -2v2m1 -2v2m1 -2v2m0 136v2m1 -140v2m1 -2v2m0 140v2m1 -144v2m0 104v4m0 6v2m0 44v2m1 -164v2m0 114v2m0 6v2m0 6v2m1 -134v2m1 -2v2m0 146v2m1 -150v2m1 -2v2m1 -2v2m1 -2v2m0 146v2m1 -150v2m1 -2v2m1 -2v2m1 -2v2m1 -2v2m0 148v2m1 -152v2m1 -2v2m1 -2v2m0 152v2m1 -156v2m1 -2v2m0 152v2m1 -156v2m1 -2v2m0 152v2m1 -156v2m1 -2v2m0 152v2m1 -156v2m1 -2v2m0 152v2m1 -156v2m0 154v2m1 -158v2m1 -2v2m1 -2v2m0 154v2m1 -158v2m1 -2v2m1 -2v2m1 -2v2m0 154v2m1 -158v2m1 -2v2m1 -2v2m0 154v2m1 -158v2m0 154v2m1 -158v2m1 -2v2m1 -2v2m0 152v2m1 -156v2m1 -2v2m1 -2v2m1 -2v2m0 150v2m1 -154v2m1 -2v2m1 -2v2m1 -2v2m1 -2v2m1 -2v2m1 -2v2m1 -2v2m1 -2v2m1 -2v2m1 -2v2m1 -2v2m0 132v4m1 -138v2m0 132v2m1 -136v2m2 -2v2m1 -2v2m1 -2v2m1 -2v2m1 -2v2m1 -2v2m1 -2v2m1 -2v2m0 156v2m1 -160v2m1 -2v2m0 152v2m1 -156v2m1 -2v2m1 -2v2m0 146v4m1 -152v2m1 -2v2m0 138v2m0 4v2m2 -8v2m1 -18v4m0 4v2m3 -44v2m27 -92v2m1 -2v2m1 -2v2m1 -2v2m16 2v2m1 0v2m8 -8v2m1 -2v2m1 -2v2m1 -2v2m1 -2v2m1 -2v2m16 64v4m0 2v2m1 -4v2m0 2v2m1 -8v2m0 2v4m40 16v2m4 -6v2m1 -2v2m0 20v2m1 -24v2m0 20v2m1 -24v2m1 36v2m1 -2v2m0 10v2m0 20v2m1 -36v2m1 -40v2m0 48v2m1 -14v2m1 0v2m0 18v2m1 -2v2m1 -54v2m6 34v2m1 -40v2m0 26v2m3 10v2m8 -136v2m1 -2v2m1 -2v2m1 -2v2m1 -2v2m1 -2v2m1 -2v2m1 -2v2m1 -2v2m1 -2v2m1 -2v2m1 -2v2m1 -2v2m1 -2v2m1 -2v2m1 -2v2m5 12v2m5 -18v2m3 -8v2m9 6v2m1 -2v2m1 -2v2m1 -2v2m1 -2v2m1 -2v2m1 -2v2m1 -2v2m10 -8v2m6 16v2m1 -4v2m6 -12v2m1 -2v2m1 -2v2m1 -2v2m1 -2v2m1 -2v2m1 -2v2m1 -2v2m1 -2v2m1 -2v2m1 -2v2m1 -2v2m1 -2v2m1 -2v2m1 -2v2m1 -2v2m1 -2v2m1 -2v2m1 -2v2m1 -2v2m1 -2v2m1 -2v2m1 -2v2m1 -2v2m1 -2v2m1 -2v2m1 -2v2m1 -2v2m1 -2v2m1 -2v2m1 -2v2m1 -2v2m1 -2v2m1 -2v2m1 -2v2m18 -2v2m1 -2v2m1 -2v2m1 -2v2m1 -2v2m1 -2v2m1 -2v2m1 -2v2m1 -2v2m1 -2v2m1 -2v2m1 -2v2m1 -2v2m1 -2v2m1 -2v2m1 -2v2m1 -2v2m1 -2v2m1 -2v2m1 -2v2m1 -2v2m1 -2v2m1 -2v2m1 -2v2m1 -2v2m1 -2v2m1 -2v2m1 -2v2m1 -2v2m1 -2v2m1 -2v2m1 -2v2m1 -2v2m1 -2v2m1 -2v2m1 -2v2m1 -2v2m1 -2v2m1 -2v2m1 -2v2m1 -2v2m1 -2v2m1 -2v2m1 -2v2m1 -2v2m1 -2v2m1 -2v2m1 -2v2m1 -2v2m1 -2v2m1 -2v2m1 -2v2m1 -2v2m1 -2v2m1 -2v2m1 -2v2m1 -2v2m1 -2v2m1 -2v2m0 30v2m1 -34v2m0 30v2m1 -34v2m0 24v4m1 -30v2m0 24v2m1 -28v2m4 10v4" stroke="#80ff00"/><path d="M223.5 211v2m1 -2v2m1 -2v2m1 -2v2m1 -2v2m1 -2v2m1 -2v2m1 -2v2m14 114v2m7 16v2m6 -24v4m0 4v2m0 2v2m0 8v2m0 16v2m0 2v4m1 -52v2m9 42v2m4 -2v2m16 2v2m2 -2v2m3 -4v2m4 -4v4m1 -2v2m8 -10v2m1 -6v2m1 -4v2m3 -8v2m3 -6v2m8 30v2m1 -4v2m2 -6v2m2 -4v2m4 -156v2m1 -2v2m0 128v2m0 6v2m1 -140v2m0 128v2m1 -132v2m1 -2v2m2 -2v2m1 -2v2m1 -2v2m1 -2v2m1 -2v2m1 -2v2m1 -2v2m1 -2v2m1 -2v2m1 -2v2m4 -4v2m3 0v2m1 -2v2m1 -2v2m1 -2v2m1 -2v2m1 -2v2m1 -2v2m1 -2v2m1 -2v2m1 -2v2m5 -2v2m1 -2v2m1 -2v2m1 -2v2m1 -2v2m1 -2v2m1 -2v2m1 -2v2m1 -2v2m5 0v2m1 0v2m1 -6v2m1 -2v2m1 -2v2m1 -2v2m1 -2v2m1 -2v2m1 -2v2m1 -2v2m1 -2v2m19 0v2m0 8v2m1 -4v2m0 46v2m1 -66v2m0 46v2m1 30v4m1 -6v2m0 2v2m0 2v2m1 -6v4m21 -88v8m0 2v2m0 2v6m0 2v2m0 2v4m0 8v2m0 4v2m0 4v2m0 4v2m0 2v6m1 -62v6m0 2v2m0 2v4m0 10v6m0 2v8m0 10v2m0 10v2m1 -60v2m0 30v4m1 0v2m1 -28v2m1 0v2m0 28v2m13 46v2m1 -10v2m1 26v2m2 20v2m3 -22v2m1 -2v2m3 44v2m4 -28v2m1 -2v2m2 -58v2m0 74v2m1 -78v2m0 46v2m2 -2v2m3 -44v2m1 38v2m0 8v2m2 -16v2m2 16v2m12 -110v2m9 -32v2m1 -2v2m1 -2v2m1 -2v2m1 -2v2m1 -2v2m1 -2v2m1 -2v2m6 -2v2m1 -2v2m1 -2v2m1 -2v2m1 -2v2m1 -2v2m1 -2v2m1 -2v2m9 -2v2m1 -2v2m1 -2v2m1 -2v2m1 -2v2m1 -2v2m1 -2v2m1 -2v2m1 -2v2m1 -4v2m5 0v2m0 6v2m1 -10v2m1 -2v2m0 10v2m1 -14v2m1 -2v2m1 -2v2m1 -2v2m1 -2v2m36 -2v2m1 -2v2m1 -2v2m1 -2v2m1 -2v2m1 -2v2m1 -2v2m4 -2v2m1 -2v2m1 -2v2m1 -2v2m1 -2v2m1 -2v2m1 -2v2m59 28v2m4 -10v2m1 -24v2m1 -2v2m1 -2v2m1 -2v2m1 -2v2m1 -2v2m1 -2v2m1 -2v2m1 -2v2m8 -2v2m1 -2v2m1 -2v2m1 -2v2" stroke="#9cff00"/><path d="M221.5 211v2m1 -2v2m22 116v2m2 2v2m2 2v4m4 4v2m3 4v2m2 -24v2m0 8v2m0 2v2m0 12v2m1 -36v2m0 14v2m0 6v2m0 14v2m1 -8v2m2 -2v2m5 2v2m7 2v2m6 -16v2m0 12v2m1 -16v2m2 12v4m8 -6v2m1 -2v2m7 -2v2m5 -8v2m1 -2v2m2 -4v2m3 -10v2m1 0v2m2 -8v2m2 -134v2m9 158v2m2 -8v2m1 -6v2m2 -6v4m1 -6v2m1 -10v4m5 -140v2m15 -4v4m1 -4v4m6 124v4m1 -4v4m1 -4v4m1 -4v4m1 -4v4m14 -130v2m1 -4v2m4 0v2m28 -8v8m0 2v8m0 2v2m0 2v6m0 2v14m0 2v18m0 2v2m1 -72v4m0 2v12m0 6v4m0 4v34m0 2v2m0 2v2m1 -74v2m0 2v2m0 2v6m0 2v34m0 2v4m0 2v12m1 16v6m1 -6v2m0 2v4m1 -6v4m1 -88v2m0 2v2m0 2v4m0 10v12m0 2v4m0 4v6m0 4v2m0 2v2m1 -64v4m0 8v2m0 4v2m0 6v6m0 6v4m0 2v2m0 2v4m0 2v4m0 2v4m0 4v2m1 -70v4m0 4v2m0 2v4m0 2v4m0 2v18m0 2v6m0 2v2m0 2v8m18 -56v2m0 2v2m0 6v2m0 2v2m0 4v8m0 2v4m0 2v4m0 2v4m0 2v2m0 6v6m0 6v2m1 -80v4m0 6v2m0 2v2m0 4v10m0 6v2m0 8v10m0 2v10m0 2v2m0 2v4m1 -78v10m0 2v4m0 2v24m0 4v2m0 2v2m0 2v16m1 -70v18m0 2v14m0 2v10m0 2v18m1 -66v16m0 2v2m0 2v40m0 2v4m0 2v2m1 -72v8m0 2v12m0 4v8m0 2v16m0 4v2m0 2v6m0 4v2m0 2v2m5 -76v2m0 26v2m0 16v2m1 -32v2m0 18v4m0 2v2m0 2v4m1 -46v2m0 4v2m0 8v4m0 6v2m0 8v4m0 10v2m1 -42v2m0 2v2m0 10v2m0 4v2m0 10v4m0 6v4m0 4v2m1 -54v4m0 4v4m0 18v2m0 2v2m0 4v2m0 2v2m1 106v2m6 -8v2m1 -66v2m0 62v2m2 0v2m3 -66v2m1 -2v2m0 4v2m1 -2v2m0 40v2m1 -12v2m1 -2v2m3 -30v2m1 -6v2m0 10v2m0 24v2m1 -12v2m1 10v2m0 16v2m5 -34v2m1 -40v2m2 44v2m2 0v2m1 4v2m32 -140v2m26 -10v2m6 16v2m49 -12v2m69 28v2m1 -2v2m12 -32v2m3 -4v2m0 142v6m1 -6v6m1 -6v6m1 -148v2" stroke="#b8ff00"/><path d="M256.5 351v2m1 -20v2m0 6v2m0 4v2m1 -28v2m0 2v2m0 2v2m0 26v2m0 6v4m0 2v2m1 -18v2m4 2v2m11 -6v2m1 -2v2m8 8v4m7 -2v2m7 -6v2m15 -24v2m14 20v2m20 -154v2m52 -6v6m0 2v2m0 8v2m0 8v2m0 8v6m0 2v2m0 2v2m0 4v2m0 2v2m0 4v2m1 -70v2m0 4v2m0 2v2m0 8v8m0 2v2m0 16v2m0 2v4m0 4v2m1 -58v2m0 4v4m0 2v2m0 2v4m0 4v2m0 6v4m0 2v4m0 6v4m0 16v2m1 -76v2m0 8v6m0 2v6m0 2v2m0 2v2m0 4v2m0 2v4m0 4v2m0 4v2m0 14v2m1 -72v6m0 4v4m0 2v6m0 2v8m0 2v4m0 4v4m0 6v2m0 4v4m0 2v2m6 -66v2m0 22v2m0 6v2m0 14v2m0 18v2m0 2v10m1 -78v2m0 14v4m0 4v4m0 38v2m0 2v10m1 -78v2m0 6v2m0 40v2m0 12v14m1 8v6m1 -4v4m1 -6v4m1 -96v4m0 2v2m0 2v2m0 4v10m0 12v2m0 4v4m0 6v4m0 2v2m0 2v12m0 2v2m1 -76v8m0 2v4m0 2v6m0 6v6m0 4v2m0 2v2m0 4v2m0 4v2m0 4v4m0 2v6m0 2v4m1 -78v4m0 2v2m0 4v2m0 4v2m0 18v2m0 6v2m0 2v2m0 8v6m0 2v4m0 2v2m18 -8v6m0 2v4m1 -12v2m0 4v8m1 -70v2m0 30v2m0 2v2m0 16v4m0 2v6m1 -64v2m0 14v2m0 30v16m1 -66v2m0 44v2m0 4v2m0 2v14m1 -78v2m0 14v2m0 8v2m0 18v2m0 2v2m0 6v4m0 2v2m0 2v6m5 -80v20m0 2v4m0 2v8m0 2v6m0 2v28m1 -76v16m0 2v6m0 2v10m0 4v2m0 2v2m0 4v18m0 4v2m1 -74v4m0 2v4m0 2v8m0 4v6m0 2v8m0 4v2m0 2v6m0 2v12m0 2v2m0 2v4m1 -78v14m0 2v2m0 2v10m0 2v4m0 2v10m0 4v6m0 4v4m0 2v2m0 2v4m0 2v2m1 -80v14m0 4v4m0 4v16m0 4v2m0 2v4m0 2v2m0 2v14m1 72v2m1 -2v2m1 -56v2m0 50v4m1 -4v2m2 -2v2m1 -4v2m1 2v2m2 -2v2m1 -8v2m0 20v2m2 -18v2m3 -14v2m3 -28v2m0 6v2m1 -2v2m2 16v2m1 -4v2m1 -20v2m0 16v4m1 -22v2m0 16v2m3 8v2m0 10v2m1 -36v2m0 32v2m1 -36v2m2 8v2m2 -6v2m1 0v2m29 -124v2m28 0v2m4 2v2m2 2v2m50 -10v2m1 -2v2m76 8v2m8 -14v2m1 -2v2" stroke="#d4ff00"/><path d="M220.5 211v2m27 124v2m10 12v2m0 6v2m1 -44v2m0 26v2m3 12v2m6 0v2m1 0v2m7 0v2m11 -2v2m17 -8v2m6 -12v2m2 -8v2m3 -142v6m0 4v4m0 4v6m0 4v4m0 4v6m0 4v4m0 4v6m0 4v4m0 4v6m0 4v4m0 4v6m0 4v4m0 4v6m0 4v4m0 4v6m0 6v2m0 4v6m0 4v4m0 4v6m8 2v2m25 -164v2m5 132v2m1 -2v2m1 -2v2m21 -138v2m2 122v6m1 -6v6m1 -6v6m1 -6v6m1 -6v6m1 -6v6m1 -6v6m1 -6v6m14 -136v4m0 6v2m0 2v8m0 2v8m0 2v8m0 6v2m0 2v2m0 2v4m0 2v2m0 2v4m0 2v10m1 -82v2m0 2v4m0 2v2m0 2v4m0 2v2m0 8v2m0 2v16m0 2v2m0 4v4m0 2v14m0 2v2m1 -82v6m0 2v4m0 4v2m0 2v2m0 4v4m0 2v6m0 4v2m0 4v6m0 4v16m0 4v2m1 -78v8m0 6v2m0 6v2m0 2v2m0 2v4m0 2v2m0 4v4m0 2v4m0 2v14m0 2v6m0 2v2m1 -76v4m0 4v2m0 6v2m0 8v2m0 4v4m0 4v6m0 2v4m0 4v2m0 2v16m6 0v6m1 -4v4m1 -4v6m1 8v4m1 -4v4m1 -6v6m1 -26v2m0 2v6m1 -10v2m0 4v4m0 2v2m1 -20v2m0 4v2m0 2v8m18 -4v8m1 -6v6m0 2v2m1 -22v2m0 6v10m1 -10v10m1 -6v4m1 -8v8m5 -68v2m0 14v2m0 36v12m1 -64v2m0 42v4m0 2v16m1 -44v2m0 20v2m0 2v2m0 4v6m1 -14v2m0 4v2m0 2v4m0 4v2m1 -48v2m0 30v12m0 2v2m1 58v2m1 -50v2m0 34v2m0 6v2m0 2v2m1 -50v2m2 34v2m0 6v2m1 0v2m1 -12v2m0 8v2m2 -4v4m1 -12v2m0 6v2m1 -10v2m2 6v2m1 -6v2m0 24v2m1 -32v2m0 28v2m3 -34v2m0 18v2m1 -22v2m0 18v2m1 -22v2m0 8v2m2 -2v2m3 -44v2m1 -2v2m1 38v2m1 -12v2m3 -4v2m2 -4v2m1 -2v2m1 4v4m27 -130v2m1 -2v2m2 -4v2m25 130v2m1 -2v2m1 -2v2m1 -2v2m1 -134v2m0 130v2m1 -2v2m1 -2v2m1 -2v2m1 -2v2m1 -2v2" stroke="#f1ff00"/><path d="M257.5 365v2m1 -30v2m0 20v2m0 12v2m10 -10v2m1 -4v4m1 -4v4m14 -2v2m1 -2v2m18 -12v2m1 -2v2m0 2v2m1 -6v2m2 -4v2m1 -6v2m57 -10v2m1 -2v2m1 -2v2m9 -132v2m2 -2v2m20 72v6m1 -70v2m0 58v2m0 2v6m1 -12v2m0 2v10m1 -12v2m0 2v10m0 2v2m1 -14v12m7 -6v4m1 -2v6m1 6v2m1 -2v2m1 -2v2m0 2v2m1 -22v10m0 4v2m1 -16v2m0 2v6m1 -8v8m10 -88v2m0 10v2m0 14v2m1 -10v4m0 8v2m0 12v2m1 -20v2m1 -38v2m1 42v2m0 2v2m1 -36v2m1 -14v2m0 14v2m0 18v2m0 6v2m1 2v2m1 40v6m1 -6v2m0 2v2m0 2v2m1 -10v6m1 -6v6m1 -8v8m1 -8v6m1 -70v2m0 28v2m1 -56v2m0 10v2m2 6v2m0 2v2m1 60v8m1 -6v6m1 -12v8m0 2v2m1 -12v4m0 2v2m0 2v2m1 -10v2m0 2v2m0 2v2m1 40v2m5 -20v2m1 -120v36m0 4v4m0 4v4m0 4v4m0 4v4m0 4v4m0 4v4m0 4v4m0 26v2m2 16v2m2 -14v2m0 22v2m1 -26v2m0 22v2m1 -14v2m1 -2v2m0 6v2m1 -44v2m0 40v2m1 -44v2m4 14v2m1 14v2m5 -32v2m0 26v2m1 -2v2m0 6v2m1 -2v2m1 -12v2m0 8v2m3 -14v2m0 8v4m1 -4v2m3 -140v112m0 30v30m1 -172v112m0 28v32m59 -164v2m134 -2v2m1 -2v2" stroke="#fffa00"/><path d="M247.5 335v2m10 12v2m0 10v2m0 8v2m1 -22v2m0 8v2m2 -6v2m48 -8v2m1 -2v2m1 -2v2m67 -142v2m19 -2v2m0 48v2m1 -32v2m0 10v2m0 2v2m3 44v2m1 0v2m0 2v2m1 -4v4m0 2v2m6 -14v2m1 2v4m1 0v2m2 6v2m1 -2v2m1 -10v4m0 2v2m0 2v2m1 -12v6m1 -6v6m9 -102v34m0 2v4m0 4v26m0 2v4m0 2v2m0 8v2m1 -90v8m0 2v8m0 4v14m0 2v22m0 2v12m0 4v2m1 -80v12m0 2v14m0 4v8m0 2v12m0 4v18m0 2v4m0 2v2m0 2v2m1 -90v14m0 2v20m0 2v8m0 2v6m0 2v20m0 2v2m0 8v2m1 -88v70m0 2v2m0 2v6m1 -84v8m0 2v12m0 2v14m0 2v4m0 2v2m0 2v4m0 2v18m0 2v2m0 2v2m0 2v2m1 -86v14m0 2v38m0 2v8m0 4v10m0 4v4m1 -86v2m0 2v14m0 2v2m0 2v14m0 2v6m0 2v12m0 2v14m0 4v4m1 -84v50m0 4v4m0 2v8m0 2v4m1 24v6m0 2v2m1 -10v2m0 2v2m0 2v2m1 -10v6m0 2v2m1 -10v6m1 -6v6m0 2v2m1 -12v8m1 -104v4m0 2v8m0 2v10m0 6v24m0 2v24m0 2v2m0 2v2m1 -90v2m0 2v6m0 2v2m0 2v26m0 6v30m0 2v2m1 -82v8m0 2v18m0 2v12m0 2v8m0 2v20m0 6v2m0 6v2m1 -90v22m0 2v2m0 2v32m0 2v10m0 2v10m0 4v2m1 6v6m1 -6v2m0 2v2m1 -10v2m0 2v2m0 2v2m1 -10v2m0 2v8m0 2v2m1 -16v2m0 2v6m1 42v2m2 -10v2m1 -2v2m2 -2v2m2 -2v2m2 -22v2m1 -2v2m1 18v2m0 6v4m4 -148v36m0 4v4m0 4v4m0 4v4m0 4v4m0 4v4m0 4v4m0 6v2m1 -92v36m0 4v4m0 4v4m0 4v4m0 4v4m0 4v4m0 4v4m0 6v2m4 52v2m1 -4v2m4 -2v2m1 -40v2m3 24v2m4 6v2m1 -14v2m0 10v2m1 0v2m59 -132v2" stroke="#fff100"/><path d="M257.5 355v2m1 -16v2m0 6v2m55 -16v2m1 -2v2m1 -2v2m33 -126v2m31 -2v2m17 -8v6m0 2v38m0 2v6m0 4v20m0 4v4m1 -88v28m0 2v2m0 2v6m0 2v2m0 2v36m0 2v4m2 0v2m1 2v4m1 2v2m1 -2v2m0 2v2m6 8v2m1 -2v2m1 -16v2m1 14v2m0 2v2m1 -14v2m0 10v2m1 -2v2m1 -16v2m1 -4v8m1 -8v8m1 -108v8m0 2v2m0 6v2m0 2v2m0 8v8m0 2v2m0 2v4m0 4v14m0 4v2m1 -74v2m0 4v2m0 6v2m0 8v2m0 2v4m0 6v2m0 6v2m0 6v4m0 2v2m0 10v6m0 8v2m1 -88v8m0 2v2m0 8v8m0 2v4m0 2v4m0 2v2m0 8v2m0 2v2m0 4v6m0 6v4m1 -80v6m0 4v4m0 2v6m0 2v2m0 2v4m0 4v2m0 4v2m0 4v2m0 4v6m0 6v2m0 2v2m0 10v4m1 -86v2m0 2v8m0 2v6m0 6v2m0 10v2m0 10v2m0 2v2m0 2v2m0 2v2m0 2v2m0 14v2m1 -82v6m0 12v6m0 2v2m0 4v2m0 4v4m0 2v4m0 8v4m0 8v2m0 14v2m1 -88v4m0 2v8m0 2v4m0 4v2m0 2v2m0 2v4m0 8v6m0 2v12m0 2v2m0 2v4m1 -64v2m0 2v2m0 6v2m0 2v2m0 2v4m0 2v10m0 2v2m0 2v8m0 8v2m0 14v2m1 -52v2m0 4v4m0 26v2m0 4v2m0 2v8m0 2v8m0 2v2m1 -84v2m0 40v2m0 12v4m0 2v16m0 4v2m1 -90v2m0 42v2m0 18v2m0 4v2m0 2v2m0 2v2m0 2v4m0 2v2m1 -88v2m0 30v2m0 6v2m0 20v2m0 2v8m0 2v2m0 2v2m0 4v2m1 -30v2m0 2v2m0 6v14m1 -90v2m0 12v2m0 14v2m0 14v2m0 18v2m0 2v2m0 2v2m0 2v10m0 4v2m1 -48v2m0 8v4m0 10v4m0 4v12m0 2v2m1 -80v2m0 36v2m0 14v4m0 4v14m1 -46v2m0 4v2m0 8v2m0 4v18m0 2v2m0 4v2m1 2v2m0 2v2m0 2v2m1 -10v2m0 2v2m0 2v2m1 -10v2m0 2v2m0 2v2m1 -10v6m0 2v2m1 -10v2m0 2v2m0 2v2m1 -10v6m0 2v2m1 -110v2m0 8v2m0 12v4m0 50v2m0 2v2m0 2v8m0 2v2m1 -92v2m0 30v6m0 30v2m0 2v16m0 2v2m1 -94v2m0 18v2m0 12v2m0 8v2m0 20v6m0 2v6m0 2v8m0 2v2m1 -42v2m0 10v2m0 10v4m0 2v8m1 4v6m0 4v2m1 -16v2m0 2v8m0 2v2m1 -16v2m0 2v6m0 4v2m1 -6v2m0 2v2m1 -12v6m0 4v2m1 4v2m1 -2v2m2 -28v2m0 4v2m1 -2v2m6 44v4m5 -62v4m1 -4v4m2 54v2m4 -4v2m8 -4v2m2 2v2m1 -2v2m59 -138v2m141 -2v2" stroke="#ffe800"/><path d="M258.5 369v2m57 -32v2m81 -138v2m0 46v2m0 6v2m0 22v4m0 16v2m0 4v2m1 -76v2m0 48v2m0 22v2m1 -2v4m0 2v2m1 -2v2m1 -18v2m0 14v4m1 -16v2m0 16v2m1 -2v2m1 -114v2m0 4v4m0 2v8m0 2v2m0 2v10m0 4v2m0 2v2m0 2v4m0 2v18m0 2v6m0 4v2m1 -92v2m0 6v2m0 6v2m0 2v6m0 2v8m0 4v14m0 2v4m0 4v2m0 2v2m0 2v2m0 2v8m0 12v2m1 -92v4m0 4v2m0 2v4m0 4v2m0 14v2m0 2v2m0 2v2m0 4v2m0 6v6m0 2v8m0 6v2m1 -86v2m0 6v2m0 2v2m0 2v2m0 4v2m0 10v4m0 2v2m0 2v6m0 4v14m0 2v2m0 2v2m0 2v2m0 2v4m1 -76v6m0 8v8m0 2v2m0 2v2m0 10v6m0 2v4m0 2v2m0 2v2m0 10v2m1 24v4m0 2v2m1 -20v2m0 16v2m0 2v2m1 -20v2m0 10v4m0 2v2m1 -4v2m0 2v2m0 8v2m0 28v2m0 4v2m1 -52v2m0 2v2m0 8v2m0 10v2m0 16v2m0 4v2m1 -60v2m0 10v2m0 10v2m0 8v2m0 16v2m0 4v2m1 -60v2m1 0v2m0 12v2m1 -16v4m0 10v2m1 -126v2m0 8v2m0 2v6m0 2v2m0 2v8m0 8v2m0 2v2m0 4v4m0 14v4m0 2v22m0 2v2m0 4v2m1 -108v2m0 2v4m0 2v6m0 2v8m0 2v2m0 4v6m0 2v6m0 2v6m0 4v2m0 2v10m0 6v8m0 2v6m0 2v6m1 -104v2m0 8v2m0 2v8m0 8v2m0 4v2m0 4v2m0 2v8m0 2v2m0 2v4m0 6v6m0 4v18m0 2v4m1 -98v4m0 4v2m0 6v2m0 2v2m0 4v4m0 2v4m0 2v4m0 2v4m0 6v6m0 2v2m0 2v10m0 4v12m0 2v2m0 4v2m1 -106v2m0 8v2m0 6v6m0 2v10m0 2v10m0 2v2m0 2v2m0 2v2m0 2v2m0 2v14m0 2v14m0 2v4m0 2v2m1 -108v2m0 6v12m0 6v2m0 2v4m0 2v4m0 4v2m0 4v8m0 4v8m0 2v14m0 2v10m0 2v2m0 4v2m1 -104v2m0 8v2m0 4v4m0 2v2m0 2v2m0 4v8m0 6v2m0 12v2m0 2v2m0 4v22m0 4v2m0 4v2m1 -108v10m0 2v2m0 2v6m0 2v2m0 2v2m0 4v2m0 10v2m0 2v2m0 8v8m0 2v14m0 2v18m0 2v2m1 -10v2m0 2v6m0 4v2m1 -18v4m0 2v2m0 2v2m0 4v2m1 -22v2m0 4v2m0 2v2m0 2v4m0 2v2m1 -22v2m0 2v4m0 2v2m0 2v2m0 4v2m0 4v2m1 -22v6m0 2v4m0 2v2m1 -18v4m0 2v2m0 2v2m0 4v2m0 4v2m1 -22v2m0 2v2m0 2v4m0 2v2m1 -16v6m0 2v4m0 2v2m1 -22v2m0 2v4m0 2v2m0 2v2m0 4v2m1 -4v2m0 2v2m0 2v4m0 2v2m1 -16v2m0 2v2m0 2v4m0 2v2m1 -16v2m0 2v2m0 2v2m0 4v2m1 -16v2m0 2v2m0 2v2m0 4v2m1 -16v2m0 2v2m0 2v4m0 2v2m1 -16v2m0 2v2m0 2v2m0 4v2m1 -28v2m0 2v6m0 4v2m1 -16v2m0 2v2m0 2v2m0 4v2m1 -16v2m0 2v2m0 2v4m0 2v2m1 -16v6m0 2v2m0 4v2m1 -6v4m0 2v2m0 2v2m0 4v2m1 -16v2m0 2v2m0 2v2m0 4v2m1 -18v4m0 2v2m0 2v2m0 4v2m1 -22v2m0 4v2m0 2v2m0 2v2m0 4v2m1 -18v4m0 2v2m0 2v2m0 4v2m4 20v4m1 -4v4m6 -8v2m1 -2v2m8 -42v2m1 -2v2m0 14v2m1 40v2m1 -2v2m2 -20v2m3 -54v2m1 -2v2m1 48v2m7 -4v2m27 -132v2m29 -4v2" stroke="#ffde00"/><path d="M258.5 353v2m32 10v2m1 -2v2m58 -156v2m47 88v2m0 2v4m0 18v2m1 -24v4m0 2v2m0 14v2m1 -16v2m0 12v4m0 26v2m0 4v2m0 4v2m1 -60v4m0 2v2m0 10v2m0 14v2m0 10v2m0 4v2m0 4v2m1 -52v2m0 12v2m0 10v2m0 10v2m0 4v2m0 4v2m1 -54v4m0 12v2m0 10v2m0 10v2m0 4v2m0 4v2m1 -64v2m0 14v2m0 8v4m0 8v2m0 10v2m0 4v2m0 4v2m1 -168v6m0 2v4m0 4v2m0 8v2m0 2v2m0 12v2m0 2v2m0 2v2m0 4v2m0 18v2m0 6v4m0 2v12m0 2v2m1 -106v6m0 2v6m0 2v2m0 6v2m0 8v4m0 14v2m0 4v4m0 2v2m0 2v2m0 2v2m0 8v12m0 4v4m0 2v2m1 -108v6m0 4v4m0 2v2m0 4v4m0 2v14m0 2v2m0 2v2m0 2v4m0 2v6m0 6v2m0 8v6m0 14v4m0 2v2m1 -108v2m0 2v6m0 2v2m0 2v2m0 2v4m0 2v10m0 4v2m0 2v2m0 6v4m0 14v2m0 2v2m0 2v2m0 2v2m0 22v2m0 4v2m1 -114v12m0 6v8m0 8v2m0 2v2m0 2v10m0 6v2m0 4v2m0 2v2m0 2v10m0 2v4m0 18v2m1 -18v4m0 12v2m0 8v2m0 8v2m0 8v4m0 8v2m0 10v4m0 2v4m1 -60v2m0 4v2m0 20v2m0 8v2m0 10v4m0 2v4m1 -54v2m0 12v2m0 6v2m0 8v2m0 10v4m0 2v4m1 -66v2m0 6v2m0 26v4m0 6v2m0 10v4m0 2v4m1 -58v2m0 6v2m0 8v2m0 6v2m0 8v4m0 8v4m0 2v4m1 -56v2m0 4v4m0 4v2m0 12v2m0 4v6m0 6v4m0 2v4m1 -54v8m0 16v2m0 10v2m0 4v2m0 4v4m1 -50v4m0 18v2m0 10v2m0 10v2m1 -46v2m0 2v2m0 8v2m0 6v2m0 8v2m0 10v4m1 -72v2m0 2v4m0 2v2m0 2v2m1 -18v2m0 6v6m0 2v4m1 -18v2m0 4v6m0 2v4m1 -18v2m0 2v4m0 2v2m0 2v4m1 -18v2m0 4v2m0 2v2m0 2v4m0 2v2m0 10v2m1 -34v2m0 2v4m0 2v2m0 2v2m0 4v2m0 10v2m1 -36v4m0 2v4m0 2v2m0 2v4m0 2v2m1 -16v2m0 2v2m0 2v4m0 2v2m1 -12v4m0 2v2m0 2v4m0 8v2m1 -28v2m0 2v4m0 2v2m0 2v4m1 -18v2m0 4v2m0 2v2m0 2v4m0 2v2m1 -22v2m0 2v4m0 2v2m0 4v2m0 2v2m1 -22v2m0 4v2m0 2v2m0 2v4m0 2v2m1 -22v2m0 2v4m0 2v2m0 4v2m0 2v2m1 -22v2m0 4v2m0 2v2m0 2v4m0 2v2m1 -22v2m0 4v2m0 2v2m0 2v4m0 2v2m0 10v2m1 -34v2m0 2v4m0 2v2m0 2v4m0 2v2m0 10v2m1 -22v2m0 4v2m0 2v2m0 8v4m0 14v2m0 4v4m1 -48v2m0 4v2m0 2v2m0 8v4m0 14v2m0 4v4m1 -48v2m0 2v4m0 2v2m0 8v4m0 14v2m0 6v2m1 -48v2m0 2v4m0 2v2m0 2v2m0 4v4m0 14v2m1 -40v2m0 4v2m0 2v2m0 2v2m0 4v4m0 14v2m0 6v2m1 -48v2m0 2v4m0 2v2m0 2v2m0 4v4m0 14v2m0 6v2m1 -56v4m0 2v2m0 2v4m0 2v2m0 4v2m1 -28v2m0 2v4m0 2v2m0 2v4m0 2v2m0 4v2m1 -28v2m0 4v2m0 2v2m0 2v4m0 2v2m0 4v2m1 -28v2m0 2v4m0 2v2m0 2v4m0 2v2m0 4v2m1 -16v2m0 2v2m0 4v2m0 2v2m0 16v2m0 4v2m1 -40v2m0 2v2m0 4v2m0 2v2m0 16v2m0 4v2m1 -40v2m0 2v4m0 2v2m0 2v4m0 14v2m1 -34v2m0 2v2m0 4v2m0 2v4m0 14v2m1 -34v2m0 2v4m0 2v2m0 2v4m0 8v2m0 4v2m1 -34v2m1 -2v2m5 44v2m1 -164v96m0 66v2m1 -164v96m1 -96v96m1 -96v96m1 -96v96m0 44v2m1 0v2m1 -2v2m2 0v2m2 -2v2m1 -36v2m1 -2v2m212 -104v2" stroke="#ffd500"/><path d="M274.5 353v2m1 -2v2m4 -2v2m1 -2v2m33 -16v2m83 -50v2m0 4v4m0 10v2m0 10v4m0 12v4m0 8v4m0 2v4m0 2v4m0 2v4m1 -60v2m0 10v2m0 2v2m0 8v4m0 8v4m0 2v4m0 2v4m0 2v4m1 -66v2m0 8v2m0 12v2m0 6v6m0 6v6m0 2v4m0 2v4m0 2v4m1 -82v2m0 32v2m0 2v4m0 6v4m0 8v4m0 2v4m0 2v4m0 2v4m1 -54v2m0 6v4m0 10v2m0 8v4m0 2v4m0 2v4m0 2v4m1 -70v2m0 8v2m0 14v2m0 2v2m0 10v2m0 6v2m0 2v4m0 2v4m0 2v4m1 -56v2m0 26v2m0 10v4m0 2v4m0 2v4m1 -130v2m0 60v2m0 12v4m0 32v2m0 4v2m0 4v2m1 -70v2m0 8v2m0 10v2m1 -34v2m0 4v4m0 6v2m0 2v2m0 14v2m0 10v2m0 28v2m1 -68v6m0 2v2m0 14v2m0 40v2m1 -64v2m0 2v8m0 10v2m0 32v2m0 4v2m1 -40v2m0 20v2m0 4v4m0 4v2m0 4v2m1 -64v2m0 16v6m0 4v2m0 2v2m0 8v2m0 6v2m0 4v2m0 4v2m1 -70v2m0 16v2m0 6v2m0 10v2m0 8v2m0 6v2m0 4v2m0 4v2m1 -40v2m0 4v2m0 8v2m0 2v2m0 4v2m2 -20v2m1 -32v2m0 20v4m0 8v2m0 6v2m0 8v4m0 4v2m1 -60v2m0 12v2m0 6v2m0 8v2m0 6v2m0 6v6m0 2v4m1 -52v2m0 12v2m0 6v2m0 18v4m0 4v2m1 -62v2m0 2v2m0 8v4m0 8v2m0 6v2m0 8v2m0 10v4m1 -60v2m0 12v4m0 8v2m0 16v2m0 10v4m1 -60v2m0 4v2m0 6v4m0 8v2m0 16v2m0 10v2m1 -58v2m0 4v4m0 6v2m0 2v2m0 16v2m0 4v4m0 8v4m1 -60v2m0 4v2m0 8v2m0 20v2m0 16v2m1 -58v2m0 2v4m0 2v2m0 26v2m0 16v4m1 -60v2m0 4v2m0 2v2m0 8v2m0 16v2m0 16v2m1 -58v2m0 4v2m0 2v2m0 8v4m0 14v2m0 16v2m1 -52v2m0 4v2m0 8v2m0 8v2m0 4v4m0 8v2m0 4v4m1 -54v2m0 4v4m0 4v4m0 8v2m0 4v4m0 8v2m0 4v4m1 -54v2m0 4v2m0 6v4m0 8v2m0 6v2m0 8v2m0 4v4m1 -54v2m0 4v2m0 8v2m0 8v2m0 6v2m0 8v2m0 4v4m1 -54v2m0 4v2m0 8v2m0 2v2m0 4v2m0 6v2m0 8v2m0 6v2m1 -54v2m0 4v2m0 2v2m0 8v2m0 22v2m0 6v2m1 -54v2m0 4v2m0 2v2m0 8v2m0 6v2m0 14v2m0 6v2m1 -54v2m0 4v2m0 2v2m0 16v2m0 14v2m0 6v2m1 -54v2m0 4v2m0 2v2m0 16v2m0 8v2m0 4v4m1 -36v2m0 14v2m0 6v2m0 14v4m1 -44v2m0 14v4m0 4v2m0 14v4m1 -44v4m0 14v2m0 12v2m0 8v2m1 -44v2m0 16v2m0 12v4m0 6v2m1 -44v2m0 16v2m0 22v2m1 -44v2m0 10v2m0 4v2m0 22v2m1 -56v2m0 4v2m0 2v4m0 8v2m0 14v2m0 6v2m1 -48v2m0 4v2m0 2v4m0 8v2m0 8v2m0 4v2m0 6v2m1 -48v2m0 4v2m0 2v4m0 8v2m0 8v2m0 4v2m0 6v2m1 -48v2m0 4v2m0 2v4m0 2v2m0 4v2m0 8v2m0 4v4m0 4v2m1 -42v2m0 4v2m0 2v2m0 4v4m0 14v2m0 4v4m0 4v2m1 -50v2m0 4v2m0 2v2m0 4v4m0 14v2m0 4v4m1 -38v2m0 8v6m0 10v4m0 4v4m1 -44v2m0 4v2m0 8v6m0 10v4m0 4v4m1 -38v2m0 8v4m0 12v4m0 6v2m1 -2v2m9 -6v2m1 -2v2m2 -22v2m1 -36v2m1 -2v2m2 36v2m5 -58v2m1 -2v2m1 52v2m41 -136v2m1 120v4m1 -4v4m1 -4v4m1 -4v4" stroke="#ffcc00"/><path d="M396.5 293v4m0 32v2m0 6v2m0 16v2m0 4v2m0 4v2m0 4v2m1 -72v2m0 10v2m0 26v2m0 10v2m0 4v2m0 4v2m0 4v2m1 -84v2m0 32v2m0 18v2m1 4v2m1 -52v2m0 10v2m0 20v2m1 6v2m0 8v2m1 -24v2m0 4v2m0 16v2m1 -24v4m0 8v4m0 10v2m0 4v2m0 4v4m1 -68v2m0 16v4m0 6v2m0 2v2m0 6v2m0 8v2m0 2v6m0 2v4m1 -80v4m0 4v2m0 10v4m0 8v2m0 20v2m0 2v2m0 4v4m0 2v4m0 4v2m1 -60v2m0 2v2m0 10v2m0 8v2m0 10v2m0 6v6m0 6v2m1 -82v2m0 34v2m0 10v4m0 8v2m0 6v4m0 2v4m0 2v2m1 -52v2m0 4v2m0 14v2m0 4v2m1 -50v2m0 56v2m1 -48v2m0 30v2m0 8v2m1 -32v2m0 4v2m1 24v2m0 2v2m1 -26v2m1 14v2m1 -34v2m0 12v2m1 -20v2m0 30v2m0 4v2m0 2v2m0 2v2m1 -40v2m0 32v2m0 4v4m0 4v2m1 -56v2m0 10v2m0 14v4m0 8v2m0 4v4m0 4v2m1 -44v4m0 6v2m0 4v6m0 6v2m0 6v2m0 2v4m1 -48v2m0 2v2m0 6v4m0 6v2m0 16v2m0 4v2m1 -52v2m0 6v2m0 8v2m0 6v2m0 8v2m0 6v2m0 2v4m1 -46v4m0 2v2m0 4v4m0 14v4m0 10v2m1 -44v2m0 2v2m0 6v2m0 8v2m0 4v4m0 8v4m1 -50v2m0 4v2m0 10v2m0 8v2m0 4v4m0 8v4m1 -38v2m0 4v2m0 16v2m0 10v2m1 -38v2m0 4v2m0 16v2m0 10v2m1 -38v2m0 22v2m0 10v2m1 -38v4m0 14v2m0 4v2m0 10v2m1 -46v2m0 6v2m0 8v2m0 6v2m0 4v2m0 6v2m0 2v2m1 -40v4m0 6v4m0 4v4m0 8v2m0 6v2m1 -38v2m0 6v2m0 6v6m0 6v2m0 6v2m1 -44v2m0 4v2m0 2v2m0 12v4m0 6v2m0 6v2m1 -44v2m0 4v2m0 2v2m0 12v2m0 14v4m1 -38v2m0 10v2m1 -18v2m1 20v2m0 14v2m1 -18v2m0 10v2m0 2v2m1 -30v2m0 10v2m0 2v2m0 2v2m0 2v2m1 -18v2m0 6v2m0 6v2m1 -30v2m0 2v2m0 4v4m0 6v2m0 6v2m0 4v2m1 -40v2m0 2v2m0 2v2m0 4v2m0 8v2m0 6v2m0 4v2m1 -40v2m0 6v2m0 14v2m0 6v2m0 4v2m1 -32v2m0 22v2m0 4v2m1 -30v2m1 -2v2m0 26v2m1 -2v2m1 -6v2m0 2v2m1 -10v2m0 2v2m0 2v2m1 -22v2m1 -2v2m2 -58v2m1 -2v2m3 48v2m5 -50v2m1 -2v2m22 40v2m197 -132v2" stroke="#ffc200"/><path d="M258.5 355v2m26 6v2m1 -2v2m1 -2v2m28 -26v2m82 -20v2m0 26v2m1 -28v2m0 6v2m1 0v2m1 -38v2m0 10v2m0 8v2m1 20v2m0 4v2m1 -26v2m1 -16v2m0 6v2m0 24v2m0 4v2m1 -40v2m0 12v2m0 10v2m0 10v2m0 4v2m0 4v2m0 4v2m1 -56v2m0 6v2m0 10v2m0 2v2m0 6v2m0 2v2m0 8v2m0 6v2m0 4v2m1 -52v2m0 10v4m0 10v2m0 10v2m0 4v2m0 4v2m1 -84v2m0 8v2m0 34v2m0 2v2m0 4v4m0 6v2m0 6v4m0 4v2m1 -70v2m0 30v2m0 10v2m0 22v2m1 -78v2m0 8v2m0 24v2m1 14v2m0 4v2m1 -18v2m2 -30v2m0 14v2m0 12v2m0 4v2m0 2v2m1 -36v2m1 24v2m1 -6v2m0 8v2m2 -20v2m0 4v2m0 10v2m0 4v2m1 -32v2m0 14v2m0 8v2m1 -32v2m0 42v2m2 -24v2m0 12v2m0 2v2m1 -14v2m0 2v2m0 12v2m1 -28v2m0 6v2m0 16v2m1 -24v2m0 16v2m1 -6v2m1 -6v2m1 -6v2m0 2v2m1 -28v2m0 2v2m0 12v2m1 16v2m1 -10v2m0 2v2m0 6v2m1 -40v2m0 2v2m1 16v2m1 -6v2m1 -18v2m1 2v2m1 4v2m0 2v2m0 18v2m1 -26v2m0 14v2m1 -10v2m0 18v2m1 -38v2m0 18v2m0 6v2m0 6v2m1 -38v2m2 2v2m0 8v2m1 -6v2m0 2v2m1 -2v2m1 -2v2m0 18v2m1 -2v2m9 -24v2m29 -34v2m0 22v2m1 -26v2m0 22v2" stroke="#ffb900"/><path d="M396.5 313v2m0 28v2m1 -54v2m0 8v2m0 34v2m0 10v2m1 -46v2m1 -12v2m0 42v2m1 -38v2m1 24v2m1 -6v2m1 -8v2m1 30v2m1 -12v2m1 -18v2m1 -8v2m0 10v2m0 20v2m0 2v2m1 -60v2m1 8v2m0 12v2m1 4v2m0 4v2m1 -28v2m2 50v2m1 -34v2m1 28v2m1 -26v2m1 -14v2m0 16v2m0 2v2m0 16v2m1 -32v2m0 20v2m1 4v2m1 -16v2m0 12v2m0 2v2m1 -32v2m0 2v2m1 16v2m1 -34v2m0 18v2m1 -10v2m0 28v2m1 -42v2m0 2v2m0 22v2m0 10v2m1 -10v2m1 -22v2m0 2v2m0 2v2m1 16v2m2 -26v2m1 -2v2m0 18v2m0 6v2m1 -36v2m0 8v2m0 2v2m2 16v2m1 -26v2m0 22v2m1 -32v2m0 20v2m1 -14v2m0 2v2m3 10v2m1 -2v2m1 -20v2m2 22v2m2 -22v2m1 -14v2m0 14v2m0 6v2m1 -26v2m0 14v2m0 6v2m95 -152v2" stroke="#ffab00"/><path d="M397.5 299v2m2 46v2m1 -22v2m0 22v2m1 -46v2m0 28v2m0 2v2m1 10v2m1 -16v2m1 14v2m1 -40v2m0 10v2m0 14v2m1 -50v2m1 48v2m1 -12v2m1 -36v2m0 2v2m0 18v2m0 16v2m1 12v2m1 -14v2m0 8v2m1 -44v2m0 14v2m0 4v2m1 -26v4m0 34v2m1 -38v2m0 2v2m0 12v2m0 4v2m0 8v2m1 2v2m1 -24v2m1 -14v2m1 16v2m1 -14v2m1 16v2m1 -18v2m0 24v2m0 10v2m2 -38v2m0 32v2m1 -24v2m0 6v2m2 -20v2m0 6v2m1 18v2m1 -10v2m1 -20v2m0 22v2m3 2v2m0 6v2m1 -38v2m0 18v2m1 4v2m1 -2v2m1 -10v2m1 -16v2m1 -2v2m0 8v2m2 6v2m0 14v2m1 -4v2m1 -2v2m1 -32v2m0 28v2m1 -32v2m1 -2v2m0 12v2m1 -18v2m0 14v2m0 6v2m1 -14v2m95 -140v2" stroke="#ff9d00"/><path d="M396.5 335v2m0 10v2m1 -4v2m2 -40v2m0 12v2m0 2v2m0 8v2m1 -26v2m0 24v2m1 10v2m2 -24v2m1 -14v2m0 24v2m1 -22v2m1 -24v2m0 34v2m0 16v2m1 -52v2m0 20v2m0 16v2m1 -44v2m0 2v2m0 50v2m2 -52v2m0 2v2m0 36v2m1 -40v2m0 26v2m1 -28v2m1 44v2m1 -2v2m1 -44v2m0 24v2m1 6v2m1 -2v2m2 2v2m1 -34v2m0 10v2m0 16v2m2 -16v2m0 22v2m1 -8v2m1 -32v4m0 26v2m1 -12v2m1 -20v2m0 16v2m0 18v2m1 -40v2m0 34v2m2 -36v2m1 -2v4m1 14v2m1 16v2m1 -34v2m0 32v2m1 -36v2m0 16v2m0 6v2m0 6v2m1 -20v2m2 -18v2m0 32v2m1 -36v2m1 32v2m1 -26v2m1 -2v2m0 8v2m0 14v2m1 -18v2m0 14v2m1 -2v2m1 -36v2m0 14v2m0 6v2m0 8v2m1 -36v2m0 22v2m1 -24v2m1 -2v2m1 -2v2m0 8v2" stroke="#ff8f00"/><path d="M257.5 353v2m139 -40v2m0 14v2m1 -36v2m0 18v2m0 14v2m1 -36v2m0 22v2m0 12v2m0 10v2m1 -52v2m0 48v2m1 -12v2m1 -32v2m0 40v2m1 -42v2m0 16v2m0 8v2m0 10v2m1 -36v2m0 12v2m0 10v2m0 6v2m1 -24v2m1 22v2m1 -60v2m0 26v2m0 6v2m0 10v2m1 -50v2m0 2v2m0 54v2m1 -54v2m0 18v2m0 20v4m0 6v2m1 -52v2m0 40v2m0 8v2m1 -50v2m0 14v2m0 30v2m1 -46v2m0 12v2m0 8v2m0 20v2m2 -32v2m1 30v2m1 -32v2m1 -12v2m0 18v2m0 10v2m1 6v2m1 -40v2m0 20v2m0 14v4m1 -42v2m0 12v2m0 4v2m2 -20v2m0 20v2m0 14v2m1 -40v4m0 16v2m0 18v2m1 -40v2m0 8v2m2 0v2m1 24v2m1 -36v2m0 34v2m1 -26v2m0 12v2m1 -16v2m0 6v2m1 14v2m3 -24v2m0 14v2m0 4v2m1 -26v2m1 24v2m1 -36v2m0 32v2m2 -2v2m1 -34v2m0 6v4m1 20v2m1 -24v2m0 12v2m1 0v2m1 -4v4m1 -2v2m1 -2v2m0 6v2m2 -2v2m1 -10v2" stroke="#ff8100"/><path d="M396.5 319v2m0 24v2m1 -26v2m1 -4v4m0 24v2m2 -44v2m0 16v2m0 24v2m1 -38v2m0 24v2m1 -26v2m1 -4v2m0 38v2m2 0v2m1 -38v2m0 24v2m0 8v2m1 -60v2m0 2v2m0 18v2m0 10v2m1 -10v2m1 8v4m1 -12v2m0 8v2m0 8v2m1 -20v2m0 18v2m1 8v2m1 -20v2m1 -26v2m1 14v2m0 6v2m0 18v2m1 -44v2m1 0v2m0 12v2m0 16v2m1 -34v2m2 2v2m0 28v2m0 6v2m2 -28v2m0 8v2m1 6v2m0 8v2m1 -12v2m1 -28v2m0 10v2m0 6v2m0 14v2m3 -36v2m0 26v2m0 6v2m1 -28v2m0 6v2m0 8v2m0 6v2m1 -20v2m1 -18v2m0 8v2m0 22v2m1 -36v2m0 8v2m1 14v2m1 -16v2m0 4v2m1 -18v2m0 8v2m0 6v2m0 6v2m1 -10v2m2 -10v2m0 6v2m1 -2v2m1 -18v2m0 8v2m1 -12v2m1 -2v2m0 14v2m0 6v2m1 -26v2m0 14v4m1 -2v2m1 -10v2m0 6v2m1 -2v2m0 6v2m0 6v2m1 -26v2m0 14v2m1 6v2" stroke="#ff7300"/><path d="M397.5 295v2m0 50v2m1 -54v2m0 6v2m1 -4v4m1 2v2m2 4v2m0 26v2m2 -24v2m0 10v2m0 10v2m0 8v2m1 -22v2m1 -42v2m1 -2v2m0 40v2m1 -2v2m1 -12v2m3 22v2m1 -20v2m0 6v2m0 8v2m1 -10v2m1 -24v2m1 40v2m2 -28v2m1 8v2m0 6v2m0 8v2m1 -28v2m0 6v2m2 8v2m1 -18v2m1 6v2m0 16v2m1 -10v2m1 -18v2m0 6v2m0 6v2m1 -2v2m1 -10v2m2 -8v2m0 6v2m0 6v2m2 -2v2m4 -16v2m0 14v2m1 -2v2m2 -2v2m1 -10v2m0 6v2m1 -10v2m5 -8v2m2 -2v2" stroke="#ff6500"/><path d="M396.5 333v2m1 0v2m1 -44v2m0 6v2m0 32v2m1 0v2m1 -14v2m1 -2v4m1 -2v2m1 -14v2m0 24v2m2 -24v2m1 0v2m1 0v2m5 4v2m0 8v2m2 -10v2m0 18v2m1 -2v2m1 -20v2m0 8v2m1 -12v2m0 8v2m1 -2v2m1 -10v2m2 8v2m0 8v2m3 -18v2m3 8v2m1 -10v2m3 8v2m0 6v2m2 -18v2m0 6v2m4 -8v2m0 6v2m1 6v2m4 -16v2m1 -2v2m1 -2v2m3 6v2m1 -2v2m36 -40v12m0 2v8m1 -22v10m0 4v8" stroke="#ff5700"/><path d="M313.5 337v2m1 -2v2m1 -2v2m81 -22v2m1 0v2m1 -24v2m1 6v2m0 16v2m1 -16v2m1 0v2m2 16v2m1 -14v2m1 12v2m0 10v2m1 -12v2m1 10v2m11 6v2m3 -18v2m2 8v2m4 -8v2m5 8v2m52 -24v2m1 -4v4" stroke="#ff4d00"/><path d="M397.5 293v2" stroke="#ff4300"/></g><rect x="220" y="210" width="176.3" height="3" fill="#8cff00"/><rect x="449" y="210" width="239" height="3" fill="#8cff00"/><rect x="410.6" y="210" width="3.4" height="3" fill="#8cff00"/>
</g>
<rect x="219.5" y="197.5" width="469" height="180" fill="none" stroke="#000" stroke-width="1" shape-rendering="crispEdges"/>
<path d="M214 202.5H219M214 212.5H219M214 224.5H219M214 242.5H219M214 277.5H219M214 283.5H219M214 288.5H219M214 295.5H219M214 303.5H219M214 313.5H219M214 326.5H219M214 344.5H219M208 273.5H219M208 374.5H219" stroke="#000" stroke-width="1" fill="none" shape-rendering="crispEdges"/>
<path d="M220.5 378V383M238.5 378V389M256.5 378V383M274.5 378V383M292.5 378V383M310.5 378V383M328.5 378V383M346.5 378V383M364.5 378V383M382.5 378V383M400.5 378V383M418.5 378V383M436.5 378V383M454.5 378V389M472.5 378V383M490.5 378V383M508.5 378V383M526.5 378V383M544.5 378V383M562.5 378V383M580.5 378V383M598.5 378V383M616.5 378V383M634.5 378V383M652.5 378V383M670.5 378V389M688.5 378V383" stroke="#000" stroke-width="1" fill="none" shape-rendering="crispEdges"/>
<text x="173.61" y="282.6" font-size="16" font-weight="normal" fill="#000" text-anchor="start" textLength="19.13" lengthAdjust="spacingAndGlyphs" >10</text>
<text x="193.22" y="274.8" font-size="16" font-weight="normal" fill="#000" text-anchor="start" textLength="9.48" lengthAdjust="spacingAndGlyphs" >5</text>
<text x="173.61" y="383.6" font-size="16" font-weight="normal" fill="#000" text-anchor="start" textLength="19.13" lengthAdjust="spacingAndGlyphs" >10</text>
<text x="193.56" y="375.8" font-size="16" font-weight="normal" fill="#000" text-anchor="start" textLength="9.49" lengthAdjust="spacingAndGlyphs" >4</text>
<text transform="translate(160.9,297.97) rotate(-90)" font-size="16" font-weight="normal" fill="#000" textLength="20.97" lengthAdjust="spacingAndGlyphs">Hz</text>
<text x="215.98" y="408.7" font-size="16" font-weight="normal" fill="#000" text-anchor="start" textLength="44.99" lengthAdjust="spacingAndGlyphs" >00:00</text>
<text x="215.81" y="424.7" font-size="16" font-weight="normal" fill="#000" text-anchor="start" textLength="91.19" lengthAdjust="spacingAndGlyphs" >2012-12-02</text>
<text x="295.24" y="414.3" font-size="16" font-weight="normal" fill="#000" text-anchor="start" textLength="63.2" lengthAdjust="spacingAndGlyphs" >RBSP-A/</text>
<text x="575.65" y="414.3" font-size="16" font-weight="normal" fill="#000" text-anchor="start" textLength="35.54" lengthAdjust="spacingAndGlyphs" >Tpar</text>
<text x="647.88" y="408.7" font-size="16" font-weight="normal" fill="#000" text-anchor="start" textLength="44.99" lengthAdjust="spacingAndGlyphs" >00:00</text>
<text x="647.7" y="424.7" font-size="16" font-weight="normal" fill="#000" text-anchor="start" textLength="92.54" lengthAdjust="spacingAndGlyphs" >2012-12-03</text>
<rect x="704" y="198" width="16.5" height="179.5" fill="url(#cbar)"/>
<path d="M720.5 198V377.5M721 217.5H732M721 244.5H732M721 270.5H732M721 297.5H732M721 324.5H732M721 350.5H732M721 377.5H732M721 204.5H726M721 230.5H726M721 257.5H726M721 284.5H726M721 310.5H726M721 337.5H726M721 364.5H726" stroke="#000" stroke-width="1" fill="none" shape-rendering="crispEdges"/>
<text x="736.61" y="226.8" font-size="16" font-weight="normal" fill="#000" text-anchor="start" textLength="19.13" lengthAdjust="spacingAndGlyphs" >10</text>
<text x="756.2" y="218.8" font-size="16" font-weight="normal" fill="#000" text-anchor="start" textLength="25.84" lengthAdjust="spacingAndGlyphs" >-10</text>
<text x="736.61" y="253.5" font-size="16" font-weight="normal" fill="#000" text-anchor="start" textLength="19.13" lengthAdjust="spacingAndGlyphs" >10</text>
<text x="756.19" y="245.5" font-size="16" font-weight="normal" fill="#000" text-anchor="start" textLength="26.12" lengthAdjust="spacingAndGlyphs" >-12</text>
<text x="736.61" y="280.1" font-size="16" font-weight="normal" fill="#000" text-anchor="start" textLength="19.13" lengthAdjust="spacingAndGlyphs" >10</text>
<text x="756.2" y="272.1" font-size="16" font-weight="normal" fill="#000" text-anchor="start" textLength="25.65" lengthAdjust="spacingAndGlyphs" >-14</text>
<text x="736.61" y="306.8" font-size="16" font-weight="normal" fill="#000" text-anchor="start" textLength="19.13" lengthAdjust="spacingAndGlyphs" >10</text>
<text x="756.19" y="298.8" font-size="16" font-weight="normal" fill="#000" text-anchor="start" textLength="25.93" lengthAdjust="spacingAndGlyphs" >-16</text>
<text x="736.61" y="333.4" font-size="16" font-weight="normal" fill="#000" text-anchor="start" textLength="19.13" lengthAdjust="spacingAndGlyphs" >10</text>
<text x="756.19" y="325.4" font-size="16" font-weight="normal" fill="#000" text-anchor="start" textLength="25.93" lengthAdjust="spacingAndGlyphs" >-18</text>
<text x="736.61" y="360.1" font-size="16" font-weight="normal" fill="#000" text-anchor="start" textLength="19.13" lengthAdjust="spacingAndGlyphs" >10</text>
<text x="756.2" y="352.1" font-size="16" font-weight="normal" fill="#000" text-anchor="start" textLength="25.84" lengthAdjust="spacingAndGlyphs" >-20</text>
<text x="736.61" y="386.7" font-size="16" font-weight="normal" fill="#000" text-anchor="start" textLength="19.13" lengthAdjust="spacingAndGlyphs" >10</text>
<text x="756.19" y="378.7" font-size="16" font-weight="normal" fill="#000" text-anchor="start" textLength="26.12" lengthAdjust="spacingAndGlyphs" >-22</text>
<text transform="translate(805.0,338.6) rotate(-90)" font-size="16" font-weight="normal" fill="#000" textLength="102.63" lengthAdjust="spacingAndGlyphs">V^2/m^2/Hz</text>
<rect x="219.5" y="440.5" width="469" height="181" fill="none" stroke="#000" stroke-width="1" shape-rendering="crispEdges"/>
<path d="M208 599.5H219M208 562.5H219M208 529.5H219M208 500.5H219M208 475.5H219M208 451.5H219M214 621.5H219M214 580.5H219M214 545.5H219M214 514.5H219M214 487.5H219M214 463.5H219M214 441.5H219" stroke="#000" stroke-width="1" fill="none" shape-rendering="crispEdges"/>
<text x="177.37" y="604.6" font-size="16" font-weight="normal" fill="#000" text-anchor="start" textLength="24.73" lengthAdjust="spacingAndGlyphs" >1.2</text>
<text x="177.39" y="567.6" font-size="16" font-weight="normal" fill="#000" text-anchor="start" textLength="24.25" lengthAdjust="spacingAndGlyphs" >1.4</text>
<text x="177.38" y="534.6" font-size="16" font-weight="normal" fill="#000" text-anchor="start" textLength="24.53" lengthAdjust="spacingAndGlyphs" >1.6</text>
<text x="177.38" y="505.6" font-size="16" font-weight="normal" fill="#000" text-anchor="start" textLength="24.53" lengthAdjust="spacingAndGlyphs" >1.8</text>
<text x="177.84" y="480.6" font-size="16" font-weight="normal" fill="#000" text-anchor="start" textLength="23.97" lengthAdjust="spacingAndGlyphs" >2.0</text>
<text x="177.83" y="456.6" font-size="16" font-weight="normal" fill="#000" text-anchor="start" textLength="24.25" lengthAdjust="spacingAndGlyphs" >2.2</text>
<text transform="translate(166.0,580.78) rotate(-90)" font-size="16" font-weight="normal" fill="#000" textLength="98.29" lengthAdjust="spacingAndGlyphs">e Tperp/Tpar</text>
<path d="M220.5 622V627M238.5 622V633M256.5 622V627M274.5 622V627M292.5 622V627M310.5 622V627M328.5 622V627M346.5 622V627M364.5 622V627M382.5 622V627M400.5 622V627M418.5 622V627M436.5 622V627M454.5 622V633M472.5 622V627M490.5 622V627M508.5 622V627M526.5 622V627M544.5 622V627M562.5 622V627M580.5 622V627M598.5 622V627M616.5 622V627M634.5 622V627M652.5 622V627M670.5 622V633M688.5 622V627" stroke="#000" stroke-width="1" fill="none" shape-rendering="crispEdges"/>
<g clip-path="url(#lineclip)"><path d="M219.5 484V536M220.5 488V546M221.5 480V525M222.5 489V526M223.5 488V509M224.5 471V510M225.5 469V511M226.5 462V499M227.5 469V496M228.5 467V500M229.5 472V498M230.5 467V491M231.5 471V500M232.5 470V488M233.5 467V488M234.5 465V500M235.5 466V499M236.5 474V502M237.5 474V497M238.5 480V501M239.5 485V502M240.5 489V504M241.5 487V509M242.5 495V514M243.5 496V518M244.5 505V526M245.5 507V534M246.5 513V534M247.5 517V531M248.5 517V531M249.5 521V538M250.5 528V540M251.5 532V543M252.5 533V546M253.5 536V547M254.5 538V557M255.5 539V553M256.5 546V558M257.5 549V562M258.5 556V566M259.5 556V566M260.5 556V566M261.5 556V566M262.5 552V565M263.5 554V563M264.5 551V562M265.5 551V562M266.5 555V566M267.5 557V566M268.5 560V568M269.5 562V571M270.5 563V573M271.5 566V575M272.5 565V577M273.5 567V577M274.5 568V579M275.5 567V578M276.5 565V580M277.5 569V582M278.5 568V583M279.5 571V581M280.5 570V581M281.5 569V581M282.5 568V583M283.5 566V581M284.5 566V581M285.5 566V579M286.5 563V577M287.5 565V577M288.5 566V575M289.5 565V578M290.5 565V576M291.5 565V579M292.5 562V579M293.5 563V582M294.5 564V583M295.5 566V583M296.5 562V579M297.5 554V575M298.5 551V572M299.5 541V573M300.5 548V568M301.5 551V570M302.5 550V567M303.5 546V563M304.5 535V565M305.5 541V561M306.5 543V558M307.5 541V560M308.5 543V561M309.5 545V562M310.5 548V562M311.5 550V564M312.5 548V570M313.5 555V569M314.5 551V570M315.5 548V577M316.5 543V575M317.5 542V566M318.5 541V559M319.5 531V557M320.5 527V553M321.5 522V552M322.5 523V550M323.5 517V541M324.5 516V534M325.5 514V526M326.5 509V522M327.5 507V520M328.5 505V519M329.5 503V519M330.5 500V522M331.5 495V521M332.5 496V514M333.5 480V519M334.5 461V503M335.5 467V492M336.5 460V490M337.5 461V503M338.5 476V505M339.5 466V511M340.5 475V511M341.5 472V510M342.5 474V508M343.5 477V507M344.5 478V506M345.5 479V503M346.5 482V502M347.5 480V496M348.5 475V502M349.5 476V508M350.5 463V511M351.5 478V510M352.5 481V521M353.5 493V523M354.5 494V523M355.5 497V522M356.5 494V520M357.5 499V523M358.5 516V549M359.5 540V567M360.5 553V577M219.5 480V527" stroke="#000" stroke-width="1" fill="none" shape-rendering="crispEdges"/><path d="M233.2 455.2V466.3M330.2 486.5V500.6M348.2 464.2V474.3M354.2 524.8V541.0" stroke="#000" stroke-width="1" fill="none" shape-rendering="crispEdges"/><path d="M372.5 547V549M373.5 518V548M374.5 495V519M375.5 477V497M376.5 474V502M377.5 478V498M378.5 475V497M379.5 478V498M380.5 474V498M381.5 470V505M382.5 469V501M383.5 467V499M384.5 467V499M385.5 464V491M386.5 468V486M387.5 467V490M388.5 466V488M389.5 467V487M390.5 468V491M391.5 468V489M392.5 471V487M393.5 469V485M394.5 468V494M395.5 469V487M396.5 466V484M397.5 468V490M398.5 466V491M399.5 468V493M400.5 467V494M401.5 474V499M402.5 486V502M403.5 482V505M404.5 487V501M405.5 488V500M406.5 488V500M407.5 486V498M408.5 484V499M409.5 481V497M410.5 481V499M411.5 476V492M412.5 471V486M413.5 467V485M414.5 471V485M415.5 474V487M416.5 474V488M417.5 477V491M418.5 476V492M419.5 478V495M420.5 481V502M421.5 477V497M422.5 483V500M423.5 487V500M424.5 490V501M425.5 491V505M426.5 491V507M427.5 490V509M428.5 488V508M429.5 493V510M430.5 494V510M431.5 497V517M432.5 490V511M433.5 494V513M434.5 495V516M435.5 493V511M436.5 496V515M437.5 493V514M438.5 493V516M439.5 497V517M440.5 487V518M441.5 497V513M442.5 493V514M443.5 495V513M444.5 493V515M445.5 485V510M446.5 489V513M447.5 491V510M448.5 494V513M449.5 493V510M450.5 494V511M451.5 494V516M452.5 486V511M453.5 486V511M454.5 480V504M455.5 478V502M456.5 481V499M457.5 477V495M458.5 474V496M459.5 471V500M460.5 479V502M461.5 482V503M462.5 487V504M463.5 486V509M464.5 492V521M465.5 493V518M466.5 496V521M467.5 502V523M468.5 501V523M469.5 502V529M470.5 494V525M471.5 502V527M472.5 506V527M473.5 502V522M474.5 490V522M475.5 492V518M476.5 482V510M477.5 485V515M478.5 487V511M479.5 486V513M480.5 489V512M481.5 486V514M482.5 491V522M483.5 488V519M484.5 504V528M485.5 507V527M486.5 513V532M487.5 514V535M488.5 505V533M489.5 503V536M490.5 506V531M491.5 492V535M492.5 498V528M493.5 495V525M494.5 493V522M495.5 487V521M496.5 479V517M497.5 476V515M498.5 473V506M499.5 479V512M500.5 477V505M501.5 473V506M502.5 474V505M503.5 479V510M504.5 477V504M505.5 483V515M506.5 483V516M507.5 479V509M508.5 484V506M509.5 483V502M510.5 482V492M511.5 479V505M512.5 483V514M513.5 493V525M514.5 486V528M515.5 495V524M516.5 498V526M517.5 493V532M518.5 500V537M519.5 501V536M520.5 507V557M521.5 509V549M522.5 520V562M372.5 550V525" stroke="#000" stroke-width="1" fill="none" shape-rendering="crispEdges"/><path d="M389.6 448.1V464.2M392.6 488.5V518.8M396.7 448.1V466.3M488.4 537.0V559.2M510.7 458.2V480.4" stroke="#000" stroke-width="1" fill="none" shape-rendering="crispEdges"/><path d="M534.5 570V574M535.5 532V571M536.5 513V544M537.5 490V527M538.5 497V527M539.5 484V517M540.5 485V513M541.5 479V509M542.5 473V508M543.5 472V510M544.5 457V503M545.5 470V511M546.5 467V500M547.5 465V501M548.5 460V502M549.5 472V501M550.5 474V502M551.5 479V506M552.5 484V518M553.5 482V523M554.5 494V532M555.5 505V534M556.5 509V543M557.5 517V554M558.5 514V550M559.5 523V549M560.5 520V558M561.5 521V557M562.5 532V566M563.5 526V571M564.5 531V575M565.5 539V575M566.5 535V587M567.5 548V584M568.5 549V603M569.5 548V602M570.5 554V595M571.5 556V598M572.5 563V598M573.5 558V598M574.5 572V603M575.5 572V603M576.5 572V605M577.5 578V603M578.5 575V597M579.5 576V599M580.5 581V601M581.5 576V596M582.5 578V602M583.5 579V611M584.5 576V603M585.5 579V603M586.5 580V601M587.5 580V600M588.5 581V605M589.5 581V605M590.5 579V604M591.5 579V608M592.5 575V607M593.5 578V602M594.5 580V607M595.5 583V606M596.5 586V603M597.5 582V607M598.5 587V614M599.5 579V605M600.5 577V606M601.5 577V603M602.5 582V612M603.5 579V599M604.5 576V604M605.5 578V601M606.5 573V600M607.5 575V600M608.5 572V602M609.5 575V597M610.5 569V604M611.5 561V592M612.5 571V594M613.5 572V596M614.5 565V595M615.5 567V589M616.5 573V589M617.5 571V592M618.5 572V590M619.5 568V588M620.5 570V592M621.5 568V585M622.5 562V586M623.5 563V583M624.5 565V583M625.5 564V584M626.5 559V575M627.5 558V572M628.5 553V569M629.5 553V571M630.5 551V565M631.5 546V567M632.5 542V563M633.5 542V566M634.5 540V561M635.5 529V563M636.5 527V559M637.5 525V555M638.5 529V548M639.5 524V545M640.5 525V555M641.5 531V564M642.5 543V575M643.5 539V573M644.5 545V579M645.5 552V582M646.5 543V581M647.5 554V585M648.5 552V587M649.5 554V590M650.5 552V584M651.5 555V590M652.5 555V591M653.5 557V585M654.5 558V587M655.5 545V583M656.5 541V584M657.5 540V569M658.5 533V567M659.5 530V560M660.5 524V558M661.5 529V557M662.5 524V554M663.5 523V551M664.5 517V543M665.5 508V539M666.5 503V534M667.5 488V531M668.5 495V540M669.5 488V545M670.5 494V537M671.5 490V532M672.5 495V522M673.5 498V529M674.5 495V529M675.5 499V537M676.5 496V535M677.5 500V539M678.5 489V531M679.5 488V528M680.5 500V547M681.5 506V537M682.5 519V541M683.5 540V566M684.5 565V585M534.5 577V561" stroke="#000" stroke-width="1" fill="none" shape-rendering="crispEdges"/><path d="M639.3 514.7V526.8M670.0 536.9V595.4" stroke="#000" stroke-width="1" fill="none" shape-rendering="crispEdges"/></g>
<text x="215.37" y="652.7" font-size="16" font-weight="normal" fill="#000" text-anchor="start" textLength="45.61" lengthAdjust="spacingAndGlyphs" >00:00</text>
<text x="430.92" y="652.7" font-size="16" font-weight="normal" fill="#000" text-anchor="start" textLength="46.28" lengthAdjust="spacingAndGlyphs" >12:00</text>
<text x="647.27" y="652.7" font-size="16" font-weight="normal" fill="#000" text-anchor="start" textLength="45.61" lengthAdjust="spacingAndGlyphs" >00:00</text>
<text x="216.05" y="672.6" font-size="16" font-weight="normal" fill="#000" text-anchor="start" textLength="45.02" lengthAdjust="spacingAndGlyphs" >4.225</text>
<text x="431.88" y="672.6" font-size="16" font-weight="normal" fill="#000" text-anchor="start" textLength="45.39" lengthAdjust="spacingAndGlyphs" >5.756</text>
<text x="647.67" y="672.6" font-size="16" font-weight="normal" fill="#000" text-anchor="start" textLength="45.39" lengthAdjust="spacingAndGlyphs" >3.179</text>
<text x="199.64" y="692.5" font-size="16" font-weight="normal" fill="#000" text-anchor="start" textLength="61.32" lengthAdjust="spacingAndGlyphs" >-10.580</text>
<text x="426.02" y="692.5" font-size="16" font-weight="normal" fill="#000" text-anchor="start" textLength="50.94" lengthAdjust="spacingAndGlyphs" >-1.544</text>
<text x="631.54" y="692.5" font-size="16" font-weight="normal" fill="#000" text-anchor="start" textLength="61.32" lengthAdjust="spacingAndGlyphs" >-16.190</text>
<text x="215.49" y="712.4" font-size="16" font-weight="normal" fill="#000" text-anchor="start" textLength="45.77" lengthAdjust="spacingAndGlyphs" >2.247</text>
<text x="431.88" y="712.4" font-size="16" font-weight="normal" fill="#000" text-anchor="start" textLength="45.39" lengthAdjust="spacingAndGlyphs" >5.398</text>
<text x="647.58" y="712.4" font-size="16" font-weight="normal" fill="#000" text-anchor="start" textLength="45.39" lengthAdjust="spacingAndGlyphs" >8.125</text>
<text x="216.05" y="732.7" font-size="16" font-weight="normal" fill="#000" text-anchor="start" textLength="45.02" lengthAdjust="spacingAndGlyphs" >4.373</text>
<text x="431.88" y="732.7" font-size="16" font-weight="normal" fill="#000" text-anchor="start" textLength="45.29" lengthAdjust="spacingAndGlyphs" >5.760</text>
<text x="647.67" y="732.7" font-size="16" font-weight="normal" fill="#000" text-anchor="start" textLength="45.48" lengthAdjust="spacingAndGlyphs" >3.447</text>
<text x="155.55" y="672.6" font-size="16" font-weight="normal" fill="#000" text-anchor="start" textLength="13.11" lengthAdjust="spacingAndGlyphs" >R</text>
<text x="167.76" y="676.8" font-size="10" font-weight="normal" fill="#000" text-anchor="start" textLength="6.98" lengthAdjust="spacingAndGlyphs" >E</text>
<text x="137.16" y="692.5" font-size="16" font-weight="normal" fill="#000" text-anchor="start" textLength="37.28" lengthAdjust="spacingAndGlyphs" >MLat</text>
<text x="142.85" y="712.4" font-size="16" font-weight="normal" fill="#000" text-anchor="start" textLength="32.5" lengthAdjust="spacingAndGlyphs" >MLT</text>
<text x="164.8" y="732.7" font-size="16" font-weight="normal" fill="#000" text-anchor="start" textLength="9.75" lengthAdjust="spacingAndGlyphs" >L</text>
<text x="251.9" y="756.8" font-size="16" font-weight="normal" fill="#000" text-anchor="start" textLength="404.15" lengthAdjust="spacingAndGlyphs" >2012-12-01 (336) 23:00 to 2012-12-03 (338) 01:00</text>
<g><path d="M346.5 447.5 V363 Q346.5 359 350.5 359 H587 Q591 359 591 363 V447.5 Z" fill="#d6d6d6" stroke="#9c9c9c" stroke-width="1"/><path d="M347 383.5 V363.5 Q347 359.5 351 359.5 H586.5 Q590.5 359.5 590.5 363.5 V383.5 Z" fill="url(#dlgtitle)"/><rect x="349" y="384" width="240" height="62" fill="#fcfcfc"/><path d="M350 360.5 H587" stroke="#fafafa" stroke-width="1"/><path d="M359.6 369 H368.5 L364 374.7 Z" fill="#a4a4a4"/><path d="M569 369 L577 377 M577 369 L569 377" stroke="#a8a8a8" stroke-width="2"/><text x="410.6" y="377.8" font-size="13.5" font-weight="bold" fill="#6e6e6e" text-anchor="start" textLength="115.1" lengthAdjust="spacingAndGlyphs">Progress Monitor</text><text x="413.52" y="397" font-size="15.5" font-weight="bold" fill="#222" text-anchor="start" textLength="110.9" lengthAdjust="spacingAndGlyphs">running batch</text><text x="363.35" y="409.2" font-size="9" font-weight="bold" fill="#2a2a2a" text-anchor="start" textLength="213.12" lengthAdjust="spacingAndGlyphs">write /hom...walk3/product_20121228_00.png</text><rect x="349.5" y="411.5" width="219" height="19" fill="#ebebeb" stroke="#6d87b3" stroke-width="1"/><rect x="350" y="412" width="192" height="18" fill="#a3b5cc"/><rect x="569.5" y="411.5" width="19" height="19" fill="#dce4ee" stroke="#9fb0c4" stroke-width="1"/><rect x="572.5" y="414.3" width="13.5" height="13.3" rx="2.5" fill="#e0404c" stroke="#b02a30" stroke-width="1"/><path d="M576 417.8 L582.5 424.2 M582.5 417.8 L576 424.2" stroke="#fff" stroke-width="2.2"/><text x="376.35" y="443.2" font-size="13" font-weight="bold" fill="#222" text-anchor="start" textLength="185.45" lengthAdjust="spacingAndGlyphs">55/62 (42.8/min, eta 11.2 s)</text></g>
</svg></body></html>
